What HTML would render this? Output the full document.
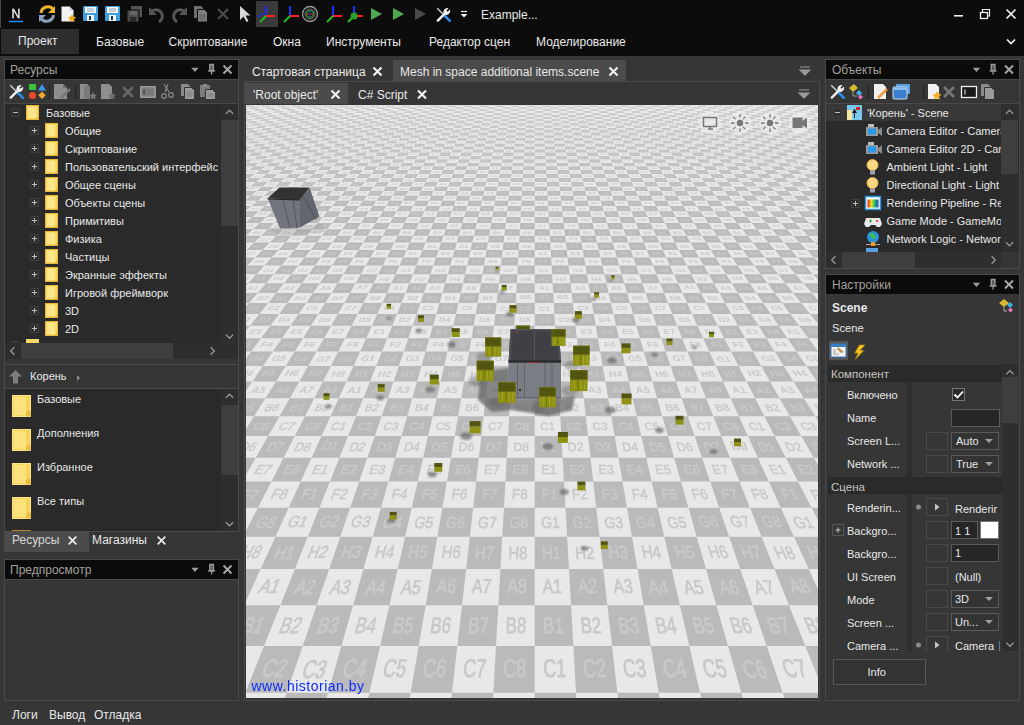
<!DOCTYPE html><html><head><meta charset="utf-8"><style>
*{margin:0;padding:0}
html,body{width:1024px;height:725px;overflow:hidden;background:#363636;font-family:"Liberation Sans",sans-serif;color:#e8e8e8;position:relative}
.t{position:absolute;white-space:nowrap;line-height:14px;height:14px}
.r{position:absolute}
svg{position:absolute;overflow:hidden}
</style></head><body><div class="r" style="left:0px;top:0px;width:1024px;height:56px;background:#0c0c0c;"></div>
<div class="r" style="left:1px;top:29px;width:78px;height:25px;background:#2e2e2e;"></div>
<div class="r" style="left:0px;top:0px;width:1px;height:28px;background:#4a4a4a;"></div>
<div class="t" style="left:18px;top:33.7px;font-size:12px;">Проект</div>
<div class="t" style="left:96px;top:35.4px;font-size:12px;">Базовые</div>
<div class="t" style="left:168.6px;top:35.4px;font-size:12px;">Скриптование</div>
<div class="t" style="left:273px;top:35.4px;font-size:12px;">Окна</div>
<div class="t" style="left:326px;top:35.4px;font-size:12px;">Инструменты</div>
<div class="t" style="left:429px;top:35.4px;font-size:12px;">Редактор сцен</div>
<div class="t" style="left:536px;top:35.4px;font-size:12px;">Моделирование</div>
<div class="t" style="left:481px;top:8.4px;font-size:12px;">Example...</div>
<div class="r" style="left:256px;top:1px;width:22px;height:26px;background:#3a3a3a;"></div>
<div class="r" style="left:4px;top:59px;width:235px;height:473px;border:1px solid #4a4a4a;box-sizing:border-box;background:#363636;"></div>
<div class="r" style="left:5px;top:60px;width:233px;height:19px;background:#0b0b0b;"></div>
<div class="t" style="left:10px;top:63.4px;font-size:12px;color:#a3a09a;">Ресурсы</div>
<div class="r" style="left:5px;top:79px;width:233px;height:1px;background:#4a4a4a;"></div>
<div class="r" style="left:5px;top:103px;width:233px;height:1px;background:#4a4a4a;"></div>
<div class="r" style="left:5px;top:104px;width:233px;height:239px;background:#2a2a2a;"></div>
<div class="r" style="left:221px;top:104px;width:17px;height:239px;background:#2e2e2e;"></div><div class="r" style="left:221px;top:120px;width:17px;height:106px;background:#3e3e3e;"></div>
<div class="r" style="left:5px;top:343px;width:233px;height:21px;background:#363636;"></div>
<div class="r" style="left:5px;top:343px;width:233px;height:16px;background:#2e2e2e;"></div><div class="r" style="left:21px;top:343px;width:152px;height:16px;background:#3e3e3e;"></div>
<div class="r" style="left:5px;top:364px;width:233px;height:1px;background:#4a4a4a;"></div>
<div class="r" style="left:5px;top:388px;width:233px;height:1px;background:#4a4a4a;"></div>
<div class="r" style="left:5px;top:389px;width:233px;height:142px;background:#2a2a2a;"></div>
<div class="r" style="left:221px;top:389px;width:17px;height:142px;background:#2e2e2e;"></div><div class="r" style="left:221px;top:405px;width:17px;height:70px;background:#3e3e3e;"></div>
<div class="t" style="left:46px;top:106.4px;font-size:11px;">Базовые</div>
<div class="t" style="left:65px;top:124.4px;font-size:11px;">Общие</div>
<div class="t" style="left:65px;top:142.4px;font-size:11px;">Скриптование</div>
<div class="t" style="left:65px;top:160.4px;font-size:11px;">Пользовательский интерфейс</div>
<div class="t" style="left:65px;top:178.4px;font-size:11px;">Общее сцены</div>
<div class="t" style="left:65px;top:196.4px;font-size:11px;">Объекты сцены</div>
<div class="t" style="left:65px;top:214.4px;font-size:11px;">Примитивы</div>
<div class="t" style="left:65px;top:232.4px;font-size:11px;">Физика</div>
<div class="t" style="left:65px;top:250.4px;font-size:11px;">Частицы</div>
<div class="t" style="left:65px;top:268.4px;font-size:11px;">Экранные эффекты</div>
<div class="t" style="left:65px;top:286.4px;font-size:11px;">Игровой фреймворк</div>
<div class="t" style="left:65px;top:304.4px;font-size:11px;">3D</div>
<div class="t" style="left:65px;top:322.4px;font-size:11px;">2D</div>
<div class="t" style="left:30px;top:369.4px;font-size:11px;">Корень</div>
<div class="t" style="left:37px;top:392.4px;font-size:11px;">Базовые</div>
<div class="t" style="left:37px;top:426.4px;font-size:11px;">Дополнения</div>
<div class="t" style="left:37px;top:460.4px;font-size:11px;">Избранное</div>
<div class="t" style="left:37px;top:494.4px;font-size:11px;">Все типы</div>
<div class="r" style="left:4px;top:531px;width:85px;height:21px;background:#4b4b4b;"></div>
<div class="t" style="left:12px;top:533.4px;font-size:12px;color:#d8d8d8;">Ресурсы</div>
<div class="t" style="left:92px;top:533.4px;font-size:12px;">Магазины</div>
<div class="r" style="left:4px;top:559px;width:235px;height:142px;border:1px solid #4a4a4a;box-sizing:border-box;background:#363636;"></div>
<div class="r" style="left:5px;top:560px;width:233px;height:19px;background:#0b0b0b;"></div>
<div class="t" style="left:10px;top:563.4px;font-size:12px;color:#a3a09a;">Предпросмотр</div>
<div class="r" style="left:5px;top:579px;width:233px;height:1px;background:#4a4a4a;"></div>
<div class="t" style="left:12px;top:708.4px;font-size:12px;">Логи</div>
<div class="t" style="left:49px;top:708.4px;font-size:12px;">Вывод</div>
<div class="t" style="left:94px;top:708.4px;font-size:12px;">Отладка</div>
<div class="r" style="left:393px;top:60px;width:233px;height:21px;background:#4b4b4b;"></div>
<div class="t" style="left:252px;top:65.4px;font-size:12px;">Стартовая страница</div>
<div class="t" style="left:400px;top:65.4px;font-size:12px;">Mesh in space additional items.scene</div>
<div class="r" style="left:244px;top:81px;width:576px;height:620px;border:1px solid #4a4a4a;box-sizing:border-box;background:#363636;"></div>
<div class="r" style="left:245px;top:83px;width:103px;height:21px;background:#4b4b4b;"></div>
<div class="t" style="left:253px;top:88.4px;font-size:12px;">'Root object'</div>
<div class="t" style="left:358px;top:88.4px;font-size:12px;">C# Script</div>
<div class="r" style="left:825px;top:59px;width:195px;height:210px;border:1px solid #4a4a4a;box-sizing:border-box;background:#363636;"></div>
<div class="r" style="left:826px;top:60px;width:193px;height:19px;background:#0b0b0b;"></div>
<div class="t" style="left:832px;top:63.4px;font-size:12px;color:#a3a09a;">Объекты</div>
<div class="r" style="left:826px;top:79px;width:193px;height:1px;background:#4a4a4a;"></div>
<div class="r" style="left:826px;top:103px;width:193px;height:1px;background:#4a4a4a;"></div>
<div class="r" style="left:826px;top:104px;width:193px;height:148px;background:#2a2a2a;"></div>
<div class="r" style="left:826px;top:104px;width:175px;height:17px;background:#383838;"></div>
<div class="r" style="left:1001px;top:104px;width:17px;height:148px;background:#2e2e2e;"></div><div class="r" style="left:1001px;top:120px;width:17px;height:54px;background:#3e3e3e;"></div>
<div class="r" style="left:826px;top:252px;width:193px;height:16px;background:#363636;"></div>
<div class="r" style="left:826px;top:252px;width:175px;height:16px;background:#2e2e2e;"></div><div class="r" style="left:842px;top:252px;width:73px;height:16px;background:#3e3e3e;"></div>
<div class="t" style="left:867px;top:106.4px;font-size:11px;">'Корень' - Scene</div>
<div class="r" style="left:826px;top:104px;width:175px;height:148px;overflow:hidden"><div class="t" style="left:60.5px;top:20.4px;font-size:11px;">Camera Editor - Camera</div><div class="t" style="left:60.5px;top:38.4px;font-size:11px;">Camera Editor 2D - Camera</div><div class="t" style="left:60.5px;top:56.4px;font-size:11px;">Ambient Light - Light</div><div class="t" style="left:60.5px;top:74.4px;font-size:11px;">Directional Light - Light</div><div class="t" style="left:60.5px;top:92.4px;font-size:11px;">Rendering Pipeline - Render</div><div class="t" style="left:60.5px;top:110.4px;font-size:11px;">Game Mode - GameMode</div><div class="t" style="left:60.5px;top:128.4px;font-size:11px;">Network Logic - Network</div></div>
<div class="r" style="left:825px;top:274px;width:195px;height:427px;border:1px solid #4a4a4a;box-sizing:border-box;background:#363636;"></div>
<div class="r" style="left:826px;top:275px;width:193px;height:19px;background:#0b0b0b;"></div>
<div class="t" style="left:832px;top:278.4px;font-size:12px;color:#a3a09a;">Настройки</div>
<div class="t" style="left:832px;top:301.4px;font-size:12px;font-weight:bold">Scene</div>
<div class="t" style="left:832px;top:321.4px;font-size:11.2px;">Scene</div>
<div class="r" style="left:829px;top:341px;width:19px;height:19px;background:#555555;"></div>
<div class="r" style="left:828px;top:365px;width:174px;height:17px;background:#2a2a2a;"></div>
<div class="t" style="left:831px;top:366.9px;font-size:11.5px;color:#c8c5be;">Компонент</div>
<div class="r" style="left:1002px;top:364px;width:16px;height:287px;background:#2e2e2e;"></div><div class="r" style="left:1002px;top:377px;width:16px;height:46px;background:#3e3e3e;"></div>
<div class="r" style="left:906px;top:382px;width:6px;height:95px;background:#2e2e2e;"></div>
<div class="r" style="left:906px;top:494px;width:6px;height:157px;background:#2e2e2e;"></div>
<div class="t" style="left:847px;top:388.4px;font-size:11px;">Включено</div>
<div class="t" style="left:847px;top:411.4px;font-size:11px;">Name</div>
<div class="t" style="left:847px;top:434.4px;font-size:11px;">Screen L...</div>
<div class="t" style="left:847px;top:457.4px;font-size:11px;">Network ...</div>
<div class="r" style="left:951px;top:409px;width:49px;height:18px;border:1px solid #5a5a5a;box-sizing:border-box;background:#262626;"></div>
<div class="r" style="left:926px;top:432px;width:22px;height:18px;border:1px solid #4a4a4a;box-sizing:border-box;background:#363636;"></div>
<div class="r" style="left:951px;top:432px;width:48px;height:18px;border:1px solid #5a5a5a;box-sizing:border-box;background:#333333;"></div>
<div class="r" style="left:926px;top:455px;width:22px;height:18px;border:1px solid #4a4a4a;box-sizing:border-box;background:#363636;"></div>
<div class="r" style="left:951px;top:455px;width:48px;height:18px;border:1px solid #5a5a5a;box-sizing:border-box;background:#333333;"></div>
<div class="t" style="left:956px;top:434.4px;font-size:11px;">Auto</div>
<div class="t" style="left:956px;top:457.4px;font-size:11px;">True</div>
<div class="r" style="left:828px;top:477px;width:174px;height:17px;background:#2a2a2a;"></div>
<div class="t" style="left:831px;top:479.9px;font-size:11.5px;color:#c8c5be;">Сцена</div>
<div class="t" style="left:847px;top:501.4px;font-size:11px;">Renderin...</div>
<div class="t" style="left:847px;top:524.4px;font-size:11px;">Backgro...</div>
<div class="t" style="left:847px;top:547.4px;font-size:11px;">Backgro...</div>
<div class="t" style="left:847px;top:570.4px;font-size:11px;">UI Screen</div>
<div class="t" style="left:847px;top:593.4px;font-size:11px;">Mode</div>
<div class="t" style="left:847px;top:616.4px;font-size:11px;">Screen ...</div>
<div class="t" style="left:847px;top:639.4px;font-size:11px;">Camera ...</div>
<div class="r" style="left:926px;top:498px;width:22px;height:18px;border:1px solid #4a4a4a;box-sizing:border-box;background:#363636;"></div>
<div class="t" style="left:955px;top:502.4px;font-size:11px;">Renderir</div>
<div class="r" style="left:926px;top:521px;width:22px;height:18px;border:1px solid #4a4a4a;box-sizing:border-box;background:#363636;"></div>
<div class="r" style="left:951px;top:521px;width:27px;height:18px;border:1px solid #5a5a5a;box-sizing:border-box;background:#262626;"></div>
<div class="t" style="left:955px;top:524.4px;font-size:11px;">1 1</div>
<div class="r" style="left:980px;top:521px;width:19px;height:18px;border:1px solid #777;box-sizing:border-box;background:#ffffff;"></div>
<div class="r" style="left:926px;top:544px;width:22px;height:18px;border:1px solid #4a4a4a;box-sizing:border-box;background:#363636;"></div>
<div class="r" style="left:951px;top:544px;width:48px;height:18px;border:1px solid #5a5a5a;box-sizing:border-box;background:#262626;"></div>
<div class="t" style="left:955px;top:546.4px;font-size:11px;">1</div>
<div class="r" style="left:926px;top:567px;width:22px;height:18px;border:1px solid #4a4a4a;box-sizing:border-box;background:#363636;"></div>
<div class="t" style="left:955px;top:570.4px;font-size:11px;">(Null)</div>
<div class="r" style="left:926px;top:590px;width:22px;height:18px;border:1px solid #4a4a4a;box-sizing:border-box;background:#363636;"></div>
<div class="r" style="left:951px;top:590px;width:48px;height:18px;border:1px solid #5a5a5a;box-sizing:border-box;background:#333333;"></div>
<div class="t" style="left:955px;top:592.4px;font-size:11px;">3D</div>
<div class="r" style="left:926px;top:613px;width:22px;height:18px;border:1px solid #4a4a4a;box-sizing:border-box;background:#363636;"></div>
<div class="r" style="left:951px;top:613px;width:48px;height:18px;border:1px solid #5a5a5a;box-sizing:border-box;background:#333333;"></div>
<div class="t" style="left:955px;top:615.4px;font-size:11px;">Un...</div>
<div class="r" style="left:926px;top:636px;width:76px;height:15px;overflow:hidden"><div class="r" style="left:0px;top:0px;width:22px;height:18px;border:1px solid #4a4a4a;box-sizing:border-box;background:#363636;"></div><div class="t" style="left:29px;top:3.4px;font-size:11px;">Camera</div><div class="r" style="left:73px;top:5px;width:1px;height:10px;background:#4a7ac0;"></div></div>
<div class="r" style="left:833px;top:659px;width:93px;height:26px;border:1px solid #585858;box-sizing:border-box;background:#333333;"></div>
<div class="t" style="left:867.5px;top:665.4px;font-size:11px;">Info</div>
<svg style="left:246px;top:105px;will-change:transform" width="572" height="593" viewBox="246 105 572 593"><rect x="246" y="105" width="572" height="593" fill="#e8e8e8"/><path fill-rule="evenodd" fill="#bababa" d="M241 692.7H823V746H241ZM241 605.3H823V646.1H241ZM241 536.7H823V569H241ZM241 481.5H823V507.7H241ZM241 436.1H823V457.8H241ZM241 398.2H823V416.3H241ZM265.4 398.2L289.8 398.2L90.9 746L46.5 746ZM314.3 398.2L338.8 398.2L179.6 746L135.2 746ZM363.3 398.2L387.8 398.2L268.4 746L224 746ZM412.3 398.2L436.8 398.2L357.2 746L312.8 746ZM461.2 398.2L485.7 398.2L445.9 746L401.5 746ZM510.2 398.2L534.7 398.2L534.7 746L490.3 746ZM559.2 398.2L583.7 398.2L623.5 746L579.1 746ZM608.2 398.2L632.6 398.2L712.2 746L667.9 746ZM657.1 398.2L681.6 398.2L801 746L756.6 746ZM706.1 398.2L730.6 398.2L889.8 746L845.4 746ZM755.1 398.2L779.6 398.2L978.5 746L934.2 746ZM804 398.2L828.5 398.2L1067.3 746L1022.9 746Z"/><path fill-rule="evenodd" fill="#bababa" d="M241 365.9H823V381.4H241ZM241 338.2H823V351.5H241ZM241 314H823V325.7H241ZM241 292.9H823V303.1H241ZM241 274.2H823V283.3H241ZM239 274.2L256.4 274.2L142.9 398.2L118.4 398.2ZM273.8 274.2L291.2 274.2L191.9 398.2L167.4 398.2ZM308.6 274.2L325.9 274.2L240.9 398.2L216.4 398.2ZM343.3 274.2L360.7 274.2L289.8 398.2L265.4 398.2ZM378.1 274.2L395.5 274.2L338.8 398.2L314.3 398.2ZM412.9 274.2L430.3 274.2L387.8 398.2L363.3 398.2ZM447.7 274.2L465.1 274.2L436.8 398.2L412.3 398.2ZM482.5 274.2L499.9 274.2L485.7 398.2L461.2 398.2ZM517.3 274.2L534.7 274.2L534.7 398.2L510.2 398.2ZM552.1 274.2L569.5 274.2L583.7 398.2L559.2 398.2ZM586.9 274.2L604.3 274.2L632.6 398.2L608.2 398.2ZM621.7 274.2L639.1 274.2L681.6 398.2L657.1 398.2ZM656.5 274.2L673.9 274.2L730.6 398.2L706.1 398.2ZM691.3 274.2L708.7 274.2L779.6 398.2L755.1 398.2ZM726.1 274.2L743.5 274.2L828.5 398.2L804 398.2ZM760.8 274.2L778.2 274.2L877.5 398.2L853 398.2ZM795.6 274.2L813 274.2L926.5 398.2L902 398.2Z"/><path fill-rule="evenodd" fill="#bababa" d="M241 257.6H823V265.6H241ZM241 242.6H823V249.9H241ZM241 229.2H823V235.7H241ZM241 217H823V223H241ZM238.1 217L252.2 217L186.8 274.2L169.4 274.2ZM266.3 217L280.5 217L221.6 274.2L204.2 274.2ZM294.6 217L308.7 217L256.4 274.2L239 274.2ZM322.8 217L337 217L291.2 274.2L273.8 274.2ZM351.1 217L365.2 217L325.9 274.2L308.6 274.2ZM379.3 217L393.5 217L360.7 274.2L343.3 274.2ZM407.6 217L421.7 217L395.5 274.2L378.1 274.2ZM435.8 217L450 217L430.3 274.2L412.9 274.2ZM464.1 217L478.2 217L465.1 274.2L447.7 274.2ZM492.3 217L506.5 217L499.9 274.2L482.5 274.2ZM520.6 217L534.7 217L534.7 274.2L517.3 274.2ZM548.8 217L562.9 217L569.5 274.2L552.1 274.2ZM577.1 217L591.2 217L604.3 274.2L586.9 274.2ZM605.3 217L619.4 217L639.1 274.2L621.7 274.2ZM633.6 217L647.7 217L673.9 274.2L656.5 274.2ZM661.8 217L675.9 217L708.7 274.2L691.3 274.2ZM690.1 217L704.2 217L743.5 274.2L726.1 274.2ZM718.3 217L732.4 217L778.2 274.2L760.8 274.2ZM746.6 217L760.7 217L813 274.2L795.6 274.2ZM774.8 217L788.9 217L847.8 274.2L830.4 274.2ZM803.1 217L817.2 217L882.6 274.2L865.2 274.2Z"/><path fill-rule="evenodd" fill="#bdbdbd" d="M241 205.9H823V211.3H241ZM241 195.8H823V200.7H241ZM241 186.5H823V191H241ZM250 186.5L262.4 186.5L224 217L209.8 217ZM274.8 186.5L287.1 186.5L252.2 217L238.1 217ZM299.5 186.5L311.9 186.5L280.5 217L266.3 217ZM324.3 186.5L336.6 186.5L308.7 217L294.6 217ZM349 186.5L361.4 186.5L337 217L322.8 217ZM373.8 186.5L386.2 186.5L365.2 217L351.1 217ZM398.5 186.5L410.9 186.5L393.5 217L379.3 217ZM423.3 186.5L435.7 186.5L421.7 217L407.6 217ZM448.1 186.5L460.4 186.5L450 217L435.8 217ZM472.8 186.5L485.2 186.5L478.2 217L464.1 217ZM497.6 186.5L509.9 186.5L506.5 217L492.3 217ZM522.3 186.5L534.7 186.5L534.7 217L520.6 217ZM547.1 186.5L559.5 186.5L562.9 217L548.8 217ZM571.8 186.5L584.2 186.5L591.2 217L577.1 217ZM596.6 186.5L609 186.5L619.4 217L605.3 217ZM621.3 186.5L633.7 186.5L647.7 217L633.6 217ZM646.1 186.5L658.5 186.5L675.9 217L661.8 217ZM670.9 186.5L683.2 186.5L704.2 217L690.1 217ZM695.6 186.5L708 186.5L732.4 217L718.3 217ZM720.4 186.5L732.8 186.5L760.7 217L746.6 217ZM745.1 186.5L757.5 186.5L788.9 217L774.8 217ZM769.9 186.5L782.3 186.5L817.2 217L803.1 217ZM794.6 186.5L807 186.5L845.4 217L831.3 217ZM819.4 186.5L831.8 186.5L873.7 217L859.6 217Z"/><rect x="246" y="162.7" width="572" height="23.8" fill="#e9e9e9"/><path fill-rule="evenodd" fill="#c1c1c1" d="M241 177.9H823V182.1H241ZM241 170H823V173.9H241ZM241 162.7H823V166.3H241ZM237.3 162.7L248.3 162.7L212.9 186.5L200.5 186.5ZM259.3 162.7L270.3 162.7L237.6 186.5L225.2 186.5ZM281.3 162.7L292.3 162.7L262.4 186.5L250 186.5ZM303.4 162.7L314.4 162.7L287.1 186.5L274.8 186.5ZM325.4 162.7L336.4 162.7L311.9 186.5L299.5 186.5ZM347.4 162.7L358.4 162.7L336.6 186.5L324.3 186.5ZM369.5 162.7L380.5 162.7L361.4 186.5L349 186.5ZM391.5 162.7L402.5 162.7L386.2 186.5L373.8 186.5ZM413.5 162.7L424.5 162.7L410.9 186.5L398.5 186.5ZM435.6 162.7L446.6 162.7L435.7 186.5L423.3 186.5ZM457.6 162.7L468.6 162.7L460.4 186.5L448.1 186.5ZM479.6 162.7L490.6 162.7L485.2 186.5L472.8 186.5ZM501.7 162.7L512.7 162.7L509.9 186.5L497.6 186.5ZM523.7 162.7L534.7 162.7L534.7 186.5L522.3 186.5ZM545.7 162.7L556.7 162.7L559.5 186.5L547.1 186.5ZM567.7 162.7L578.8 162.7L584.2 186.5L571.8 186.5ZM589.8 162.7L600.8 162.7L609 186.5L596.6 186.5ZM611.8 162.7L622.8 162.7L633.7 186.5L621.3 186.5ZM633.8 162.7L644.9 162.7L658.5 186.5L646.1 186.5ZM655.9 162.7L666.9 162.7L683.2 186.5L670.9 186.5ZM677.9 162.7L688.9 162.7L708 186.5L695.6 186.5ZM699.9 162.7L711 162.7L732.8 186.5L720.4 186.5ZM722 162.7L733 162.7L757.5 186.5L745.1 186.5ZM744 162.7L755 162.7L782.3 186.5L769.9 186.5ZM766 162.7L777.1 162.7L807 186.5L794.6 186.5ZM788.1 162.7L799.1 162.7L831.8 186.5L819.4 186.5ZM810.1 162.7L821.1 162.7L856.5 186.5L844.2 186.5Z"/><rect x="246" y="143.6" width="572" height="19.1" fill="#e9e9e9"/><path fill-rule="evenodd" fill="#c4c4c4" d="M241 155.9H823V159.2H241ZM241 149.5H823V152.6H241ZM241 143.6H823V146.5H241ZM246.9 143.6L256.8 143.6L226.2 162.7L215.2 162.7ZM266.7 143.6L276.7 143.6L248.3 162.7L237.3 162.7ZM286.6 143.6L296.5 143.6L270.3 162.7L259.3 162.7ZM306.4 143.6L316.4 143.6L292.3 162.7L281.3 162.7ZM326.3 143.6L336.2 143.6L314.4 162.7L303.4 162.7ZM346.1 143.6L356.1 143.6L336.4 162.7L325.4 162.7ZM366 143.6L375.9 143.6L358.4 162.7L347.4 162.7ZM385.8 143.6L395.8 143.6L380.5 162.7L369.5 162.7ZM405.7 143.6L415.6 143.6L402.5 162.7L391.5 162.7ZM425.5 143.6L435.5 143.6L424.5 162.7L413.5 162.7ZM445.4 143.6L455.3 143.6L446.6 162.7L435.6 162.7ZM465.2 143.6L475.2 143.6L468.6 162.7L457.6 162.7ZM485.1 143.6L495 143.6L490.6 162.7L479.6 162.7ZM504.9 143.6L514.9 143.6L512.7 162.7L501.7 162.7ZM524.8 143.6L534.7 143.6L534.7 162.7L523.7 162.7ZM544.6 143.6L554.5 143.6L556.7 162.7L545.7 162.7ZM564.5 143.6L574.4 143.6L578.8 162.7L567.7 162.7ZM584.3 143.6L594.2 143.6L600.8 162.7L589.8 162.7ZM604.2 143.6L614.1 143.6L622.8 162.7L611.8 162.7ZM624 143.6L633.9 143.6L644.9 162.7L633.8 162.7ZM643.9 143.6L653.8 143.6L666.9 162.7L655.9 162.7ZM663.7 143.6L673.6 143.6L688.9 162.7L677.9 162.7ZM683.6 143.6L693.5 143.6L711 162.7L699.9 162.7ZM703.4 143.6L713.3 143.6L733 162.7L722 162.7ZM723.3 143.6L733.2 143.6L755 162.7L744 162.7ZM743.1 143.6L753 143.6L777.1 162.7L766 162.7ZM763 143.6L772.9 143.6L799.1 162.7L788.1 162.7ZM782.8 143.6L792.7 143.6L821.1 162.7L810.1 162.7ZM802.7 143.6L812.6 143.6L843.2 162.7L832.1 162.7Z"/><rect x="246" y="127.9" width="572" height="15.6" fill="#e9e9e9"/><path fill-rule="evenodd" fill="#c7c7c7" d="M241 138H823V140.8H241ZM241 132.8H823V135.4H241ZM241 127.9H823V130.3H241ZM236.7 127.9L245.8 127.9L217.1 143.6L207.2 143.6ZM254.8 127.9L263.8 127.9L237 143.6L227 143.6ZM272.8 127.9L281.9 127.9L256.8 143.6L246.9 143.6ZM290.9 127.9L299.9 127.9L276.7 143.6L266.7 143.6ZM309 127.9L318 127.9L296.5 143.6L286.6 143.6ZM327 127.9L336.1 127.9L316.4 143.6L306.4 143.6ZM345.1 127.9L354.1 127.9L336.2 143.6L326.3 143.6ZM363.1 127.9L372.2 127.9L356.1 143.6L346.1 143.6ZM381.2 127.9L390.2 127.9L375.9 143.6L366 143.6ZM399.3 127.9L408.3 127.9L395.8 143.6L385.8 143.6ZM417.3 127.9L426.3 127.9L415.6 143.6L405.7 143.6ZM435.4 127.9L444.4 127.9L435.5 143.6L425.5 143.6ZM453.4 127.9L462.5 127.9L455.3 143.6L445.4 143.6ZM471.5 127.9L480.5 127.9L475.2 143.6L465.2 143.6ZM489.6 127.9L498.6 127.9L495 143.6L485.1 143.6ZM507.6 127.9L516.6 127.9L514.9 143.6L504.9 143.6ZM525.7 127.9L534.7 127.9L534.7 143.6L524.8 143.6ZM543.7 127.9L552.8 127.9L554.5 143.6L544.6 143.6ZM561.8 127.9L570.8 127.9L574.4 143.6L564.5 143.6ZM579.8 127.9L588.9 127.9L594.2 143.6L584.3 143.6ZM597.9 127.9L606.9 127.9L614.1 143.6L604.2 143.6ZM616 127.9L625 127.9L633.9 143.6L624 143.6ZM634 127.9L643.1 127.9L653.8 143.6L643.9 143.6ZM652.1 127.9L661.1 127.9L673.6 143.6L663.7 143.6ZM670.1 127.9L679.2 127.9L693.5 143.6L683.6 143.6ZM688.2 127.9L697.2 127.9L713.3 143.6L703.4 143.6ZM706.3 127.9L715.3 127.9L733.2 143.6L723.3 143.6ZM724.3 127.9L733.3 127.9L753 143.6L743.1 143.6ZM742.4 127.9L751.4 127.9L772.9 143.6L763 143.6ZM760.4 127.9L769.5 127.9L792.7 143.6L782.8 143.6ZM778.5 127.9L787.5 127.9L812.6 143.6L802.7 143.6ZM796.6 127.9L805.6 127.9L832.4 143.6L822.5 143.6ZM814.6 127.9L823.6 127.9L852.3 143.6L842.4 143.6Z"/><rect x="246" y="114.9" width="572" height="13.1" fill="#eaeaea"/><path fill-rule="evenodd" fill="#cacaca" d="M241 123.3H823V125.6H241ZM241 119H823V121.1H241ZM241 114.9H823V116.9H241ZM244.8 114.9L253.1 114.9L227.7 127.9L218.7 127.9ZM261.4 114.9L269.7 114.9L245.8 127.9L236.7 127.9ZM277.9 114.9L286.2 114.9L263.8 127.9L254.8 127.9ZM294.5 114.9L302.8 114.9L281.9 127.9L272.8 127.9ZM311.1 114.9L319.4 114.9L299.9 127.9L290.9 127.9ZM327.6 114.9L335.9 114.9L318 127.9L309 127.9ZM344.2 114.9L352.5 114.9L336.1 127.9L327 127.9ZM360.8 114.9L369 114.9L354.1 127.9L345.1 127.9ZM377.3 114.9L385.6 114.9L372.2 127.9L363.1 127.9ZM393.9 114.9L402.2 114.9L390.2 127.9L381.2 127.9ZM410.5 114.9L418.7 114.9L408.3 127.9L399.3 127.9ZM427 114.9L435.3 114.9L426.3 127.9L417.3 127.9ZM443.6 114.9L451.9 114.9L444.4 127.9L435.4 127.9ZM460.2 114.9L468.4 114.9L462.5 127.9L453.4 127.9ZM476.7 114.9L485 114.9L480.5 127.9L471.5 127.9ZM493.3 114.9L501.6 114.9L498.6 127.9L489.6 127.9ZM509.9 114.9L518.1 114.9L516.6 127.9L507.6 127.9ZM526.4 114.9L534.7 114.9L534.7 127.9L525.7 127.9ZM543 114.9L551.3 114.9L552.8 127.9L543.7 127.9ZM559.5 114.9L567.8 114.9L570.8 127.9L561.8 127.9ZM576.1 114.9L584.4 114.9L588.9 127.9L579.8 127.9ZM592.7 114.9L601 114.9L606.9 127.9L597.9 127.9ZM609.2 114.9L617.5 114.9L625 127.9L616 127.9ZM625.8 114.9L634.1 114.9L643.1 127.9L634 127.9ZM642.4 114.9L650.7 114.9L661.1 127.9L652.1 127.9ZM658.9 114.9L667.2 114.9L679.2 127.9L670.1 127.9ZM675.5 114.9L683.8 114.9L697.2 127.9L688.2 127.9ZM692.1 114.9L700.4 114.9L715.3 127.9L706.3 127.9ZM708.6 114.9L716.9 114.9L733.3 127.9L724.3 127.9ZM725.2 114.9L733.5 114.9L751.4 127.9L742.4 127.9ZM741.8 114.9L750 114.9L769.5 127.9L760.4 127.9ZM758.3 114.9L766.6 114.9L787.5 127.9L778.5 127.9ZM774.9 114.9L783.2 114.9L805.6 127.9L796.6 127.9ZM791.5 114.9L799.7 114.9L823.6 127.9L814.6 127.9ZM808 114.9L816.3 114.9L841.7 127.9L832.7 127.9Z"/><rect x="246" y="100.5" width="572" height="14.4" fill="#eaeaea"/><path fill-rule="evenodd" fill="#cdcdcd" d="M241 111H823V112.9H241ZM241 107.3H823V109.1H241ZM241 103.8H823V105.5H241ZM241 100.5H823V102.1H241ZM243.8 100.5L251.2 100.5L220 114.9L211.7 114.9ZM258.7 100.5L266.1 100.5L236.5 114.9L228.2 114.9ZM273.6 100.5L281.1 100.5L253.1 114.9L244.8 114.9ZM288.5 100.5L296 100.5L269.7 114.9L261.4 114.9ZM303.4 100.5L310.9 100.5L286.2 114.9L277.9 114.9ZM318.4 100.5L325.8 100.5L302.8 114.9L294.5 114.9ZM333.3 100.5L340.7 100.5L319.4 114.9L311.1 114.9ZM348.2 100.5L355.7 100.5L335.9 114.9L327.6 114.9ZM363.1 100.5L370.6 100.5L352.5 114.9L344.2 114.9ZM378 100.5L385.5 100.5L369 114.9L360.8 114.9ZM393 100.5L400.4 100.5L385.6 114.9L377.3 114.9ZM407.9 100.5L415.3 100.5L402.2 114.9L393.9 114.9ZM422.8 100.5L430.3 100.5L418.7 114.9L410.5 114.9ZM437.7 100.5L445.2 100.5L435.3 114.9L427 114.9ZM452.6 100.5L460.1 100.5L451.9 114.9L443.6 114.9ZM467.6 100.5L475 100.5L468.4 114.9L460.2 114.9ZM482.5 100.5L489.9 100.5L485 114.9L476.7 114.9ZM497.4 100.5L504.9 100.5L501.6 114.9L493.3 114.9ZM512.3 100.5L519.8 100.5L518.1 114.9L509.9 114.9ZM527.2 100.5L534.7 100.5L534.7 114.9L526.4 114.9ZM542.2 100.5L549.6 100.5L551.3 114.9L543 114.9ZM557.1 100.5L564.5 100.5L567.8 114.9L559.5 114.9ZM572 100.5L579.5 100.5L584.4 114.9L576.1 114.9ZM586.9 100.5L594.4 100.5L601 114.9L592.7 114.9ZM601.8 100.5L609.3 100.5L617.5 114.9L609.2 114.9ZM616.8 100.5L624.2 100.5L634.1 114.9L625.8 114.9ZM631.7 100.5L639.1 100.5L650.7 114.9L642.4 114.9ZM646.6 100.5L654.1 100.5L667.2 114.9L658.9 114.9ZM661.5 100.5L669 100.5L683.8 114.9L675.5 114.9ZM676.4 100.5L683.9 100.5L700.4 114.9L692.1 114.9ZM691.4 100.5L698.8 100.5L716.9 114.9L708.6 114.9ZM706.3 100.5L713.7 100.5L733.5 114.9L725.2 114.9ZM721.2 100.5L728.7 100.5L750 114.9L741.8 114.9ZM736.1 100.5L743.6 100.5L766.6 114.9L758.3 114.9ZM751 100.5L758.5 100.5L783.2 114.9L774.9 114.9ZM766 100.5L773.4 100.5L799.7 114.9L791.5 114.9ZM780.9 100.5L788.3 100.5L816.3 114.9L808 114.9ZM795.8 100.5L803.3 100.5L832.9 114.9L824.6 114.9ZM810.7 100.5L818.2 100.5L849.4 114.9L841.2 114.9Z"/><g fill="#c9c9c9" stroke="#c9c9c9" stroke-width="1.8" font-family="Liberation Sans" font-size="50.0" text-anchor="middle" dominant-baseline="central"><text transform="matrix(0.3857 0 -0.2183 0.5872 256.5 718.4)">D2</text><text transform="matrix(0.3857 0 -0.1847 0.5872 299.3 718.4)">D3</text><text transform="matrix(0.3857 0 -0.1511 0.5872 342.1 718.4)">D4</text><text transform="matrix(0.3857 0 -0.1176 0.5872 384.9 718.4)">D5</text><text transform="matrix(0.3857 0 -0.084 0.5872 427.7 718.4)">D6</text><text transform="matrix(0.3857 0 -0.0504 0.5872 470.5 718.4)">D7</text><text transform="matrix(0.3857 0 -0.0168 0.5872 513.3 718.4)">D8</text><text transform="matrix(0.3857 0 0.0168 0.5872 556.1 718.4)">D1</text><text transform="matrix(0.3857 0 0.0504 0.5872 598.9 718.4)">D2</text><text transform="matrix(0.3857 0 0.084 0.5872 641.7 718.4)">D3</text><text transform="matrix(0.3857 0 0.1176 0.5872 684.5 718.4)">D4</text><text transform="matrix(0.3857 0 0.1511 0.5872 727.3 718.4)">D5</text><text transform="matrix(0.3857 0 0.1847 0.5872 770.1 718.4)">D6</text><text transform="matrix(0.3857 0 0.2183 0.5872 812.9 718.4)">D7</text><text transform="matrix(0.36 0 -0.2195 0.5116 235 668.6)">C1</text><text transform="matrix(0.36 0 -0.1902 0.5116 275 668.6)">C2</text><text transform="matrix(0.36 0 -0.161 0.5116 314.9 668.6)">C3</text><text transform="matrix(0.36 0 -0.1317 0.5116 354.9 668.6)">C4</text><text transform="matrix(0.36 0 -0.1024 0.5116 394.9 668.6)">C5</text><text transform="matrix(0.36 0 -0.0732 0.5116 434.8 668.6)">C6</text><text transform="matrix(0.36 0 -0.0439 0.5116 474.8 668.6)">C7</text><text transform="matrix(0.36 0 -0.0146 0.5116 514.7 668.6)">C8</text><text transform="matrix(0.36 0 0.0146 0.5116 554.7 668.6)">C1</text><text transform="matrix(0.36 0 0.0439 0.5116 594.6 668.6)">C2</text><text transform="matrix(0.36 0 0.0732 0.5116 634.6 668.6)">C3</text><text transform="matrix(0.36 0 0.1024 0.5116 674.5 668.6)">C4</text><text transform="matrix(0.36 0 0.1317 0.5116 714.5 668.6)">C5</text><text transform="matrix(0.36 0 0.161 0.5116 754.5 668.6)">C6</text><text transform="matrix(0.36 0 0.1902 0.5116 794.4 668.6)">C7</text><text transform="matrix(0.36 0 0.2195 0.5116 834.4 668.6)">C8</text><text transform="matrix(0.3375 0 -0.2187 0.4497 216.2 625.1)">B8</text><text transform="matrix(0.3375 0 -0.1929 0.4497 253.7 625.1)">B1</text><text transform="matrix(0.3375 0 -0.1672 0.4497 291.2 625.1)">B2</text><text transform="matrix(0.3375 0 -0.1415 0.4497 328.6 625.1)">B3</text><text transform="matrix(0.3375 0 -0.1158 0.4497 366.1 625.1)">B4</text><text transform="matrix(0.3375 0 -0.09 0.4497 403.6 625.1)">B5</text><text transform="matrix(0.3375 0 -0.0643 0.4497 441 625.1)">B6</text><text transform="matrix(0.3375 0 -0.0386 0.4497 478.5 625.1)">B7</text><text transform="matrix(0.3375 0 -0.0129 0.4497 516 625.1)">B8</text><text transform="matrix(0.3375 0 0.0129 0.4497 553.4 625.1)">B1</text><text transform="matrix(0.3375 0 0.0386 0.4497 590.9 625.1)">B2</text><text transform="matrix(0.3375 0 0.0643 0.4497 628.4 625.1)">B3</text><text transform="matrix(0.3375 0 0.09 0.4497 665.8 625.1)">B4</text><text transform="matrix(0.3375 0 0.1158 0.4497 703.3 625.1)">B5</text><text transform="matrix(0.3375 0 0.1415 0.4497 740.8 625.1)">B6</text><text transform="matrix(0.3375 0 0.1672 0.4497 778.2 625.1)">B7</text><text transform="matrix(0.3375 0 0.1929 0.4497 815.7 625.1)">B8</text><text transform="matrix(0.3177 0 -0.1937 0.3984 234.9 586.6)">A8</text><text transform="matrix(0.3177 0 -0.1709 0.3984 270.2 586.6)">A1</text><text transform="matrix(0.3177 0 -0.1481 0.3984 305.5 586.6)">A2</text><text transform="matrix(0.3177 0 -0.1253 0.3984 340.7 586.6)">A3</text><text transform="matrix(0.3177 0 -0.1026 0.3984 376 586.6)">A4</text><text transform="matrix(0.3177 0 -0.0798 0.3984 411.3 586.6)">A5</text><text transform="matrix(0.3177 0 -0.057 0.3984 446.5 586.6)">A6</text><text transform="matrix(0.3177 0 -0.0342 0.3984 481.8 586.6)">A7</text><text transform="matrix(0.3177 0 -0.0114 0.3984 517.1 586.6)">A8</text><text transform="matrix(0.3177 0 0.0114 0.3984 552.3 586.6)">A1</text><text transform="matrix(0.3177 0 0.0342 0.3984 587.6 586.6)">A2</text><text transform="matrix(0.3177 0 0.057 0.3984 622.9 586.6)">A3</text><text transform="matrix(0.3177 0 0.0798 0.3984 658.1 586.6)">A4</text><text transform="matrix(0.3177 0 0.1026 0.3984 693.4 586.6)">A5</text><text transform="matrix(0.3177 0 0.1253 0.3984 728.7 586.6)">A6</text><text transform="matrix(0.3177 0 0.1481 0.3984 763.9 586.6)">A7</text><text transform="matrix(0.3177 0 0.1709 0.3984 799.2 586.6)">A8</text><text transform="matrix(0.3177 0 0.1937 0.3984 834.5 586.6)">A1</text><text transform="matrix(0.3 0 -0.1931 0.3554 218.2 552.4)">H7</text><text transform="matrix(0.3 0 -0.1728 0.3554 251.6 552.4)">H8</text><text transform="matrix(0.3 0 -0.1525 0.3554 284.9 552.4)">H1</text><text transform="matrix(0.3 0 -0.1322 0.3554 318.2 552.4)">H2</text><text transform="matrix(0.3 0 -0.1118 0.3554 351.5 552.4)">H3</text><text transform="matrix(0.3 0 -0.0915 0.3554 384.8 552.4)">H4</text><text transform="matrix(0.3 0 -0.0712 0.3554 418.1 552.4)">H5</text><text transform="matrix(0.3 0 -0.0508 0.3554 451.4 552.4)">H6</text><text transform="matrix(0.3 0 -0.0305 0.3554 484.7 552.4)">H7</text><text transform="matrix(0.3 0 -0.0102 0.3554 518 552.4)">H8</text><text transform="matrix(0.3 0 0.0102 0.3554 551.4 552.4)">H1</text><text transform="matrix(0.3 0 0.0305 0.3554 584.7 552.4)">H2</text><text transform="matrix(0.3 0 0.0508 0.3554 618 552.4)">H3</text><text transform="matrix(0.3 0 0.0712 0.3554 651.3 552.4)">H4</text><text transform="matrix(0.3 0 0.0915 0.3554 684.6 552.4)">H5</text><text transform="matrix(0.3 0 0.1118 0.3554 717.9 552.4)">H6</text><text transform="matrix(0.3 0 0.1322 0.3554 751.2 552.4)">H7</text><text transform="matrix(0.3 0 0.1525 0.3554 784.5 552.4)">H8</text><text transform="matrix(0.3 0 0.1728 0.3554 817.8 552.4)">H1</text><text transform="matrix(0.2842 0 -0.1734 0.3191 234.9 521.8)">G7</text><text transform="matrix(0.2842 0 -0.1551 0.3191 266.4 521.8)">G8</text><text transform="matrix(0.2842 0 -0.1369 0.3191 298 521.8)">G1</text><text transform="matrix(0.2842 0 -0.1186 0.3191 329.6 521.8)">G2</text><text transform="matrix(0.2842 0 -0.1004 0.3191 361.1 521.8)">G3</text><text transform="matrix(0.2842 0 -0.0821 0.3191 392.7 521.8)">G4</text><text transform="matrix(0.2842 0 -0.0639 0.3191 424.2 521.8)">G5</text><text transform="matrix(0.2842 0 -0.0456 0.3191 455.8 521.8)">G6</text><text transform="matrix(0.2842 0 -0.0274 0.3191 487.4 521.8)">G7</text><text transform="matrix(0.2842 0 -0.0091 0.3191 518.9 521.8)">G8</text><text transform="matrix(0.2842 0 0.0091 0.3191 550.5 521.8)">G1</text><text transform="matrix(0.2842 0 0.0274 0.3191 582 521.8)">G2</text><text transform="matrix(0.2842 0 0.0456 0.3191 613.6 521.8)">G3</text><text transform="matrix(0.2842 0 0.0639 0.3191 645.2 521.8)">G4</text><text transform="matrix(0.2842 0 0.0821 0.3191 676.7 521.8)">G5</text><text transform="matrix(0.2842 0 0.1004 0.3191 708.3 521.8)">G6</text><text transform="matrix(0.2842 0 0.1186 0.3191 739.8 521.8)">G7</text><text transform="matrix(0.2842 0 0.1369 0.3191 771.4 521.8)">G8</text><text transform="matrix(0.2842 0 0.1551 0.3191 803 521.8)">G1</text><text transform="matrix(0.2842 0 0.1734 0.3191 834.5 521.8)">G2</text><text transform="matrix(0.27 0 -0.173 0.288 219.9 494.3)">F6</text><text transform="matrix(0.27 0 -0.1565 0.288 249.8 494.3)">F7</text><text transform="matrix(0.27 0 -0.14 0.288 279.8 494.3)">F8</text><text transform="matrix(0.27 0 -0.1235 0.288 309.8 494.3)">F1</text><text transform="matrix(0.27 0 -0.1071 0.288 339.8 494.3)">F2</text><text transform="matrix(0.27 0 -0.0906 0.288 369.8 494.3)">F3</text><text transform="matrix(0.27 0 -0.0741 0.288 399.8 494.3)">F4</text><text transform="matrix(0.27 0 -0.0577 0.288 429.8 494.3)">F5</text><text transform="matrix(0.27 0 -0.0412 0.288 459.7 494.3)">F6</text><text transform="matrix(0.27 0 -0.0247 0.288 489.7 494.3)">F7</text><text transform="matrix(0.27 0 -0.0082 0.288 519.7 494.3)">F8</text><text transform="matrix(0.27 0 0.0082 0.288 549.7 494.3)">F1</text><text transform="matrix(0.27 0 0.0247 0.288 579.7 494.3)">F2</text><text transform="matrix(0.27 0 0.0412 0.288 609.7 494.3)">F3</text><text transform="matrix(0.27 0 0.0577 0.288 639.6 494.3)">F4</text><text transform="matrix(0.27 0 0.0741 0.288 669.6 494.3)">F5</text><text transform="matrix(0.27 0 0.0906 0.288 699.6 494.3)">F6</text><text transform="matrix(0.27 0 0.1071 0.288 729.6 494.3)">F7</text><text transform="matrix(0.27 0 0.1235 0.288 759.6 494.3)">F8</text><text transform="matrix(0.27 0 0.14 0.288 789.6 494.3)">F1</text><text transform="matrix(0.27 0 0.1565 0.288 819.6 494.3)">F2</text><text transform="matrix(0.2572 0 -0.1569 0.2612 234.8 469.4)">E6</text><text transform="matrix(0.2572 0 -0.142 0.2612 263.4 469.4)">E7</text><text transform="matrix(0.2572 0 -0.127 0.2612 291.9 469.4)">E8</text><text transform="matrix(0.2572 0 -0.1121 0.2612 320.5 469.4)">E1</text><text transform="matrix(0.2572 0 -0.0971 0.2612 349.1 469.4)">E2</text><text transform="matrix(0.2572 0 -0.0822 0.2612 377.6 469.4)">E3</text><text transform="matrix(0.2572 0 -0.0672 0.2612 406.2 469.4)">E4</text><text transform="matrix(0.2572 0 -0.0523 0.2612 434.7 469.4)">E5</text><text transform="matrix(0.2572 0 -0.0374 0.2612 463.3 469.4)">E6</text><text transform="matrix(0.2572 0 -0.0224 0.2612 491.9 469.4)">E7</text><text transform="matrix(0.2572 0 -0.0075 0.2612 520.4 469.4)">E8</text><text transform="matrix(0.2572 0 0.0075 0.2612 549 469.4)">E1</text><text transform="matrix(0.2572 0 0.0224 0.2612 577.5 469.4)">E2</text><text transform="matrix(0.2572 0 0.0374 0.2612 606.1 469.4)">E3</text><text transform="matrix(0.2572 0 0.0523 0.2612 634.7 469.4)">E4</text><text transform="matrix(0.2572 0 0.0672 0.2612 663.2 469.4)">E5</text><text transform="matrix(0.2572 0 0.0822 0.2612 691.8 469.4)">E6</text><text transform="matrix(0.2572 0 0.0971 0.2612 720.3 469.4)">E7</text><text transform="matrix(0.2572 0 0.1121 0.2612 748.9 469.4)">E8</text><text transform="matrix(0.2572 0 0.127 0.2612 777.5 469.4)">E1</text><text transform="matrix(0.2572 0 0.142 0.2612 806 469.4)">E2</text><text transform="matrix(0.2572 0 0.1569 0.2612 834.6 469.4)">E3</text><text transform="matrix(0.2455 0 -0.1566 0.2381 221.2 446.7)">D5</text><text transform="matrix(0.2455 0 -0.143 0.2381 248.4 446.7)">D6</text><text transform="matrix(0.2455 0 -0.1294 0.2381 275.7 446.7)">D7</text><text transform="matrix(0.2455 0 -0.1157 0.2381 303 446.7)">D8</text><text transform="matrix(0.2455 0 -0.1021 0.2381 330.2 446.7)">D1</text><text transform="matrix(0.2455 0 -0.0885 0.2381 357.5 446.7)">D2</text><text transform="matrix(0.2455 0 -0.0749 0.2381 384.7 446.7)">D3</text><text transform="matrix(0.2455 0 -0.0613 0.2381 412 446.7)">D4</text><text transform="matrix(0.2455 0 -0.0477 0.2381 439.3 446.7)">D5</text><text transform="matrix(0.2455 0 -0.034 0.2381 466.5 446.7)">D6</text><text transform="matrix(0.2455 0 -0.0204 0.2381 493.8 446.7)">D7</text><text transform="matrix(0.2455 0 -0.0068 0.2381 521.1 446.7)">D8</text><text transform="matrix(0.2455 0 0.0068 0.2381 548.3 446.7)">D1</text><text transform="matrix(0.2455 0 0.0204 0.2381 575.6 446.7)">D2</text><text transform="matrix(0.2455 0 0.034 0.2381 602.9 446.7)">D3</text><text transform="matrix(0.2455 0 0.0477 0.2381 630.1 446.7)">D4</text><text transform="matrix(0.2455 0 0.0613 0.2381 657.4 446.7)">D5</text><text transform="matrix(0.2455 0 0.0749 0.2381 684.7 446.7)">D6</text><text transform="matrix(0.2455 0 0.0885 0.2381 711.9 446.7)">D7</text><text transform="matrix(0.2455 0 0.1021 0.2381 739.2 446.7)">D8</text><text transform="matrix(0.2455 0 0.1157 0.2381 766.4 446.7)">D1</text><text transform="matrix(0.2455 0 0.1294 0.2381 793.7 446.7)">D2</text><text transform="matrix(0.2455 0 0.143 0.2381 821 446.7)">D3</text><text transform="matrix(0.2348 0 -0.1433 0.2178 234.8 426)">C5</text><text transform="matrix(0.2348 0 -0.1308 0.2178 260.9 426)">C6</text><text transform="matrix(0.2348 0 -0.1184 0.2178 286.9 426)">C7</text><text transform="matrix(0.2348 0 -0.1059 0.2178 313 426)">C8</text><text transform="matrix(0.2348 0 -0.0934 0.2178 339.1 426)">C1</text><text transform="matrix(0.2348 0 -0.081 0.2178 365.2 426)">C2</text><text transform="matrix(0.2348 0 -0.0685 0.2178 391.3 426)">C3</text><text transform="matrix(0.2348 0 -0.0561 0.2178 417.3 426)">C4</text><text transform="matrix(0.2348 0 -0.0436 0.2178 443.4 426)">C5</text><text transform="matrix(0.2348 0 -0.0311 0.2178 469.5 426)">C6</text><text transform="matrix(0.2348 0 -0.0187 0.2178 495.6 426)">C7</text><text transform="matrix(0.2348 0 -0.0062 0.2178 521.7 426)">C8</text><text transform="matrix(0.2348 0 0.0062 0.2178 547.7 426)">C1</text><text transform="matrix(0.2348 0 0.0187 0.2178 573.8 426)">C2</text><text transform="matrix(0.2348 0 0.0311 0.2178 599.9 426)">C3</text><text transform="matrix(0.2348 0 0.0436 0.2178 626 426)">C4</text><text transform="matrix(0.2348 0 0.0561 0.2178 652.1 426)">C5</text><text transform="matrix(0.2348 0 0.0685 0.2178 678.1 426)">C6</text><text transform="matrix(0.2348 0 0.081 0.2178 704.2 426)">C7</text><text transform="matrix(0.2348 0 0.0934 0.2178 730.3 426)">C8</text><text transform="matrix(0.2348 0 0.1059 0.2178 756.4 426)">C1</text><text transform="matrix(0.2348 0 0.1184 0.2178 782.5 426)">C2</text><text transform="matrix(0.2348 0 0.1308 0.2178 808.5 426)">C3</text><text transform="matrix(0.2348 0 0.1433 0.2178 834.6 426)">C4</text><text transform="matrix(0.2251 0 -0.1431 0.2001 222.3 407.1)">B4</text><text transform="matrix(0.2251 0 -0.1316 0.2001 247.3 407.1)">B5</text><text transform="matrix(0.2251 0 -0.1202 0.2001 272.2 407.1)">B6</text><text transform="matrix(0.2251 0 -0.1087 0.2001 297.2 407.1)">B7</text><text transform="matrix(0.2251 0 -0.0973 0.2001 322.2 407.1)">B8</text><text transform="matrix(0.2251 0 -0.0858 0.2001 347.2 407.1)">B1</text><text transform="matrix(0.2251 0 -0.0744 0.2001 372.2 407.1)">B2</text><text transform="matrix(0.2251 0 -0.0629 0.2001 397.2 407.1)">B3</text><text transform="matrix(0.2251 0 -0.0515 0.2001 422.2 407.1)">B4</text><text transform="matrix(0.2251 0 -0.0401 0.2001 447.2 407.1)">B5</text><text transform="matrix(0.2251 0 -0.0286 0.2001 472.2 407.1)">B6</text><text transform="matrix(0.2251 0 -0.0172 0.2001 497.2 407.1)">B7</text><text transform="matrix(0.2251 0 -0.0057 0.2001 522.2 407.1)">B8</text><text transform="matrix(0.2251 0 0.0057 0.2001 547.2 407.1)">B1</text><text transform="matrix(0.2251 0 0.0172 0.2001 572.2 407.1)">B2</text><text transform="matrix(0.2251 0 0.0286 0.2001 597.2 407.1)">B3</text><text transform="matrix(0.2251 0 0.0401 0.2001 622.2 407.1)">B4</text><text transform="matrix(0.2251 0 0.0515 0.2001 647.2 407.1)">B5</text><text transform="matrix(0.2251 0 0.0629 0.2001 672.2 407.1)">B6</text><text transform="matrix(0.2251 0 0.0744 0.2001 697.2 407.1)">B7</text><text transform="matrix(0.2251 0 0.0858 0.2001 722.2 407.1)">B8</text><text transform="matrix(0.2251 0 0.0973 0.2001 747.2 407.1)">B1</text><text transform="matrix(0.2251 0 0.1087 0.2001 772.2 407.1)">B2</text><text transform="matrix(0.2251 0 0.1202 0.2001 797.2 407.1)">B3</text><text transform="matrix(0.2251 0 0.1316 0.2001 822.1 407.1)">B4</text><text transform="matrix(0.2251 0 0.1431 0.2001 847.1 407.1)">B5</text></g><g fill="#d0d0d0" stroke="#d0d0d0" stroke-width="1.8" font-family="Liberation Sans" font-size="50.0" text-anchor="middle" dominant-baseline="central"></g><g fill="#c9c9c9" font-weight="bold" font-family="Liberation Sans" font-size="50.0" text-anchor="middle" dominant-baseline="central"><text transform="matrix(0.2161 0 -0.1318 0.1844 234.7 389.6)">A4</text><text transform="matrix(0.2161 0 -0.1213 0.1844 258.7 389.6)">A5</text><text transform="matrix(0.2161 0 -0.1108 0.1844 282.7 389.6)">A6</text><text transform="matrix(0.2161 0 -0.1002 0.1844 306.7 389.6)">A7</text><text transform="matrix(0.2161 0 -0.0897 0.1844 330.7 389.6)">A8</text><text transform="matrix(0.2161 0 -0.0791 0.1844 354.7 389.6)">A1</text><text transform="matrix(0.2161 0 -0.0686 0.1844 378.7 389.6)">A2</text><text transform="matrix(0.2161 0 -0.058 0.1844 402.7 389.6)">A3</text><text transform="matrix(0.2161 0 -0.0475 0.1844 426.7 389.6)">A4</text><text transform="matrix(0.2161 0 -0.0369 0.1844 450.7 389.6)">A5</text><text transform="matrix(0.2161 0 -0.0264 0.1844 474.7 389.6)">A6</text><text transform="matrix(0.2161 0 -0.0158 0.1844 498.7 389.6)">A7</text><text transform="matrix(0.2161 0 -0.0053 0.1844 522.7 389.6)">A8</text><text transform="matrix(0.2161 0 0.0053 0.1844 546.7 389.6)">A1</text><text transform="matrix(0.2161 0 0.0158 0.1844 570.7 389.6)">A2</text><text transform="matrix(0.2161 0 0.0264 0.1844 594.7 389.6)">A3</text><text transform="matrix(0.2161 0 0.0369 0.1844 618.7 389.6)">A4</text><text transform="matrix(0.2161 0 0.0475 0.1844 642.7 389.6)">A5</text><text transform="matrix(0.2161 0 0.058 0.1844 666.7 389.6)">A6</text><text transform="matrix(0.2161 0 0.0686 0.1844 690.7 389.6)">A7</text><text transform="matrix(0.2161 0 0.0791 0.1844 714.7 389.6)">A8</text><text transform="matrix(0.2161 0 0.0897 0.1844 738.7 389.6)">A1</text><text transform="matrix(0.2161 0 0.1002 0.1844 762.7 389.6)">A2</text><text transform="matrix(0.2161 0 0.1108 0.1844 786.7 389.6)">A3</text><text transform="matrix(0.2161 0 0.1213 0.1844 810.7 389.6)">A4</text><text transform="matrix(0.2161 0 0.1318 0.1844 834.7 389.6)">A5</text><text transform="matrix(0.2078 0 -0.1317 0.1705 223.2 373.5)">H3</text><text transform="matrix(0.2078 0 -0.1219 0.1705 246.3 373.5)">H4</text><text transform="matrix(0.2078 0 -0.1122 0.1705 269.3 373.5)">H5</text><text transform="matrix(0.2078 0 -0.1024 0.1705 292.4 373.5)">H6</text><text transform="matrix(0.2078 0 -0.0927 0.1705 315.5 373.5)">H7</text><text transform="matrix(0.2078 0 -0.0829 0.1705 338.6 373.5)">H8</text><text transform="matrix(0.2078 0 -0.0731 0.1705 361.6 373.5)">H1</text><text transform="matrix(0.2078 0 -0.0634 0.1705 384.7 373.5)">H2</text><text transform="matrix(0.2078 0 -0.0536 0.1705 407.8 373.5)">H3</text><text transform="matrix(0.2078 0 -0.0439 0.1705 430.9 373.5)">H4</text><text transform="matrix(0.2078 0 -0.0341 0.1705 453.9 373.5)">H5</text><text transform="matrix(0.2078 0 -0.0244 0.1705 477 373.5)">H6</text><text transform="matrix(0.2078 0 -0.0146 0.1705 500.1 373.5)">H7</text><text transform="matrix(0.2078 0 -0.0049 0.1705 523.2 373.5)">H8</text><text transform="matrix(0.2078 0 0.0049 0.1705 546.2 373.5)">H1</text><text transform="matrix(0.2078 0 0.0146 0.1705 569.3 373.5)">H2</text><text transform="matrix(0.2078 0 0.0244 0.1705 592.4 373.5)">H3</text><text transform="matrix(0.2078 0 0.0341 0.1705 615.5 373.5)">H4</text><text transform="matrix(0.2078 0 0.0439 0.1705 638.5 373.5)">H5</text><text transform="matrix(0.2078 0 0.0536 0.1705 661.6 373.5)">H6</text><text transform="matrix(0.2078 0 0.0634 0.1705 684.7 373.5)">H7</text><text transform="matrix(0.2078 0 0.0731 0.1705 707.8 373.5)">H8</text><text transform="matrix(0.2078 0 0.0829 0.1705 730.8 373.5)">H1</text><text transform="matrix(0.2078 0 0.0927 0.1705 753.9 373.5)">H2</text><text transform="matrix(0.2078 0 0.1024 0.1705 777 373.5)">H3</text><text transform="matrix(0.2078 0 0.1122 0.1705 800.1 373.5)">H4</text><text transform="matrix(0.2078 0 0.1219 0.1705 823.1 373.5)">H5</text><text transform="matrix(0.2078 0 0.1317 0.1705 846.2 373.5)">H6</text><text transform="matrix(0.2001 0 -0.1221 0.1581 234.7 358.6)">G3</text><text transform="matrix(0.2001 0 -0.1131 0.1581 256.9 358.6)">G4</text><text transform="matrix(0.2001 0 -0.104 0.1581 279.1 358.6)">G5</text><text transform="matrix(0.2001 0 -0.095 0.1581 301.4 358.6)">G6</text><text transform="matrix(0.2001 0 -0.0859 0.1581 323.6 358.6)">G7</text><text transform="matrix(0.2001 0 -0.0769 0.1581 345.8 358.6)">G8</text><text transform="matrix(0.2001 0 -0.0678 0.1581 368 358.6)">G1</text><text transform="matrix(0.2001 0 -0.0588 0.1581 390.3 358.6)">G2</text><text transform="matrix(0.2001 0 -0.0497 0.1581 412.5 358.6)">G3</text><text transform="matrix(0.2001 0 -0.0407 0.1581 434.7 358.6)">G4</text><text transform="matrix(0.2001 0 -0.0317 0.1581 456.9 358.6)">G5</text><text transform="matrix(0.2001 0 -0.0226 0.1581 479.1 358.6)">G6</text><text transform="matrix(0.2001 0 -0.0136 0.1581 501.4 358.6)">G7</text><text transform="matrix(0.2001 0 -0.0045 0.1581 523.6 358.6)">G8</text><text transform="matrix(0.2001 0 0.0045 0.1581 545.8 358.6)">G1</text><text transform="matrix(0.2001 0 0.0136 0.1581 568 358.6)">G2</text><text transform="matrix(0.2001 0 0.0226 0.1581 590.3 358.6)">G3</text><text transform="matrix(0.2001 0 0.0317 0.1581 612.5 358.6)">G4</text><text transform="matrix(0.2001 0 0.0407 0.1581 634.7 358.6)">G5</text><text transform="matrix(0.2001 0 0.0497 0.1581 656.9 358.6)">G6</text><text transform="matrix(0.2001 0 0.0588 0.1581 679.1 358.6)">G7</text><text transform="matrix(0.2001 0 0.0678 0.1581 701.4 358.6)">G8</text><text transform="matrix(0.2001 0 0.0769 0.1581 723.6 358.6)">G1</text><text transform="matrix(0.2001 0 0.0859 0.1581 745.8 358.6)">G2</text><text transform="matrix(0.2001 0 0.095 0.1581 768 358.6)">G3</text><text transform="matrix(0.2001 0 0.104 0.1581 790.3 358.6)">G4</text><text transform="matrix(0.2001 0 0.1131 0.1581 812.5 358.6)">G5</text><text transform="matrix(0.2001 0 0.1221 0.1581 834.7 358.6)">G6</text><text transform="matrix(0.1929 0 -0.122 0.147 224 344.7)">F2</text><text transform="matrix(0.1929 0 -0.1135 0.147 245.4 344.7)">F3</text><text transform="matrix(0.1929 0 -0.1051 0.147 266.8 344.7)">F4</text><text transform="matrix(0.1929 0 -0.0967 0.147 288.3 344.7)">F5</text><text transform="matrix(0.1929 0 -0.0883 0.147 309.7 344.7)">F6</text><text transform="matrix(0.1929 0 -0.0799 0.147 331.1 344.7)">F7</text><text transform="matrix(0.1929 0 -0.0715 0.147 352.6 344.7)">F8</text><text transform="matrix(0.1929 0 -0.0631 0.147 374 344.7)">F1</text><text transform="matrix(0.1929 0 -0.0547 0.147 395.4 344.7)">F2</text><text transform="matrix(0.1929 0 -0.0463 0.147 416.8 344.7)">F3</text><text transform="matrix(0.1929 0 -0.0378 0.147 438.3 344.7)">F4</text><text transform="matrix(0.1929 0 -0.0294 0.147 459.7 344.7)">F5</text><text transform="matrix(0.1929 0 -0.021 0.147 481.1 344.7)">F6</text><text transform="matrix(0.1929 0 -0.0126 0.147 502.6 344.7)">F7</text><text transform="matrix(0.1929 0 -0.0042 0.147 524 344.7)">F8</text><text transform="matrix(0.1929 0 0.0042 0.147 545.4 344.7)">F1</text><text transform="matrix(0.1929 0 0.0126 0.147 566.8 344.7)">F2</text><text transform="matrix(0.1929 0 0.021 0.147 588.3 344.7)">F3</text><text transform="matrix(0.1929 0 0.0294 0.147 609.7 344.7)">F4</text><text transform="matrix(0.1929 0 0.0378 0.147 631.1 344.7)">F5</text><text transform="matrix(0.1929 0 0.0463 0.147 652.6 344.7)">F6</text><text transform="matrix(0.1929 0 0.0547 0.147 674 344.7)">F7</text><text transform="matrix(0.1929 0 0.0631 0.147 695.4 344.7)">F8</text><text transform="matrix(0.1929 0 0.0715 0.147 716.8 344.7)">F1</text><text transform="matrix(0.1929 0 0.0799 0.147 738.3 344.7)">F2</text><text transform="matrix(0.1929 0 0.0883 0.147 759.7 344.7)">F3</text><text transform="matrix(0.1929 0 0.0967 0.147 781.1 344.7)">F4</text><text transform="matrix(0.1929 0 0.1051 0.147 802.6 344.7)">F5</text><text transform="matrix(0.1929 0 0.1135 0.147 824 344.7)">F6</text><text transform="matrix(0.1929 0 0.122 0.147 845.4 344.7)">F7</text><text transform="matrix(0.1863 0 -0.1137 0.1371 234.7 331.8)">E2</text><text transform="matrix(0.1863 0 -0.1059 0.1371 255.4 331.8)">E3</text><text transform="matrix(0.1863 0 -0.098 0.1371 276.1 331.8)">E4</text><text transform="matrix(0.1863 0 -0.0902 0.1371 296.8 331.8)">E5</text><text transform="matrix(0.1863 0 -0.0823 0.1371 317.4 331.8)">E6</text><text transform="matrix(0.1863 0 -0.0745 0.1371 338.1 331.8)">E7</text><text transform="matrix(0.1863 0 -0.0666 0.1371 358.8 331.8)">E8</text><text transform="matrix(0.1863 0 -0.0588 0.1371 379.5 331.8)">E1</text><text transform="matrix(0.1863 0 -0.051 0.1371 400.2 331.8)">E2</text><text transform="matrix(0.1863 0 -0.0431 0.1371 420.9 331.8)">E3</text><text transform="matrix(0.1863 0 -0.0353 0.1371 441.6 331.8)">E4</text><text transform="matrix(0.1863 0 -0.0274 0.1371 462.3 331.8)">E5</text><text transform="matrix(0.1863 0 -0.0196 0.1371 483 331.8)">E6</text><text transform="matrix(0.1863 0 -0.0118 0.1371 503.7 331.8)">E7</text><text transform="matrix(0.1863 0 -0.0039 0.1371 524.4 331.8)">E8</text><text transform="matrix(0.1863 0 0.0039 0.1371 545 331.8)">E1</text><text transform="matrix(0.1863 0 0.0118 0.1371 565.7 331.8)">E2</text><text transform="matrix(0.1863 0 0.0196 0.1371 586.4 331.8)">E3</text><text transform="matrix(0.1863 0 0.0274 0.1371 607.1 331.8)">E4</text><text transform="matrix(0.1863 0 0.0353 0.1371 627.8 331.8)">E5</text><text transform="matrix(0.1863 0 0.0431 0.1371 648.5 331.8)">E6</text><text transform="matrix(0.1863 0 0.051 0.1371 669.2 331.8)">E7</text><text transform="matrix(0.1863 0 0.0588 0.1371 689.9 331.8)">E8</text><text transform="matrix(0.1863 0 0.0666 0.1371 710.6 331.8)">E1</text><text transform="matrix(0.1863 0 0.0745 0.1371 731.3 331.8)">E2</text><text transform="matrix(0.1863 0 0.0823 0.1371 752 331.8)">E3</text><text transform="matrix(0.1863 0 0.0902 0.1371 772.6 331.8)">E4</text><text transform="matrix(0.1863 0 0.098 0.1371 793.3 331.8)">E5</text><text transform="matrix(0.1863 0 0.1059 0.1371 814 331.8)">E6</text><text transform="matrix(0.1863 0 0.1137 0.1371 834.7 331.8)">E7</text><text transform="matrix(0.1801 0 -0.1136 0.1281 224.7 319.8)">D1</text><text transform="matrix(0.1801 0 -0.1062 0.1281 244.7 319.8)">D2</text><text transform="matrix(0.1801 0 -0.0989 0.1281 264.7 319.8)">D3</text><text transform="matrix(0.1801 0 -0.0916 0.1281 284.7 319.8)">D4</text><text transform="matrix(0.1801 0 -0.0843 0.1281 304.7 319.8)">D5</text><text transform="matrix(0.1801 0 -0.0769 0.1281 324.7 319.8)">D6</text><text transform="matrix(0.1801 0 -0.0696 0.1281 344.7 319.8)">D7</text><text transform="matrix(0.1801 0 -0.0623 0.1281 364.7 319.8)">D8</text><text transform="matrix(0.1801 0 -0.055 0.1281 384.7 319.8)">D1</text><text transform="matrix(0.1801 0 -0.0476 0.1281 404.7 319.8)">D2</text><text transform="matrix(0.1801 0 -0.0403 0.1281 424.7 319.8)">D3</text><text transform="matrix(0.1801 0 -0.033 0.1281 444.7 319.8)">D4</text><text transform="matrix(0.1801 0 -0.0256 0.1281 464.7 319.8)">D5</text><text transform="matrix(0.1801 0 -0.0183 0.1281 484.7 319.8)">D6</text><text transform="matrix(0.1801 0 -0.011 0.1281 504.7 319.8)">D7</text><text transform="matrix(0.1801 0 -0.0037 0.1281 524.7 319.8)">D8</text><text transform="matrix(0.1801 0 0.0037 0.1281 544.7 319.8)">D1</text><text transform="matrix(0.1801 0 0.011 0.1281 564.7 319.8)">D2</text><text transform="matrix(0.1801 0 0.0183 0.1281 584.7 319.8)">D3</text><text transform="matrix(0.1801 0 0.0256 0.1281 604.7 319.8)">D4</text><text transform="matrix(0.1801 0 0.033 0.1281 624.7 319.8)">D5</text><text transform="matrix(0.1801 0 0.0403 0.1281 644.7 319.8)">D6</text><text transform="matrix(0.1801 0 0.0476 0.1281 664.7 319.8)">D7</text><text transform="matrix(0.1801 0 0.055 0.1281 684.7 319.8)">D8</text><text transform="matrix(0.1801 0 0.0623 0.1281 704.7 319.8)">D1</text><text transform="matrix(0.1801 0 0.0696 0.1281 724.7 319.8)">D2</text><text transform="matrix(0.1801 0 0.0769 0.1281 744.7 319.8)">D3</text><text transform="matrix(0.1801 0 0.0843 0.1281 764.7 319.8)">D4</text><text transform="matrix(0.1801 0 0.0916 0.1281 784.7 319.8)">D5</text><text transform="matrix(0.1801 0 0.0989 0.1281 804.7 319.8)">D6</text><text transform="matrix(0.1801 0 0.1062 0.1281 824.7 319.8)">D7</text><text transform="matrix(0.1801 0 0.1136 0.1281 844.7 319.8)">D8</text><text transform="matrix(0.1743 0 -0.1064 0.12 234.7 308.5)">C1</text><text transform="matrix(0.1743 0 -0.0995 0.12 254 308.5)">C2</text><text transform="matrix(0.1743 0 -0.0926 0.12 273.4 308.5)">C3</text><text transform="matrix(0.1743 0 -0.0858 0.12 292.7 308.5)">C4</text><text transform="matrix(0.1743 0 -0.0789 0.12 312.1 308.5)">C5</text><text transform="matrix(0.1743 0 -0.0721 0.12 331.4 308.5)">C6</text><text transform="matrix(0.1743 0 -0.0652 0.12 350.8 308.5)">C7</text><text transform="matrix(0.1743 0 -0.0583 0.12 370.2 308.5)">C8</text><text transform="matrix(0.1743 0 -0.0515 0.12 389.5 308.5)">C1</text><text transform="matrix(0.1743 0 -0.0446 0.12 408.9 308.5)">C2</text><text transform="matrix(0.1743 0 -0.0377 0.12 428.2 308.5)">C3</text><text transform="matrix(0.1743 0 -0.0309 0.12 447.6 308.5)">C4</text><text transform="matrix(0.1743 0 -0.024 0.12 466.9 308.5)">C5</text><text transform="matrix(0.1743 0 -0.0172 0.12 486.3 308.5)">C6</text><text transform="matrix(0.1743 0 -0.0103 0.12 505.7 308.5)">C7</text><text transform="matrix(0.1743 0 -0.0034 0.12 525 308.5)">C8</text><text transform="matrix(0.1743 0 0.0034 0.12 544.4 308.5)">C1</text><text transform="matrix(0.1743 0 0.0103 0.12 563.7 308.5)">C2</text><text transform="matrix(0.1743 0 0.0172 0.12 583.1 308.5)">C3</text><text transform="matrix(0.1743 0 0.024 0.12 602.5 308.5)">C4</text><text transform="matrix(0.1743 0 0.0309 0.12 621.8 308.5)">C5</text><text transform="matrix(0.1743 0 0.0377 0.12 641.2 308.5)">C6</text><text transform="matrix(0.1743 0 0.0446 0.12 660.5 308.5)">C7</text><text transform="matrix(0.1743 0 0.0515 0.12 679.9 308.5)">C8</text><text transform="matrix(0.1743 0 0.0583 0.12 699.2 308.5)">C1</text><text transform="matrix(0.1743 0 0.0652 0.12 718.6 308.5)">C2</text><text transform="matrix(0.1743 0 0.0721 0.12 738 308.5)">C3</text><text transform="matrix(0.1743 0 0.0789 0.12 757.3 308.5)">C4</text><text transform="matrix(0.1743 0 0.0858 0.12 776.7 308.5)">C5</text><text transform="matrix(0.1743 0 0.0926 0.12 796 308.5)">C6</text><text transform="matrix(0.1743 0 0.0995 0.12 815.4 308.5)">C7</text><text transform="matrix(0.1743 0 0.1064 0.12 834.7 308.5)">C8</text><text transform="matrix(0.1688 0 -0.1063 0.1126 225.3 297.9)">B8</text><text transform="matrix(0.1688 0 -0.0998 0.1126 244 297.9)">B1</text><text transform="matrix(0.1688 0 -0.0934 0.1126 262.8 297.9)">B2</text><text transform="matrix(0.1688 0 -0.087 0.1126 281.5 297.9)">B3</text><text transform="matrix(0.1688 0 -0.0805 0.1126 300.3 297.9)">B4</text><text transform="matrix(0.1688 0 -0.0741 0.1126 319 297.9)">B5</text><text transform="matrix(0.1688 0 -0.0676 0.1126 337.8 297.9)">B6</text><text transform="matrix(0.1688 0 -0.0612 0.1126 356.5 297.9)">B7</text><text transform="matrix(0.1688 0 -0.0547 0.1126 375.3 297.9)">B8</text><text transform="matrix(0.1688 0 -0.0483 0.1126 394 297.9)">B1</text><text transform="matrix(0.1688 0 -0.0419 0.1126 412.8 297.9)">B2</text><text transform="matrix(0.1688 0 -0.0354 0.1126 431.6 297.9)">B3</text><text transform="matrix(0.1688 0 -0.029 0.1126 450.3 297.9)">B4</text><text transform="matrix(0.1688 0 -0.0225 0.1126 469.1 297.9)">B5</text><text transform="matrix(0.1688 0 -0.0161 0.1126 487.8 297.9)">B6</text><text transform="matrix(0.1688 0 -0.0097 0.1126 506.6 297.9)">B7</text><text transform="matrix(0.1688 0 -0.0032 0.1126 525.3 297.9)">B8</text><text transform="matrix(0.1688 0 0.0032 0.1126 544.1 297.9)">B1</text><text transform="matrix(0.1688 0 0.0097 0.1126 562.8 297.9)">B2</text><text transform="matrix(0.1688 0 0.0161 0.1126 581.6 297.9)">B3</text><text transform="matrix(0.1688 0 0.0225 0.1126 600.3 297.9)">B4</text><text transform="matrix(0.1688 0 0.029 0.1126 619.1 297.9)">B5</text><text transform="matrix(0.1688 0 0.0354 0.1126 637.8 297.9)">B6</text><text transform="matrix(0.1688 0 0.0419 0.1126 656.6 297.9)">B7</text><text transform="matrix(0.1688 0 0.0483 0.1126 675.4 297.9)">B8</text><text transform="matrix(0.1688 0 0.0547 0.1126 694.1 297.9)">B1</text><text transform="matrix(0.1688 0 0.0612 0.1126 712.9 297.9)">B2</text><text transform="matrix(0.1688 0 0.0676 0.1126 731.6 297.9)">B3</text><text transform="matrix(0.1688 0 0.0741 0.1126 750.4 297.9)">B4</text><text transform="matrix(0.1688 0 0.0805 0.1126 769.1 297.9)">B5</text><text transform="matrix(0.1688 0 0.087 0.1126 787.9 297.9)">B6</text><text transform="matrix(0.1688 0 0.0934 0.1126 806.6 297.9)">B7</text><text transform="matrix(0.1688 0 0.0998 0.1126 825.4 297.9)">B8</text><text transform="matrix(0.1688 0 0.1063 0.1126 844.1 297.9)">B1</text><text transform="matrix(0.1637 0 -0.106 0.1059 216.4 288)">A7</text><text transform="matrix(0.1637 0 -0.0999 0.1059 234.6 288)">A8</text><text transform="matrix(0.1637 0 -0.0939 0.1059 252.8 288)">A1</text><text transform="matrix(0.1637 0 -0.0878 0.1059 271 288)">A2</text><text transform="matrix(0.1637 0 -0.0818 0.1059 289.2 288)">A3</text><text transform="matrix(0.1637 0 -0.0757 0.1059 307.4 288)">A4</text><text transform="matrix(0.1637 0 -0.0697 0.1059 325.6 288)">A5</text><text transform="matrix(0.1637 0 -0.0636 0.1059 343.7 288)">A6</text><text transform="matrix(0.1637 0 -0.0575 0.1059 361.9 288)">A7</text><text transform="matrix(0.1637 0 -0.0515 0.1059 380.1 288)">A8</text><text transform="matrix(0.1637 0 -0.0454 0.1059 398.3 288)">A1</text><text transform="matrix(0.1637 0 -0.0394 0.1059 416.5 288)">A2</text><text transform="matrix(0.1637 0 -0.0333 0.1059 434.7 288)">A3</text><text transform="matrix(0.1637 0 -0.0273 0.1059 452.9 288)">A4</text><text transform="matrix(0.1637 0 -0.0212 0.1059 471 288)">A5</text><text transform="matrix(0.1637 0 -0.0151 0.1059 489.2 288)">A6</text><text transform="matrix(0.1637 0 -0.0091 0.1059 507.4 288)">A7</text><text transform="matrix(0.1637 0 -0.003 0.1059 525.6 288)">A8</text><text transform="matrix(0.1637 0 0.003 0.1059 543.8 288)">A1</text><text transform="matrix(0.1637 0 0.0091 0.1059 562 288)">A2</text><text transform="matrix(0.1637 0 0.0151 0.1059 580.2 288)">A3</text><text transform="matrix(0.1637 0 0.0212 0.1059 598.4 288)">A4</text><text transform="matrix(0.1637 0 0.0273 0.1059 616.5 288)">A5</text><text transform="matrix(0.1637 0 0.0333 0.1059 634.7 288)">A6</text><text transform="matrix(0.1637 0 0.0394 0.1059 652.9 288)">A7</text><text transform="matrix(0.1637 0 0.0454 0.1059 671.1 288)">A8</text><text transform="matrix(0.1637 0 0.0515 0.1059 689.3 288)">A1</text><text transform="matrix(0.1637 0 0.0575 0.1059 707.5 288)">A2</text><text transform="matrix(0.1637 0 0.0636 0.1059 725.7 288)">A3</text><text transform="matrix(0.1637 0 0.0697 0.1059 743.8 288)">A4</text><text transform="matrix(0.1637 0 0.0757 0.1059 762 288)">A5</text><text transform="matrix(0.1637 0 0.0818 0.1059 780.2 288)">A6</text><text transform="matrix(0.1637 0 0.0878 0.1059 798.4 288)">A7</text><text transform="matrix(0.1637 0 0.0939 0.1059 816.6 288)">A8</text><text transform="matrix(0.1637 0 0.0999 0.1059 834.8 288)">A1</text><text transform="matrix(0.1589 0 -0.0999 0.0998 225.8 278.7)">H7</text><text transform="matrix(0.1589 0 -0.0941 0.0998 243.4 278.7)">H8</text><text transform="matrix(0.1589 0 -0.0884 0.0998 261.1 278.7)">H1</text><text transform="matrix(0.1589 0 -0.0827 0.0998 278.8 278.7)">H2</text><text transform="matrix(0.1589 0 -0.077 0.0998 296.4 278.7)">H3</text><text transform="matrix(0.1589 0 -0.0713 0.0998 314.1 278.7)">H4</text><text transform="matrix(0.1589 0 -0.0656 0.0998 331.7 278.7)">H5</text><text transform="matrix(0.1589 0 -0.0599 0.0998 349.4 278.7)">H6</text><text transform="matrix(0.1589 0 -0.0542 0.0998 367 278.7)">H7</text><text transform="matrix(0.1589 0 -0.0485 0.0998 384.7 278.7)">H8</text><text transform="matrix(0.1589 0 -0.0428 0.0998 402.3 278.7)">H1</text><text transform="matrix(0.1589 0 -0.0371 0.0998 420 278.7)">H2</text><text transform="matrix(0.1589 0 -0.0314 0.0998 437.6 278.7)">H3</text><text transform="matrix(0.1589 0 -0.0257 0.0998 455.3 278.7)">H4</text><text transform="matrix(0.1589 0 -0.02 0.0998 472.9 278.7)">H5</text><text transform="matrix(0.1589 0 -0.0143 0.0998 490.6 278.7)">H6</text><text transform="matrix(0.1589 0 -0.0086 0.0998 508.2 278.7)">H7</text><text transform="matrix(0.1589 0 -0.0029 0.0998 525.9 278.7)">H8</text><text transform="matrix(0.1589 0 0.0029 0.0998 543.5 278.7)">H1</text><text transform="matrix(0.1589 0 0.0086 0.0998 561.2 278.7)">H2</text><text transform="matrix(0.1589 0 0.0143 0.0998 578.8 278.7)">H3</text><text transform="matrix(0.1589 0 0.02 0.0998 596.5 278.7)">H4</text><text transform="matrix(0.1589 0 0.0257 0.0998 614.1 278.7)">H5</text><text transform="matrix(0.1589 0 0.0314 0.0998 631.8 278.7)">H6</text><text transform="matrix(0.1589 0 0.0371 0.0998 649.4 278.7)">H7</text><text transform="matrix(0.1589 0 0.0428 0.0998 667.1 278.7)">H8</text><text transform="matrix(0.1589 0 0.0485 0.0998 684.7 278.7)">H1</text><text transform="matrix(0.1589 0 0.0542 0.0998 702.4 278.7)">H2</text><text transform="matrix(0.1589 0 0.0599 0.0998 720 278.7)">H3</text><text transform="matrix(0.1589 0 0.0656 0.0998 737.7 278.7)">H4</text><text transform="matrix(0.1589 0 0.0713 0.0998 755.3 278.7)">H5</text><text transform="matrix(0.1589 0 0.077 0.0998 773 278.7)">H6</text><text transform="matrix(0.1589 0 0.0827 0.0998 790.6 278.7)">H7</text><text transform="matrix(0.1589 0 0.0884 0.0998 808.3 278.7)">H8</text><text transform="matrix(0.1589 0 0.0941 0.0998 826 278.7)">H1</text><text transform="matrix(0.1589 0 0.0999 0.0998 843.6 278.7)">H2</text><text transform="matrix(0.1544 0 -0.0996 0.0941 217.5 269.9)">G6</text><text transform="matrix(0.1544 0 -0.0942 0.0941 234.6 269.9)">G7</text><text transform="matrix(0.1544 0 -0.0889 0.0941 251.8 269.9)">G8</text><text transform="matrix(0.1544 0 -0.0835 0.0941 268.9 269.9)">G1</text><text transform="matrix(0.1544 0 -0.0781 0.0941 286.1 269.9)">G2</text><text transform="matrix(0.1544 0 -0.0727 0.0941 303.2 269.9)">G3</text><text transform="matrix(0.1544 0 -0.0673 0.0941 320.4 269.9)">G4</text><text transform="matrix(0.1544 0 -0.0619 0.0941 337.5 269.9)">G5</text><text transform="matrix(0.1544 0 -0.0565 0.0941 354.6 269.9)">G6</text><text transform="matrix(0.1544 0 -0.0512 0.0941 371.8 269.9)">G7</text><text transform="matrix(0.1544 0 -0.0458 0.0941 388.9 269.9)">G8</text><text transform="matrix(0.1544 0 -0.0404 0.0941 406.1 269.9)">G1</text><text transform="matrix(0.1544 0 -0.035 0.0941 423.2 269.9)">G2</text><text transform="matrix(0.1544 0 -0.0296 0.0941 440.4 269.9)">G3</text><text transform="matrix(0.1544 0 -0.0242 0.0941 457.5 269.9)">G4</text><text transform="matrix(0.1544 0 -0.0188 0.0941 474.7 269.9)">G5</text><text transform="matrix(0.1544 0 -0.0135 0.0941 491.8 269.9)">G6</text><text transform="matrix(0.1544 0 -0.0081 0.0941 509 269.9)">G7</text><text transform="matrix(0.1544 0 -0.0027 0.0941 526.1 269.9)">G8</text><text transform="matrix(0.1544 0 0.0027 0.0941 543.3 269.9)">G1</text><text transform="matrix(0.1544 0 0.0081 0.0941 560.4 269.9)">G2</text><text transform="matrix(0.1544 0 0.0135 0.0941 577.6 269.9)">G3</text><text transform="matrix(0.1544 0 0.0188 0.0941 594.7 269.9)">G4</text><text transform="matrix(0.1544 0 0.0242 0.0941 611.9 269.9)">G5</text><text transform="matrix(0.1544 0 0.0296 0.0941 629 269.9)">G6</text><text transform="matrix(0.1544 0 0.035 0.0941 646.2 269.9)">G7</text><text transform="matrix(0.1544 0 0.0404 0.0941 663.3 269.9)">G8</text><text transform="matrix(0.1544 0 0.0458 0.0941 680.5 269.9)">G1</text><text transform="matrix(0.1544 0 0.0512 0.0941 697.6 269.9)">G2</text><text transform="matrix(0.1544 0 0.0565 0.0941 714.8 269.9)">G3</text><text transform="matrix(0.1544 0 0.0619 0.0941 731.9 269.9)">G4</text><text transform="matrix(0.1544 0 0.0673 0.0941 749 269.9)">G5</text><text transform="matrix(0.1544 0 0.0727 0.0941 766.2 269.9)">G6</text><text transform="matrix(0.1544 0 0.0781 0.0941 783.3 269.9)">G7</text><text transform="matrix(0.1544 0 0.0835 0.0941 800.5 269.9)">G8</text><text transform="matrix(0.1544 0 0.0889 0.0941 817.6 269.9)">G1</text><text transform="matrix(0.1544 0 0.0942 0.0941 834.8 269.9)">G2</text><text transform="matrix(0.1501 0 -0.0942 0.089 226.3 261.5)">F6</text><text transform="matrix(0.1501 0 -0.0891 0.089 242.9 261.5)">F7</text><text transform="matrix(0.1501 0 -0.084 0.089 259.6 261.5)">F8</text><text transform="matrix(0.1501 0 -0.0789 0.089 276.3 261.5)">F1</text><text transform="matrix(0.1501 0 -0.0738 0.089 293 261.5)">F2</text><text transform="matrix(0.1501 0 -0.0687 0.089 309.6 261.5)">F3</text><text transform="matrix(0.1501 0 -0.0636 0.089 326.3 261.5)">F4</text><text transform="matrix(0.1501 0 -0.0585 0.089 343 261.5)">F5</text><text transform="matrix(0.1501 0 -0.0534 0.089 359.6 261.5)">F6</text><text transform="matrix(0.1501 0 -0.0484 0.089 376.3 261.5)">F7</text><text transform="matrix(0.1501 0 -0.0433 0.089 393 261.5)">F8</text><text transform="matrix(0.1501 0 -0.0382 0.089 409.7 261.5)">F1</text><text transform="matrix(0.1501 0 -0.0331 0.089 426.3 261.5)">F2</text><text transform="matrix(0.1501 0 -0.028 0.089 443 261.5)">F3</text><text transform="matrix(0.1501 0 -0.0229 0.089 459.7 261.5)">F4</text><text transform="matrix(0.1501 0 -0.0178 0.089 476.3 261.5)">F5</text><text transform="matrix(0.1501 0 -0.0127 0.089 493 261.5)">F6</text><text transform="matrix(0.1501 0 -0.0076 0.089 509.7 261.5)">F7</text><text transform="matrix(0.1501 0 -0.0025 0.089 526.4 261.5)">F8</text><text transform="matrix(0.1501 0 0.0025 0.089 543 261.5)">F1</text><text transform="matrix(0.1501 0 0.0076 0.089 559.7 261.5)">F2</text><text transform="matrix(0.1501 0 0.0127 0.089 576.4 261.5)">F3</text><text transform="matrix(0.1501 0 0.0178 0.089 593.1 261.5)">F4</text><text transform="matrix(0.1501 0 0.0229 0.089 609.7 261.5)">F5</text><text transform="matrix(0.1501 0 0.028 0.089 626.4 261.5)">F6</text><text transform="matrix(0.1501 0 0.0331 0.089 643.1 261.5)">F7</text><text transform="matrix(0.1501 0 0.0382 0.089 659.7 261.5)">F8</text><text transform="matrix(0.1501 0 0.0433 0.089 676.4 261.5)">F1</text><text transform="matrix(0.1501 0 0.0484 0.089 693.1 261.5)">F2</text><text transform="matrix(0.1501 0 0.0534 0.089 709.8 261.5)">F3</text><text transform="matrix(0.1501 0 0.0585 0.089 726.4 261.5)">F4</text><text transform="matrix(0.1501 0 0.0636 0.089 743.1 261.5)">F5</text><text transform="matrix(0.1501 0 0.0687 0.089 759.8 261.5)">F6</text><text transform="matrix(0.1501 0 0.0738 0.089 776.4 261.5)">F7</text><text transform="matrix(0.1501 0 0.0789 0.089 793.1 261.5)">F8</text><text transform="matrix(0.1501 0 0.084 0.089 809.8 261.5)">F1</text><text transform="matrix(0.1501 0 0.0891 0.089 826.5 261.5)">F2</text><text transform="matrix(0.1501 0 0.0942 0.089 843.1 261.5)">F3</text><text transform="matrix(0.146 0 -0.094 0.0842 218.4 253.7)">E5</text><text transform="matrix(0.146 0 -0.0891 0.0842 234.6 253.7)">E6</text><text transform="matrix(0.146 0 -0.0843 0.0842 250.8 253.7)">E7</text><text transform="matrix(0.146 0 -0.0795 0.0842 267 253.7)">E8</text><text transform="matrix(0.146 0 -0.0747 0.0842 283.3 253.7)">E1</text><text transform="matrix(0.146 0 -0.0699 0.0842 299.5 253.7)">E2</text><text transform="matrix(0.146 0 -0.0651 0.0842 315.7 253.7)">E3</text><text transform="matrix(0.146 0 -0.0602 0.0842 331.9 253.7)">E4</text><text transform="matrix(0.146 0 -0.0554 0.0842 348.1 253.7)">E5</text><text transform="matrix(0.146 0 -0.0506 0.0842 364.4 253.7)">E6</text><text transform="matrix(0.146 0 -0.0458 0.0842 380.6 253.7)">E7</text><text transform="matrix(0.146 0 -0.041 0.0842 396.8 253.7)">E8</text><text transform="matrix(0.146 0 -0.0361 0.0842 413 253.7)">E1</text><text transform="matrix(0.146 0 -0.0313 0.0842 429.3 253.7)">E2</text><text transform="matrix(0.146 0 -0.0265 0.0842 445.5 253.7)">E3</text><text transform="matrix(0.146 0 -0.0217 0.0842 461.7 253.7)">E4</text><text transform="matrix(0.146 0 -0.0169 0.0842 477.9 253.7)">E5</text><text transform="matrix(0.146 0 -0.012 0.0842 494.1 253.7)">E6</text><text transform="matrix(0.146 0 -0.0072 0.0842 510.4 253.7)">E7</text><text transform="matrix(0.146 0 -0.0024 0.0842 526.6 253.7)">E8</text><text transform="matrix(0.146 0 0.0024 0.0842 542.8 253.7)">E1</text><text transform="matrix(0.146 0 0.0072 0.0842 559 253.7)">E2</text><text transform="matrix(0.146 0 0.012 0.0842 575.3 253.7)">E3</text><text transform="matrix(0.146 0 0.0169 0.0842 591.5 253.7)">E4</text><text transform="matrix(0.146 0 0.0217 0.0842 607.7 253.7)">E5</text><text transform="matrix(0.146 0 0.0265 0.0842 623.9 253.7)">E6</text><text transform="matrix(0.146 0 0.0313 0.0842 640.1 253.7)">E7</text><text transform="matrix(0.146 0 0.0361 0.0842 656.4 253.7)">E8</text><text transform="matrix(0.146 0 0.041 0.0842 672.6 253.7)">E1</text><text transform="matrix(0.146 0 0.0458 0.0842 688.8 253.7)">E2</text><text transform="matrix(0.146 0 0.0506 0.0842 705 253.7)">E3</text><text transform="matrix(0.146 0 0.0554 0.0842 721.3 253.7)">E4</text><text transform="matrix(0.146 0 0.0602 0.0842 737.5 253.7)">E5</text><text transform="matrix(0.146 0 0.0651 0.0842 753.7 253.7)">E6</text><text transform="matrix(0.146 0 0.0699 0.0842 769.9 253.7)">E7</text><text transform="matrix(0.146 0 0.0747 0.0842 786.1 253.7)">E8</text><text transform="matrix(0.146 0 0.0795 0.0842 802.4 253.7)">E1</text><text transform="matrix(0.146 0 0.0843 0.0842 818.6 253.7)">E2</text><text transform="matrix(0.146 0 0.0891 0.0842 834.8 253.7)">E3</text><text transform="matrix(0.1422 0 -0.0891 0.0799 226.7 246.2)">D5</text><text transform="matrix(0.1422 0 -0.0845 0.0799 242.5 246.2)">D6</text><text transform="matrix(0.1422 0 -0.08 0.0799 258.3 246.2)">D7</text><text transform="matrix(0.1422 0 -0.0754 0.0799 274.1 246.2)">D8</text><text transform="matrix(0.1422 0 -0.0708 0.0799 289.9 246.2)">D1</text><text transform="matrix(0.1422 0 -0.0662 0.0799 305.7 246.2)">D2</text><text transform="matrix(0.1422 0 -0.0617 0.0799 321.5 246.2)">D3</text><text transform="matrix(0.1422 0 -0.0571 0.0799 337.3 246.2)">D4</text><text transform="matrix(0.1422 0 -0.0525 0.0799 353.1 246.2)">D5</text><text transform="matrix(0.1422 0 -0.048 0.0799 368.8 246.2)">D6</text><text transform="matrix(0.1422 0 -0.0434 0.0799 384.6 246.2)">D7</text><text transform="matrix(0.1422 0 -0.0388 0.0799 400.4 246.2)">D8</text><text transform="matrix(0.1422 0 -0.0343 0.0799 416.2 246.2)">D1</text><text transform="matrix(0.1422 0 -0.0297 0.0799 432 246.2)">D2</text><text transform="matrix(0.1422 0 -0.0251 0.0799 447.8 246.2)">D3</text><text transform="matrix(0.1422 0 -0.0206 0.0799 463.6 246.2)">D4</text><text transform="matrix(0.1422 0 -0.016 0.0799 479.4 246.2)">D5</text><text transform="matrix(0.1422 0 -0.0114 0.0799 495.2 246.2)">D6</text><text transform="matrix(0.1422 0 -0.0069 0.0799 511 246.2)">D7</text><text transform="matrix(0.1422 0 -0.0023 0.0799 526.8 246.2)">D8</text><text transform="matrix(0.1422 0 0.0023 0.0799 542.6 246.2)">D1</text><text transform="matrix(0.1422 0 0.0069 0.0799 558.4 246.2)">D2</text><text transform="matrix(0.1422 0 0.0114 0.0799 574.2 246.2)">D3</text><text transform="matrix(0.1422 0 0.016 0.0799 590 246.2)">D4</text><text transform="matrix(0.1422 0 0.0206 0.0799 605.8 246.2)">D5</text><text transform="matrix(0.1422 0 0.0251 0.0799 621.6 246.2)">D6</text><text transform="matrix(0.1422 0 0.0297 0.0799 637.4 246.2)">D7</text><text transform="matrix(0.1422 0 0.0343 0.0799 653.2 246.2)">D8</text><text transform="matrix(0.1422 0 0.0388 0.0799 669 246.2)">D1</text><text transform="matrix(0.1422 0 0.0434 0.0799 684.8 246.2)">D2</text><text transform="matrix(0.1422 0 0.048 0.0799 700.6 246.2)">D3</text><text transform="matrix(0.1422 0 0.0525 0.0799 716.3 246.2)">D4</text><text transform="matrix(0.1422 0 0.0571 0.0799 732.1 246.2)">D5</text><text transform="matrix(0.1422 0 0.0617 0.0799 747.9 246.2)">D6</text><text transform="matrix(0.1422 0 0.0662 0.0799 763.7 246.2)">D7</text><text transform="matrix(0.1422 0 0.0708 0.0799 779.5 246.2)">D8</text><text transform="matrix(0.1422 0 0.0754 0.0799 795.3 246.2)">D1</text><text transform="matrix(0.1422 0 0.08 0.0799 811.1 246.2)">D2</text><text transform="matrix(0.1422 0 0.0845 0.0799 826.9 246.2)">D3</text><text transform="matrix(0.1422 0 0.0891 0.0799 842.7 246.2)">D4</text><text transform="matrix(0.1385 0 -0.0889 0.0758 219.2 239.1)">C4</text><text transform="matrix(0.1385 0 -0.0846 0.0758 234.6 239.1)">C5</text><text transform="matrix(0.1385 0 -0.0802 0.0758 250 239.1)">C6</text><text transform="matrix(0.1385 0 -0.0759 0.0758 265.4 239.1)">C7</text><text transform="matrix(0.1385 0 -0.0716 0.0758 280.8 239.1)">C8</text><text transform="matrix(0.1385 0 -0.0672 0.0758 296.1 239.1)">C1</text><text transform="matrix(0.1385 0 -0.0629 0.0758 311.5 239.1)">C2</text><text transform="matrix(0.1385 0 -0.0586 0.0758 326.9 239.1)">C3</text><text transform="matrix(0.1385 0 -0.0542 0.0758 342.3 239.1)">C4</text><text transform="matrix(0.1385 0 -0.0499 0.0758 357.7 239.1)">C5</text><text transform="matrix(0.1385 0 -0.0455 0.0758 373.1 239.1)">C6</text><text transform="matrix(0.1385 0 -0.0412 0.0758 388.5 239.1)">C7</text><text transform="matrix(0.1385 0 -0.0369 0.0758 403.9 239.1)">C8</text><text transform="matrix(0.1385 0 -0.0325 0.0758 419.3 239.1)">C1</text><text transform="matrix(0.1385 0 -0.0282 0.0758 434.7 239.1)">C2</text><text transform="matrix(0.1385 0 -0.0239 0.0758 450.1 239.1)">C3</text><text transform="matrix(0.1385 0 -0.0195 0.0758 465.4 239.1)">C4</text><text transform="matrix(0.1385 0 -0.0152 0.0758 480.8 239.1)">C5</text><text transform="matrix(0.1385 0 -0.0108 0.0758 496.2 239.1)">C6</text><text transform="matrix(0.1385 0 -0.0065 0.0758 511.6 239.1)">C7</text><text transform="matrix(0.1385 0 -0.0022 0.0758 527 239.1)">C8</text><text transform="matrix(0.1385 0 0.0022 0.0758 542.4 239.1)">C1</text><text transform="matrix(0.1385 0 0.0065 0.0758 557.8 239.1)">C2</text><text transform="matrix(0.1385 0 0.0108 0.0758 573.2 239.1)">C3</text><text transform="matrix(0.1385 0 0.0152 0.0758 588.6 239.1)">C4</text><text transform="matrix(0.1385 0 0.0195 0.0758 604 239.1)">C5</text><text transform="matrix(0.1385 0 0.0239 0.0758 619.3 239.1)">C6</text><text transform="matrix(0.1385 0 0.0282 0.0758 634.7 239.1)">C7</text><text transform="matrix(0.1385 0 0.0325 0.0758 650.1 239.1)">C8</text><text transform="matrix(0.1385 0 0.0369 0.0758 665.5 239.1)">C1</text><text transform="matrix(0.1385 0 0.0412 0.0758 680.9 239.1)">C2</text><text transform="matrix(0.1385 0 0.0455 0.0758 696.3 239.1)">C3</text><text transform="matrix(0.1385 0 0.0499 0.0758 711.7 239.1)">C4</text><text transform="matrix(0.1385 0 0.0542 0.0758 727.1 239.1)">C5</text><text transform="matrix(0.1385 0 0.0586 0.0758 742.5 239.1)">C6</text><text transform="matrix(0.1385 0 0.0629 0.0758 757.9 239.1)">C7</text><text transform="matrix(0.1385 0 0.0672 0.0758 773.3 239.1)">C8</text><text transform="matrix(0.1385 0 0.0716 0.0758 788.6 239.1)">C1</text><text transform="matrix(0.1385 0 0.0759 0.0758 804 239.1)">C2</text><text transform="matrix(0.1385 0 0.0802 0.0758 819.4 239.1)">C3</text><text transform="matrix(0.1385 0 0.0846 0.0758 834.8 239.1)">C4</text><text transform="matrix(0.1351 0 -0.0845 0.0721 227.1 232.4)">B4</text><text transform="matrix(0.1351 0 -0.0804 0.0721 242.1 232.4)">B5</text><text transform="matrix(0.1351 0 -0.0763 0.0721 257.1 232.4)">B6</text><text transform="matrix(0.1351 0 -0.0722 0.0721 272.1 232.4)">B7</text><text transform="matrix(0.1351 0 -0.068 0.0721 287.1 232.4)">B8</text><text transform="matrix(0.1351 0 -0.0639 0.0721 302.1 232.4)">B1</text><text transform="matrix(0.1351 0 -0.0598 0.0721 317.1 232.4)">B2</text><text transform="matrix(0.1351 0 -0.0557 0.0721 332.1 232.4)">B3</text><text transform="matrix(0.1351 0 -0.0515 0.0721 347.1 232.4)">B4</text><text transform="matrix(0.1351 0 -0.0474 0.0721 362.1 232.4)">B5</text><text transform="matrix(0.1351 0 -0.0433 0.0721 377.1 232.4)">B6</text><text transform="matrix(0.1351 0 -0.0392 0.0721 392.1 232.4)">B7</text><text transform="matrix(0.1351 0 -0.0351 0.0721 407.1 232.4)">B8</text><text transform="matrix(0.1351 0 -0.0309 0.0721 422.2 232.4)">B1</text><text transform="matrix(0.1351 0 -0.0268 0.0721 437.2 232.4)">B2</text><text transform="matrix(0.1351 0 -0.0227 0.0721 452.2 232.4)">B3</text><text transform="matrix(0.1351 0 -0.0186 0.0721 467.2 232.4)">B4</text><text transform="matrix(0.1351 0 -0.0144 0.0721 482.2 232.4)">B5</text><text transform="matrix(0.1351 0 -0.0103 0.0721 497.2 232.4)">B6</text><text transform="matrix(0.1351 0 -0.0062 0.0721 512.2 232.4)">B7</text><text transform="matrix(0.1351 0 -0.0021 0.0721 527.2 232.4)">B8</text><text transform="matrix(0.1351 0 0.0021 0.0721 542.2 232.4)">B1</text><text transform="matrix(0.1351 0 0.0062 0.0721 557.2 232.4)">B2</text><text transform="matrix(0.1351 0 0.0103 0.0721 572.2 232.4)">B3</text><text transform="matrix(0.1351 0 0.0144 0.0721 587.2 232.4)">B4</text><text transform="matrix(0.1351 0 0.0186 0.0721 602.2 232.4)">B5</text><text transform="matrix(0.1351 0 0.0227 0.0721 617.2 232.4)">B6</text><text transform="matrix(0.1351 0 0.0268 0.0721 632.2 232.4)">B7</text><text transform="matrix(0.1351 0 0.0309 0.0721 647.2 232.4)">B8</text><text transform="matrix(0.1351 0 0.0351 0.0721 662.3 232.4)">B1</text><text transform="matrix(0.1351 0 0.0392 0.0721 677.3 232.4)">B2</text><text transform="matrix(0.1351 0 0.0433 0.0721 692.3 232.4)">B3</text><text transform="matrix(0.1351 0 0.0474 0.0721 707.3 232.4)">B4</text><text transform="matrix(0.1351 0 0.0515 0.0721 722.3 232.4)">B5</text><text transform="matrix(0.1351 0 0.0557 0.0721 737.3 232.4)">B6</text><text transform="matrix(0.1351 0 0.0598 0.0721 752.3 232.4)">B7</text><text transform="matrix(0.1351 0 0.0639 0.0721 767.3 232.4)">B8</text><text transform="matrix(0.1351 0 0.068 0.0721 782.3 232.4)">B1</text><text transform="matrix(0.1351 0 0.0722 0.0721 797.3 232.4)">B2</text><text transform="matrix(0.1351 0 0.0763 0.0721 812.3 232.4)">B3</text><text transform="matrix(0.1351 0 0.0804 0.0721 827.3 232.4)">B4</text><text transform="matrix(0.1351 0 0.0845 0.0721 842.3 232.4)">B5</text><text transform="matrix(0.1318 0 -0.0844 0.0686 219.9 226)">A3</text><text transform="matrix(0.1318 0 -0.0805 0.0686 234.6 226)">A4</text><text transform="matrix(0.1318 0 -0.0765 0.0686 249.2 226)">A5</text><text transform="matrix(0.1318 0 -0.0726 0.0686 263.9 226)">A6</text><text transform="matrix(0.1318 0 -0.0687 0.0686 278.5 226)">A7</text><text transform="matrix(0.1318 0 -0.0648 0.0686 293.1 226)">A8</text><text transform="matrix(0.1318 0 -0.0608 0.0686 307.8 226)">A1</text><text transform="matrix(0.1318 0 -0.0569 0.0686 322.4 226)">A2</text><text transform="matrix(0.1318 0 -0.053 0.0686 337.1 226)">A3</text><text transform="matrix(0.1318 0 -0.0491 0.0686 351.7 226)">A4</text><text transform="matrix(0.1318 0 -0.0451 0.0686 366.3 226)">A5</text><text transform="matrix(0.1318 0 -0.0412 0.0686 381 226)">A6</text><text transform="matrix(0.1318 0 -0.0373 0.0686 395.6 226)">A7</text><text transform="matrix(0.1318 0 -0.0334 0.0686 410.3 226)">A8</text><text transform="matrix(0.1318 0 -0.0294 0.0686 424.9 226)">A1</text><text transform="matrix(0.1318 0 -0.0255 0.0686 439.5 226)">A2</text><text transform="matrix(0.1318 0 -0.0216 0.0686 454.2 226)">A3</text><text transform="matrix(0.1318 0 -0.0177 0.0686 468.8 226)">A4</text><text transform="matrix(0.1318 0 -0.0137 0.0686 483.5 226)">A5</text><text transform="matrix(0.1318 0 -0.0098 0.0686 498.1 226)">A6</text><text transform="matrix(0.1318 0 -0.0059 0.0686 512.7 226)">A7</text><text transform="matrix(0.1318 0 -0.002 0.0686 527.4 226)">A8</text><text transform="matrix(0.1318 0 0.002 0.0686 542 226)">A1</text><text transform="matrix(0.1318 0 0.0059 0.0686 556.7 226)">A2</text><text transform="matrix(0.1318 0 0.0098 0.0686 571.3 226)">A3</text><text transform="matrix(0.1318 0 0.0137 0.0686 585.9 226)">A4</text><text transform="matrix(0.1318 0 0.0177 0.0686 600.6 226)">A5</text><text transform="matrix(0.1318 0 0.0216 0.0686 615.2 226)">A6</text><text transform="matrix(0.1318 0 0.0255 0.0686 629.9 226)">A7</text><text transform="matrix(0.1318 0 0.0294 0.0686 644.5 226)">A8</text><text transform="matrix(0.1318 0 0.0334 0.0686 659.1 226)">A1</text><text transform="matrix(0.1318 0 0.0373 0.0686 673.8 226)">A2</text><text transform="matrix(0.1318 0 0.0412 0.0686 688.4 226)">A3</text><text transform="matrix(0.1318 0 0.0451 0.0686 703.1 226)">A4</text><text transform="matrix(0.1318 0 0.0491 0.0686 717.7 226)">A5</text><text transform="matrix(0.1318 0 0.053 0.0686 732.3 226)">A6</text><text transform="matrix(0.1318 0 0.0569 0.0686 747 226)">A7</text><text transform="matrix(0.1318 0 0.0608 0.0686 761.6 226)">A8</text><text transform="matrix(0.1318 0 0.0648 0.0686 776.3 226)">A1</text><text transform="matrix(0.1318 0 0.0687 0.0686 790.9 226)">A2</text><text transform="matrix(0.1318 0 0.0726 0.0686 805.5 226)">A3</text><text transform="matrix(0.1318 0 0.0765 0.0686 820.2 226)">A4</text><text transform="matrix(0.1318 0 0.0805 0.0686 834.8 226)">A5</text><text transform="matrix(0.1286 0 -0.0804 0.0654 227.4 219.9)">H3</text><text transform="matrix(0.1286 0 -0.0767 0.0654 241.7 219.9)">H4</text><text transform="matrix(0.1286 0 -0.0729 0.0654 256 219.9)">H5</text><text transform="matrix(0.1286 0 -0.0692 0.0654 270.3 219.9)">H6</text><text transform="matrix(0.1286 0 -0.0655 0.0654 284.6 219.9)">H7</text><text transform="matrix(0.1286 0 -0.0617 0.0654 298.9 219.9)">H8</text><text transform="matrix(0.1286 0 -0.058 0.0654 313.2 219.9)">H1</text><text transform="matrix(0.1286 0 -0.0542 0.0654 327.5 219.9)">H2</text><text transform="matrix(0.1286 0 -0.0505 0.0654 341.8 219.9)">H3</text><text transform="matrix(0.1286 0 -0.0468 0.0654 356 219.9)">H4</text><text transform="matrix(0.1286 0 -0.043 0.0654 370.3 219.9)">H5</text><text transform="matrix(0.1286 0 -0.0393 0.0654 384.6 219.9)">H6</text><text transform="matrix(0.1286 0 -0.0355 0.0654 398.9 219.9)">H7</text><text transform="matrix(0.1286 0 -0.0318 0.0654 413.2 219.9)">H8</text><text transform="matrix(0.1286 0 -0.0281 0.0654 427.5 219.9)">H1</text><text transform="matrix(0.1286 0 -0.0243 0.0654 441.8 219.9)">H2</text><text transform="matrix(0.1286 0 -0.0206 0.0654 456.1 219.9)">H3</text><text transform="matrix(0.1286 0 -0.0168 0.0654 470.4 219.9)">H4</text><text transform="matrix(0.1286 0 -0.0131 0.0654 484.7 219.9)">H5</text><text transform="matrix(0.1286 0 -0.0094 0.0654 499 219.9)">H6</text><text transform="matrix(0.1286 0 -0.0056 0.0654 513.3 219.9)">H7</text><text transform="matrix(0.1286 0 -0.0019 0.0654 527.6 219.9)">H8</text><text transform="matrix(0.1286 0 0.0019 0.0654 541.8 219.9)">H1</text><text transform="matrix(0.1286 0 0.0056 0.0654 556.1 219.9)">H2</text><text transform="matrix(0.1286 0 0.0094 0.0654 570.4 219.9)">H3</text><text transform="matrix(0.1286 0 0.0131 0.0654 584.7 219.9)">H4</text><text transform="matrix(0.1286 0 0.0168 0.0654 599 219.9)">H5</text><text transform="matrix(0.1286 0 0.0206 0.0654 613.3 219.9)">H6</text><text transform="matrix(0.1286 0 0.0243 0.0654 627.6 219.9)">H7</text><text transform="matrix(0.1286 0 0.0281 0.0654 641.9 219.9)">H8</text><text transform="matrix(0.1286 0 0.0318 0.0654 656.2 219.9)">H1</text><text transform="matrix(0.1286 0 0.0355 0.0654 670.5 219.9)">H2</text><text transform="matrix(0.1286 0 0.0393 0.0654 684.8 219.9)">H3</text><text transform="matrix(0.1286 0 0.043 0.0654 699.1 219.9)">H4</text><text transform="matrix(0.1286 0 0.0468 0.0654 713.4 219.9)">H5</text><text transform="matrix(0.1286 0 0.0505 0.0654 727.6 219.9)">H6</text><text transform="matrix(0.1286 0 0.0542 0.0654 741.9 219.9)">H7</text><text transform="matrix(0.1286 0 0.058 0.0654 756.2 219.9)">H8</text><text transform="matrix(0.1286 0 0.0617 0.0654 770.5 219.9)">H1</text><text transform="matrix(0.1286 0 0.0655 0.0654 784.8 219.9)">H2</text><text transform="matrix(0.1286 0 0.0692 0.0654 799.1 219.9)">H3</text><text transform="matrix(0.1286 0 0.0729 0.0654 813.4 219.9)">H4</text><text transform="matrix(0.1286 0 0.0767 0.0654 827.7 219.9)">H5</text><text transform="matrix(0.1286 0 0.0804 0.0654 842 219.9)">H6</text><text transform="matrix(0.1257 0 -0.0803 0.0624 220.6 214.1)">G2</text><text transform="matrix(0.1257 0 -0.0767 0.0624 234.6 214.1)">G3</text><text transform="matrix(0.1257 0 -0.0732 0.0624 248.5 214.1)">G4</text><text transform="matrix(0.1257 0 -0.0696 0.0624 262.5 214.1)">G5</text><text transform="matrix(0.1257 0 -0.066 0.0624 276.4 214.1)">G6</text><text transform="matrix(0.1257 0 -0.0625 0.0624 290.4 214.1)">G7</text><text transform="matrix(0.1257 0 -0.0589 0.0624 304.4 214.1)">G8</text><text transform="matrix(0.1257 0 -0.0553 0.0624 318.3 214.1)">G1</text><text transform="matrix(0.1257 0 -0.0517 0.0624 332.3 214.1)">G2</text><text transform="matrix(0.1257 0 -0.0482 0.0624 346.2 214.1)">G3</text><text transform="matrix(0.1257 0 -0.0446 0.0624 360.2 214.1)">G4</text><text transform="matrix(0.1257 0 -0.041 0.0624 374.2 214.1)">G5</text><text transform="matrix(0.1257 0 -0.0375 0.0624 388.1 214.1)">G6</text><text transform="matrix(0.1257 0 -0.0339 0.0624 402.1 214.1)">G7</text><text transform="matrix(0.1257 0 -0.0303 0.0624 416 214.1)">G8</text><text transform="matrix(0.1257 0 -0.0268 0.0624 430 214.1)">G1</text><text transform="matrix(0.1257 0 -0.0232 0.0624 444 214.1)">G2</text><text transform="matrix(0.1257 0 -0.0196 0.0624 457.9 214.1)">G3</text><text transform="matrix(0.1257 0 -0.0161 0.0624 471.9 214.1)">G4</text><text transform="matrix(0.1257 0 -0.0125 0.0624 485.8 214.1)">G5</text><text transform="matrix(0.1257 0 -0.0089 0.0624 499.8 214.1)">G6</text><text transform="matrix(0.1257 0 -0.0054 0.0624 513.8 214.1)">G7</text><text transform="matrix(0.1257 0 -0.0018 0.0624 527.7 214.1)">G8</text><text transform="matrix(0.1257 0 0.0018 0.0624 541.7 214.1)">G1</text><text transform="matrix(0.1257 0 0.0054 0.0624 555.6 214.1)">G2</text><text transform="matrix(0.1257 0 0.0089 0.0624 569.6 214.1)">G3</text><text transform="matrix(0.1257 0 0.0125 0.0624 583.6 214.1)">G4</text><text transform="matrix(0.1257 0 0.0161 0.0624 597.5 214.1)">G5</text><text transform="matrix(0.1257 0 0.0196 0.0624 611.5 214.1)">G6</text><text transform="matrix(0.1257 0 0.0232 0.0624 625.4 214.1)">G7</text><text transform="matrix(0.1257 0 0.0268 0.0624 639.4 214.1)">G8</text><text transform="matrix(0.1257 0 0.0303 0.0624 653.4 214.1)">G1</text><text transform="matrix(0.1257 0 0.0339 0.0624 667.3 214.1)">G2</text><text transform="matrix(0.1257 0 0.0375 0.0624 681.3 214.1)">G3</text><text transform="matrix(0.1257 0 0.041 0.0624 695.2 214.1)">G4</text><text transform="matrix(0.1257 0 0.0446 0.0624 709.2 214.1)">G5</text><text transform="matrix(0.1257 0 0.0482 0.0624 723.2 214.1)">G6</text><text transform="matrix(0.1257 0 0.0517 0.0624 737.1 214.1)">G7</text><text transform="matrix(0.1257 0 0.0553 0.0624 751.1 214.1)">G8</text><text transform="matrix(0.1257 0 0.0589 0.0624 765 214.1)">G1</text><text transform="matrix(0.1257 0 0.0625 0.0624 779 214.1)">G2</text><text transform="matrix(0.1257 0 0.066 0.0624 793 214.1)">G3</text><text transform="matrix(0.1257 0 0.0696 0.0624 806.9 214.1)">G4</text><text transform="matrix(0.1257 0 0.0732 0.0624 820.9 214.1)">G5</text><text transform="matrix(0.1257 0 0.0767 0.0624 834.8 214.1)">G6</text><text transform="matrix(0.1228 0 -0.0767 0.0596 227.7 208.6)">F2</text><text transform="matrix(0.1228 0 -0.0733 0.0596 241.4 208.6)">F3</text><text transform="matrix(0.1228 0 -0.0699 0.0596 255 208.6)">F4</text><text transform="matrix(0.1228 0 -0.0665 0.0596 268.7 208.6)">F5</text><text transform="matrix(0.1228 0 -0.0631 0.0596 282.3 208.6)">F6</text><text transform="matrix(0.1228 0 -0.0596 0.0596 295.9 208.6)">F7</text><text transform="matrix(0.1228 0 -0.0562 0.0596 309.6 208.6)">F8</text><text transform="matrix(0.1228 0 -0.0528 0.0596 323.2 208.6)">F1</text><text transform="matrix(0.1228 0 -0.0494 0.0596 336.9 208.6)">F2</text><text transform="matrix(0.1228 0 -0.046 0.0596 350.5 208.6)">F3</text><text transform="matrix(0.1228 0 -0.0426 0.0596 364.2 208.6)">F4</text><text transform="matrix(0.1228 0 -0.0392 0.0596 377.8 208.6)">F5</text><text transform="matrix(0.1228 0 -0.0358 0.0596 391.4 208.6)">F6</text><text transform="matrix(0.1228 0 -0.0324 0.0596 405.1 208.6)">F7</text><text transform="matrix(0.1228 0 -0.029 0.0596 418.7 208.6)">F8</text><text transform="matrix(0.1228 0 -0.0256 0.0596 432.4 208.6)">F1</text><text transform="matrix(0.1228 0 -0.0222 0.0596 446 208.6)">F2</text><text transform="matrix(0.1228 0 -0.0187 0.0596 459.7 208.6)">F3</text><text transform="matrix(0.1228 0 -0.0153 0.0596 473.3 208.6)">F4</text><text transform="matrix(0.1228 0 -0.0119 0.0596 486.9 208.6)">F5</text><text transform="matrix(0.1228 0 -0.0085 0.0596 500.6 208.6)">F6</text><text transform="matrix(0.1228 0 -0.0051 0.0596 514.2 208.6)">F7</text><text transform="matrix(0.1228 0 -0.0017 0.0596 527.9 208.6)">F8</text><text transform="matrix(0.1228 0 0.0017 0.0596 541.5 208.6)">F1</text><text transform="matrix(0.1228 0 0.0051 0.0596 555.2 208.6)">F2</text><text transform="matrix(0.1228 0 0.0085 0.0596 568.8 208.6)">F3</text><text transform="matrix(0.1228 0 0.0119 0.0596 582.5 208.6)">F4</text><text transform="matrix(0.1228 0 0.0153 0.0596 596.1 208.6)">F5</text><text transform="matrix(0.1228 0 0.0187 0.0596 609.7 208.6)">F6</text><text transform="matrix(0.1228 0 0.0222 0.0596 623.4 208.6)">F7</text><text transform="matrix(0.1228 0 0.0256 0.0596 637 208.6)">F8</text><text transform="matrix(0.1228 0 0.029 0.0596 650.7 208.6)">F1</text><text transform="matrix(0.1228 0 0.0324 0.0596 664.3 208.6)">F2</text><text transform="matrix(0.1228 0 0.0358 0.0596 678 208.6)">F3</text><text transform="matrix(0.1228 0 0.0392 0.0596 691.6 208.6)">F4</text><text transform="matrix(0.1228 0 0.0426 0.0596 705.2 208.6)">F5</text><text transform="matrix(0.1228 0 0.046 0.0596 718.9 208.6)">F6</text><text transform="matrix(0.1228 0 0.0494 0.0596 732.5 208.6)">F7</text><text transform="matrix(0.1228 0 0.0528 0.0596 746.2 208.6)">F8</text><text transform="matrix(0.1228 0 0.0562 0.0596 759.8 208.6)">F1</text><text transform="matrix(0.1228 0 0.0596 0.0596 773.5 208.6)">F2</text><text transform="matrix(0.1228 0 0.0631 0.0596 787.1 208.6)">F3</text><text transform="matrix(0.1228 0 0.0665 0.0596 800.7 208.6)">F4</text><text transform="matrix(0.1228 0 0.0699 0.0596 814.4 208.6)">F5</text><text transform="matrix(0.1228 0 0.0733 0.0596 828 208.6)">F6</text><text transform="matrix(0.1228 0 0.0767 0.0596 841.7 208.6)">F7</text><text transform="matrix(0.1201 0 -0.0766 0.057 221.2 203.3)">E1</text><text transform="matrix(0.1201 0 -0.0733 0.057 234.5 203.3)">E2</text><text transform="matrix(0.1201 0 -0.0701 0.057 247.9 203.3)">E3</text><text transform="matrix(0.1201 0 -0.0668 0.057 261.2 203.3)">E4</text><text transform="matrix(0.1201 0 -0.0635 0.057 274.6 203.3)">E5</text><text transform="matrix(0.1201 0 -0.0603 0.057 287.9 203.3)">E6</text><text transform="matrix(0.1201 0 -0.057 0.057 301.2 203.3)">E7</text><text transform="matrix(0.1201 0 -0.0538 0.057 314.6 203.3)">E8</text><text transform="matrix(0.1201 0 -0.0505 0.057 327.9 203.3)">E1</text><text transform="matrix(0.1201 0 -0.0473 0.057 341.3 203.3)">E2</text><text transform="matrix(0.1201 0 -0.044 0.057 354.6 203.3)">E3</text><text transform="matrix(0.1201 0 -0.0407 0.057 367.9 203.3)">E4</text><text transform="matrix(0.1201 0 -0.0375 0.057 381.3 203.3)">E5</text><text transform="matrix(0.1201 0 -0.0342 0.057 394.6 203.3)">E6</text><text transform="matrix(0.1201 0 -0.031 0.057 408 203.3)">E7</text><text transform="matrix(0.1201 0 -0.0277 0.057 421.3 203.3)">E8</text><text transform="matrix(0.1201 0 -0.0244 0.057 434.6 203.3)">E1</text><text transform="matrix(0.1201 0 -0.0212 0.057 448 203.3)">E2</text><text transform="matrix(0.1201 0 -0.0179 0.057 461.3 203.3)">E3</text><text transform="matrix(0.1201 0 -0.0147 0.057 474.7 203.3)">E4</text><text transform="matrix(0.1201 0 -0.0114 0.057 488 203.3)">E5</text><text transform="matrix(0.1201 0 -0.0081 0.057 501.3 203.3)">E6</text><text transform="matrix(0.1201 0 -0.0049 0.057 514.7 203.3)">E7</text><text transform="matrix(0.1201 0 -0.0016 0.057 528 203.3)">E8</text><text transform="matrix(0.1201 0 0.0016 0.057 541.4 203.3)">E1</text><text transform="matrix(0.1201 0 0.0049 0.057 554.7 203.3)">E2</text><text transform="matrix(0.1201 0 0.0081 0.057 568.1 203.3)">E3</text><text transform="matrix(0.1201 0 0.0114 0.057 581.4 203.3)">E4</text><text transform="matrix(0.1201 0 0.0147 0.057 594.7 203.3)">E5</text><text transform="matrix(0.1201 0 0.0179 0.057 608.1 203.3)">E6</text><text transform="matrix(0.1201 0 0.0212 0.057 621.4 203.3)">E7</text><text transform="matrix(0.1201 0 0.0244 0.057 634.8 203.3)">E8</text><text transform="matrix(0.1201 0 0.0277 0.057 648.1 203.3)">E1</text><text transform="matrix(0.1201 0 0.031 0.057 661.4 203.3)">E2</text><text transform="matrix(0.1201 0 0.0342 0.057 674.8 203.3)">E3</text><text transform="matrix(0.1201 0 0.0375 0.057 688.1 203.3)">E4</text><text transform="matrix(0.1201 0 0.0407 0.057 701.5 203.3)">E5</text><text transform="matrix(0.1201 0 0.044 0.057 714.8 203.3)">E6</text><text transform="matrix(0.1201 0 0.0473 0.057 728.1 203.3)">E7</text><text transform="matrix(0.1201 0 0.0505 0.057 741.5 203.3)">E8</text><text transform="matrix(0.1201 0 0.0538 0.057 754.8 203.3)">E1</text><text transform="matrix(0.1201 0 0.057 0.057 768.2 203.3)">E2</text><text transform="matrix(0.1201 0 0.0603 0.057 781.5 203.3)">E3</text><text transform="matrix(0.1201 0 0.0635 0.057 794.8 203.3)">E4</text><text transform="matrix(0.1201 0 0.0668 0.057 808.2 203.3)">E5</text><text transform="matrix(0.1201 0 0.0701 0.057 821.5 203.3)">E6</text><text transform="matrix(0.1201 0 0.0733 0.057 834.9 203.3)">E7</text><text transform="matrix(0.1175 0 -0.0733 0.0545 228 198.2)">D1</text><text transform="matrix(0.1175 0 -0.0702 0.0545 241.1 198.2)">D2</text><text transform="matrix(0.1175 0 -0.0671 0.0545 254.1 198.2)">D3</text><text transform="matrix(0.1175 0 -0.0639 0.0545 267.2 198.2)">D4</text><text transform="matrix(0.1175 0 -0.0608 0.0545 280.2 198.2)">D5</text><text transform="matrix(0.1175 0 -0.0577 0.0545 293.3 198.2)">D6</text><text transform="matrix(0.1175 0 -0.0546 0.0545 306.3 198.2)">D7</text><text transform="matrix(0.1175 0 -0.0515 0.0545 319.4 198.2)">D8</text><text transform="matrix(0.1175 0 -0.0483 0.0545 332.4 198.2)">D1</text><text transform="matrix(0.1175 0 -0.0452 0.0545 345.5 198.2)">D2</text><text transform="matrix(0.1175 0 -0.0421 0.0545 358.5 198.2)">D3</text><text transform="matrix(0.1175 0 -0.039 0.0545 371.6 198.2)">D4</text><text transform="matrix(0.1175 0 -0.0359 0.0545 384.6 198.2)">D5</text><text transform="matrix(0.1175 0 -0.0327 0.0545 397.7 198.2)">D6</text><text transform="matrix(0.1175 0 -0.0296 0.0545 410.7 198.2)">D7</text><text transform="matrix(0.1175 0 -0.0265 0.0545 423.8 198.2)">D8</text><text transform="matrix(0.1175 0 -0.0234 0.0545 436.8 198.2)">D1</text><text transform="matrix(0.1175 0 -0.0203 0.0545 449.9 198.2)">D2</text><text transform="matrix(0.1175 0 -0.0172 0.0545 462.9 198.2)">D3</text><text transform="matrix(0.1175 0 -0.014 0.0545 476 198.2)">D4</text><text transform="matrix(0.1175 0 -0.0109 0.0545 489 198.2)">D5</text><text transform="matrix(0.1175 0 -0.0078 0.0545 502.1 198.2)">D6</text><text transform="matrix(0.1175 0 -0.0047 0.0545 515.1 198.2)">D7</text><text transform="matrix(0.1175 0 -0.0016 0.0545 528.2 198.2)">D8</text><text transform="matrix(0.1175 0 0.0016 0.0545 541.2 198.2)">D1</text><text transform="matrix(0.1175 0 0.0047 0.0545 554.3 198.2)">D2</text><text transform="matrix(0.1175 0 0.0078 0.0545 567.3 198.2)">D3</text><text transform="matrix(0.1175 0 0.0109 0.0545 580.4 198.2)">D4</text><text transform="matrix(0.1175 0 0.014 0.0545 593.4 198.2)">D5</text><text transform="matrix(0.1175 0 0.0172 0.0545 606.5 198.2)">D6</text><text transform="matrix(0.1175 0 0.0203 0.0545 619.5 198.2)">D7</text><text transform="matrix(0.1175 0 0.0234 0.0545 632.6 198.2)">D8</text><text transform="matrix(0.1175 0 0.0265 0.0545 645.6 198.2)">D1</text><text transform="matrix(0.1175 0 0.0296 0.0545 658.7 198.2)">D2</text><text transform="matrix(0.1175 0 0.0327 0.0545 671.7 198.2)">D3</text><text transform="matrix(0.1175 0 0.0359 0.0545 684.8 198.2)">D4</text><text transform="matrix(0.1175 0 0.039 0.0545 697.8 198.2)">D5</text><text transform="matrix(0.1175 0 0.0421 0.0545 710.9 198.2)">D6</text><text transform="matrix(0.1175 0 0.0452 0.0545 723.9 198.2)">D7</text><text transform="matrix(0.1175 0 0.0483 0.0545 737 198.2)">D8</text><text transform="matrix(0.1175 0 0.0515 0.0545 750 198.2)">D1</text><text transform="matrix(0.1175 0 0.0546 0.0545 763.1 198.2)">D2</text><text transform="matrix(0.1175 0 0.0577 0.0545 776.1 198.2)">D3</text><text transform="matrix(0.1175 0 0.0608 0.0545 789.2 198.2)">D4</text><text transform="matrix(0.1175 0 0.0639 0.0545 802.2 198.2)">D5</text><text transform="matrix(0.1175 0 0.0671 0.0545 815.3 198.2)">D6</text><text transform="matrix(0.1175 0 0.0702 0.0545 828.3 198.2)">D7</text><text transform="matrix(0.1175 0 0.0733 0.0545 841.4 198.2)">D8</text><text transform="matrix(0.115 0 -0.0732 0.0522 221.8 193.4)">C8</text><text transform="matrix(0.115 0 -0.0702 0.0522 234.5 193.4)">C1</text><text transform="matrix(0.115 0 -0.0672 0.0522 247.3 193.4)">C2</text><text transform="matrix(0.115 0 -0.0642 0.0522 260.1 193.4)">C3</text><text transform="matrix(0.115 0 -0.0612 0.0522 272.9 193.4)">C4</text><text transform="matrix(0.115 0 -0.0583 0.0522 285.6 193.4)">C5</text><text transform="matrix(0.115 0 -0.0553 0.0522 298.4 193.4)">C6</text><text transform="matrix(0.115 0 -0.0523 0.0522 311.2 193.4)">C7</text><text transform="matrix(0.115 0 -0.0493 0.0522 323.9 193.4)">C8</text><text transform="matrix(0.115 0 -0.0463 0.0522 336.7 193.4)">C1</text><text transform="matrix(0.115 0 -0.0433 0.0522 349.5 193.4)">C2</text><text transform="matrix(0.115 0 -0.0403 0.0522 362.3 193.4)">C3</text><text transform="matrix(0.115 0 -0.0373 0.0522 375 193.4)">C4</text><text transform="matrix(0.115 0 -0.0344 0.0522 387.8 193.4)">C5</text><text transform="matrix(0.115 0 -0.0314 0.0522 400.6 193.4)">C6</text><text transform="matrix(0.115 0 -0.0284 0.0522 413.4 193.4)">C7</text><text transform="matrix(0.115 0 -0.0254 0.0522 426.1 193.4)">C8</text><text transform="matrix(0.115 0 -0.0224 0.0522 438.9 193.4)">C1</text><text transform="matrix(0.115 0 -0.0194 0.0522 451.7 193.4)">C2</text><text transform="matrix(0.115 0 -0.0164 0.0522 464.4 193.4)">C3</text><text transform="matrix(0.115 0 -0.0134 0.0522 477.2 193.4)">C4</text><text transform="matrix(0.115 0 -0.0105 0.0522 490 193.4)">C5</text><text transform="matrix(0.115 0 -0.0075 0.0522 502.8 193.4)">C6</text><text transform="matrix(0.115 0 -0.0045 0.0522 515.5 193.4)">C7</text><text transform="matrix(0.115 0 -0.0015 0.0522 528.3 193.4)">C8</text><text transform="matrix(0.115 0 0.0015 0.0522 541.1 193.4)">C1</text><text transform="matrix(0.115 0 0.0045 0.0522 553.9 193.4)">C2</text><text transform="matrix(0.115 0 0.0075 0.0522 566.6 193.4)">C3</text><text transform="matrix(0.115 0 0.0105 0.0522 579.4 193.4)">C4</text><text transform="matrix(0.115 0 0.0134 0.0522 592.2 193.4)">C5</text><text transform="matrix(0.115 0 0.0164 0.0522 605 193.4)">C6</text><text transform="matrix(0.115 0 0.0194 0.0522 617.7 193.4)">C7</text><text transform="matrix(0.115 0 0.0224 0.0522 630.5 193.4)">C8</text><text transform="matrix(0.115 0 0.0254 0.0522 643.3 193.4)">C1</text><text transform="matrix(0.115 0 0.0284 0.0522 656 193.4)">C2</text><text transform="matrix(0.115 0 0.0314 0.0522 668.8 193.4)">C3</text><text transform="matrix(0.115 0 0.0344 0.0522 681.6 193.4)">C4</text><text transform="matrix(0.115 0 0.0373 0.0522 694.4 193.4)">C5</text><text transform="matrix(0.115 0 0.0403 0.0522 707.1 193.4)">C6</text><text transform="matrix(0.115 0 0.0433 0.0522 719.9 193.4)">C7</text><text transform="matrix(0.115 0 0.0463 0.0522 732.7 193.4)">C8</text><text transform="matrix(0.115 0 0.0493 0.0522 745.5 193.4)">C1</text><text transform="matrix(0.115 0 0.0523 0.0522 758.2 193.4)">C2</text><text transform="matrix(0.115 0 0.0553 0.0522 771 193.4)">C3</text><text transform="matrix(0.115 0 0.0583 0.0522 783.8 193.4)">C4</text><text transform="matrix(0.115 0 0.0612 0.0522 796.5 193.4)">C5</text><text transform="matrix(0.115 0 0.0642 0.0522 809.3 193.4)">C6</text><text transform="matrix(0.115 0 0.0672 0.0522 822.1 193.4)">C7</text><text transform="matrix(0.115 0 0.0702 0.0522 834.9 193.4)">C8</text><text transform="matrix(0.115 0 0.0732 0.0522 847.6 193.4)">C1</text><text transform="matrix(0.1126 0 -0.0702 0.0501 228.3 188.7)">B8</text><text transform="matrix(0.1126 0 -0.0673 0.0501 240.8 188.7)">B1</text><text transform="matrix(0.1126 0 -0.0644 0.0501 253.3 188.7)">B2</text><text transform="matrix(0.1126 0 -0.0616 0.0501 265.8 188.7)">B3</text><text transform="matrix(0.1126 0 -0.0587 0.0501 278.3 188.7)">B4</text><text transform="matrix(0.1126 0 -0.0559 0.0501 290.8 188.7)">B5</text><text transform="matrix(0.1126 0 -0.053 0.0501 303.3 188.7)">B6</text><text transform="matrix(0.1126 0 -0.0501 0.0501 315.8 188.7)">B7</text><text transform="matrix(0.1126 0 -0.0473 0.0501 328.3 188.7)">B8</text><text transform="matrix(0.1126 0 -0.0444 0.0501 340.8 188.7)">B1</text><text transform="matrix(0.1126 0 -0.0415 0.0501 353.3 188.7)">B2</text><text transform="matrix(0.1126 0 -0.0387 0.0501 365.9 188.7)">B3</text><text transform="matrix(0.1126 0 -0.0358 0.0501 378.4 188.7)">B4</text><text transform="matrix(0.1126 0 -0.0329 0.0501 390.9 188.7)">B5</text><text transform="matrix(0.1126 0 -0.0301 0.0501 403.4 188.7)">B6</text><text transform="matrix(0.1126 0 -0.0272 0.0501 415.9 188.7)">B7</text><text transform="matrix(0.1126 0 -0.0243 0.0501 428.4 188.7)">B8</text><text transform="matrix(0.1126 0 -0.0215 0.0501 440.9 188.7)">B1</text><text transform="matrix(0.1126 0 -0.0186 0.0501 453.4 188.7)">B2</text><text transform="matrix(0.1126 0 -0.0158 0.0501 465.9 188.7)">B3</text><text transform="matrix(0.1126 0 -0.0129 0.0501 478.4 188.7)">B4</text><text transform="matrix(0.1126 0 -0.01 0.0501 490.9 188.7)">B5</text><text transform="matrix(0.1126 0 -0.0072 0.0501 503.4 188.7)">B6</text><text transform="matrix(0.1126 0 -0.0043 0.0501 515.9 188.7)">B7</text><text transform="matrix(0.1126 0 -0.0014 0.0501 528.4 188.7)">B8</text><text transform="matrix(0.1126 0 0.0014 0.0501 541 188.7)">B1</text><text transform="matrix(0.1126 0 0.0043 0.0501 553.5 188.7)">B2</text><text transform="matrix(0.1126 0 0.0072 0.0501 566 188.7)">B3</text><text transform="matrix(0.1126 0 0.01 0.0501 578.5 188.7)">B4</text><text transform="matrix(0.1126 0 0.0129 0.0501 591 188.7)">B5</text><text transform="matrix(0.1126 0 0.0158 0.0501 603.5 188.7)">B6</text><text transform="matrix(0.1126 0 0.0186 0.0501 616 188.7)">B7</text><text transform="matrix(0.1126 0 0.0215 0.0501 628.5 188.7)">B8</text><text transform="matrix(0.1126 0 0.0243 0.0501 641 188.7)">B1</text><text transform="matrix(0.1126 0 0.0272 0.0501 653.5 188.7)">B2</text><text transform="matrix(0.1126 0 0.0301 0.0501 666 188.7)">B3</text><text transform="matrix(0.1126 0 0.0329 0.0501 678.5 188.7)">B4</text><text transform="matrix(0.1126 0 0.0358 0.0501 691 188.7)">B5</text><text transform="matrix(0.1126 0 0.0387 0.0501 703.5 188.7)">B6</text><text transform="matrix(0.1126 0 0.0415 0.0501 716.1 188.7)">B7</text><text transform="matrix(0.1126 0 0.0444 0.0501 728.6 188.7)">B8</text><text transform="matrix(0.1126 0 0.0473 0.0501 741.1 188.7)">B1</text><text transform="matrix(0.1126 0 0.0501 0.0501 753.6 188.7)">B2</text><text transform="matrix(0.1126 0 0.053 0.0501 766.1 188.7)">B3</text><text transform="matrix(0.1126 0 0.0559 0.0501 778.6 188.7)">B4</text><text transform="matrix(0.1126 0 0.0587 0.0501 791.1 188.7)">B5</text><text transform="matrix(0.1126 0 0.0616 0.0501 803.6 188.7)">B6</text><text transform="matrix(0.1126 0 0.0644 0.0501 816.1 188.7)">B7</text><text transform="matrix(0.1126 0 0.0673 0.0501 828.6 188.7)">B8</text><text transform="matrix(0.1126 0 0.0702 0.0501 841.1 188.7)">B1</text><text transform="matrix(0.1103 0 -0.0701 0.0481 222.3 184.3)">A7</text><text transform="matrix(0.1103 0 -0.0673 0.0481 234.5 184.3)">A8</text><text transform="matrix(0.1103 0 -0.0646 0.0481 246.8 184.3)">A1</text><text transform="matrix(0.1103 0 -0.0618 0.0481 259 184.3)">A2</text><text transform="matrix(0.1103 0 -0.0591 0.0481 271.3 184.3)">A3</text><text transform="matrix(0.1103 0 -0.0563 0.0481 283.5 184.3)">A4</text><text transform="matrix(0.1103 0 -0.0536 0.0481 295.8 184.3)">A5</text><text transform="matrix(0.1103 0 -0.0509 0.0481 308 184.3)">A6</text><text transform="matrix(0.1103 0 -0.0481 0.0481 320.3 184.3)">A7</text><text transform="matrix(0.1103 0 -0.0454 0.0481 332.5 184.3)">A8</text><text transform="matrix(0.1103 0 -0.0426 0.0481 344.8 184.3)">A1</text><text transform="matrix(0.1103 0 -0.0399 0.0481 357 184.3)">A2</text><text transform="matrix(0.1103 0 -0.0371 0.0481 369.3 184.3)">A3</text><text transform="matrix(0.1103 0 -0.0344 0.0481 381.6 184.3)">A4</text><text transform="matrix(0.1103 0 -0.0316 0.0481 393.8 184.3)">A5</text><text transform="matrix(0.1103 0 -0.0289 0.0481 406.1 184.3)">A6</text><text transform="matrix(0.1103 0 -0.0261 0.0481 418.3 184.3)">A7</text><text transform="matrix(0.1103 0 -0.0234 0.0481 430.6 184.3)">A8</text><text transform="matrix(0.1103 0 -0.0206 0.0481 442.8 184.3)">A1</text><text transform="matrix(0.1103 0 -0.0179 0.0481 455.1 184.3)">A2</text><text transform="matrix(0.1103 0 -0.0151 0.0481 467.3 184.3)">A3</text><text transform="matrix(0.1103 0 -0.0124 0.0481 479.6 184.3)">A4</text><text transform="matrix(0.1103 0 -0.0096 0.0481 491.8 184.3)">A5</text><text transform="matrix(0.1103 0 -0.0069 0.0481 504.1 184.3)">A6</text><text transform="matrix(0.1103 0 -0.0041 0.0481 516.3 184.3)">A7</text><text transform="matrix(0.1103 0 -0.0014 0.0481 528.6 184.3)">A8</text><text transform="matrix(0.1103 0 0.0014 0.0481 540.8 184.3)">A1</text><text transform="matrix(0.1103 0 0.0041 0.0481 553.1 184.3)">A2</text><text transform="matrix(0.1103 0 0.0069 0.0481 565.3 184.3)">A3</text><text transform="matrix(0.1103 0 0.0096 0.0481 577.6 184.3)">A4</text><text transform="matrix(0.1103 0 0.0124 0.0481 589.8 184.3)">A5</text><text transform="matrix(0.1103 0 0.0151 0.0481 602.1 184.3)">A6</text><text transform="matrix(0.1103 0 0.0179 0.0481 614.3 184.3)">A7</text><text transform="matrix(0.1103 0 0.0206 0.0481 626.6 184.3)">A8</text><text transform="matrix(0.1103 0 0.0234 0.0481 638.8 184.3)">A1</text><text transform="matrix(0.1103 0 0.0261 0.0481 651.1 184.3)">A2</text><text transform="matrix(0.1103 0 0.0289 0.0481 663.3 184.3)">A3</text><text transform="matrix(0.1103 0 0.0316 0.0481 675.6 184.3)">A4</text><text transform="matrix(0.1103 0 0.0344 0.0481 687.8 184.3)">A5</text><text transform="matrix(0.1103 0 0.0371 0.0481 700.1 184.3)">A6</text><text transform="matrix(0.1103 0 0.0399 0.0481 712.4 184.3)">A7</text><text transform="matrix(0.1103 0 0.0426 0.0481 724.6 184.3)">A8</text><text transform="matrix(0.1103 0 0.0454 0.0481 736.9 184.3)">A1</text><text transform="matrix(0.1103 0 0.0481 0.0481 749.1 184.3)">A2</text><text transform="matrix(0.1103 0 0.0509 0.0481 761.4 184.3)">A3</text><text transform="matrix(0.1103 0 0.0536 0.0481 773.6 184.3)">A4</text><text transform="matrix(0.1103 0 0.0563 0.0481 785.9 184.3)">A5</text><text transform="matrix(0.1103 0 0.0591 0.0481 798.1 184.3)">A6</text><text transform="matrix(0.1103 0 0.0618 0.0481 810.4 184.3)">A7</text><text transform="matrix(0.1103 0 0.0646 0.0481 822.6 184.3)">A8</text><text transform="matrix(0.1103 0 0.0673 0.0481 834.9 184.3)">A1</text><text transform="matrix(0.1103 0 0.0701 0.0481 847.1 184.3)">A2</text><text transform="matrix(0.1081 0 -0.07 0.0462 216.5 180)">H6</text><text transform="matrix(0.1081 0 -0.0673 0.0462 228.5 180)">H7</text><text transform="matrix(0.1081 0 -0.0647 0.0462 240.5 180)">H8</text><text transform="matrix(0.1081 0 -0.062 0.0462 252.5 180)">H1</text><text transform="matrix(0.1081 0 -0.0594 0.0462 264.5 180)">H2</text><text transform="matrix(0.1081 0 -0.0568 0.0462 276.5 180)">H3</text><text transform="matrix(0.1081 0 -0.0541 0.0462 288.6 180)">H4</text><text transform="matrix(0.1081 0 -0.0515 0.0462 300.6 180)">H5</text><text transform="matrix(0.1081 0 -0.0488 0.0462 312.6 180)">H6</text><text transform="matrix(0.1081 0 -0.0462 0.0462 324.6 180)">H7</text><text transform="matrix(0.1081 0 -0.0436 0.0462 336.6 180)">H8</text><text transform="matrix(0.1081 0 -0.0409 0.0462 348.6 180)">H1</text><text transform="matrix(0.1081 0 -0.0383 0.0462 360.6 180)">H2</text><text transform="matrix(0.1081 0 -0.0356 0.0462 372.6 180)">H3</text><text transform="matrix(0.1081 0 -0.033 0.0462 384.6 180)">H4</text><text transform="matrix(0.1081 0 -0.0304 0.0462 396.6 180)">H5</text><text transform="matrix(0.1081 0 -0.0277 0.0462 408.6 180)">H6</text><text transform="matrix(0.1081 0 -0.0251 0.0462 420.6 180)">H7</text><text transform="matrix(0.1081 0 -0.0224 0.0462 432.6 180)">H8</text><text transform="matrix(0.1081 0 -0.0198 0.0462 444.6 180)">H1</text><text transform="matrix(0.1081 0 -0.0172 0.0462 456.7 180)">H2</text><text transform="matrix(0.1081 0 -0.0145 0.0462 468.7 180)">H3</text><text transform="matrix(0.1081 0 -0.0119 0.0462 480.7 180)">H4</text><text transform="matrix(0.1081 0 -0.0092 0.0462 492.7 180)">H5</text><text transform="matrix(0.1081 0 -0.0066 0.0462 504.7 180)">H6</text><text transform="matrix(0.1081 0 -0.004 0.0462 516.7 180)">H7</text><text transform="matrix(0.1081 0 -0.0013 0.0462 528.7 180)">H8</text><text transform="matrix(0.1081 0 0.0013 0.0462 540.7 180)">H1</text><text transform="matrix(0.1081 0 0.004 0.0462 552.7 180)">H2</text><text transform="matrix(0.1081 0 0.0066 0.0462 564.7 180)">H3</text><text transform="matrix(0.1081 0 0.0092 0.0462 576.7 180)">H4</text><text transform="matrix(0.1081 0 0.0119 0.0462 588.7 180)">H5</text><text transform="matrix(0.1081 0 0.0145 0.0462 600.7 180)">H6</text><text transform="matrix(0.1081 0 0.0172 0.0462 612.7 180)">H7</text><text transform="matrix(0.1081 0 0.0198 0.0462 624.8 180)">H8</text><text transform="matrix(0.1081 0 0.0224 0.0462 636.8 180)">H1</text><text transform="matrix(0.1081 0 0.0251 0.0462 648.8 180)">H2</text><text transform="matrix(0.1081 0 0.0277 0.0462 660.8 180)">H3</text><text transform="matrix(0.1081 0 0.0304 0.0462 672.8 180)">H4</text><text transform="matrix(0.1081 0 0.033 0.0462 684.8 180)">H5</text><text transform="matrix(0.1081 0 0.0356 0.0462 696.8 180)">H6</text><text transform="matrix(0.1081 0 0.0383 0.0462 708.8 180)">H7</text><text transform="matrix(0.1081 0 0.0409 0.0462 720.8 180)">H8</text><text transform="matrix(0.1081 0 0.0436 0.0462 732.8 180)">H1</text><text transform="matrix(0.1081 0 0.0462 0.0462 744.8 180)">H2</text><text transform="matrix(0.1081 0 0.0488 0.0462 756.8 180)">H3</text><text transform="matrix(0.1081 0 0.0515 0.0462 768.8 180)">H4</text><text transform="matrix(0.1081 0 0.0541 0.0462 780.8 180)">H5</text><text transform="matrix(0.1081 0 0.0568 0.0462 792.9 180)">H6</text><text transform="matrix(0.1081 0 0.0594 0.0462 804.9 180)">H7</text><text transform="matrix(0.1081 0 0.062 0.0462 816.9 180)">H8</text><text transform="matrix(0.1081 0 0.0647 0.0462 828.9 180)">H1</text><text transform="matrix(0.1081 0 0.0673 0.0462 840.9 180)">H2</text><text transform="matrix(0.106 0 -0.0672 0.0444 222.7 175.9)">G6</text><text transform="matrix(0.106 0 -0.0647 0.0444 234.5 175.9)">G7</text><text transform="matrix(0.106 0 -0.0622 0.0444 246.3 175.9)">G8</text><text transform="matrix(0.106 0 -0.0596 0.0444 258.1 175.9)">G1</text><text transform="matrix(0.106 0 -0.0571 0.0444 269.8 175.9)">G2</text><text transform="matrix(0.106 0 -0.0546 0.0444 281.6 175.9)">G3</text><text transform="matrix(0.106 0 -0.052 0.0444 293.4 175.9)">G4</text><text transform="matrix(0.106 0 -0.0495 0.0444 305.1 175.9)">G5</text><text transform="matrix(0.106 0 -0.0469 0.0444 316.9 175.9)">G6</text><text transform="matrix(0.106 0 -0.0444 0.0444 328.7 175.9)">G7</text><text transform="matrix(0.106 0 -0.0419 0.0444 340.5 175.9)">G8</text><text transform="matrix(0.106 0 -0.0393 0.0444 352.2 175.9)">G1</text><text transform="matrix(0.106 0 -0.0368 0.0444 364 175.9)">G2</text><text transform="matrix(0.106 0 -0.0343 0.0444 375.8 175.9)">G3</text><text transform="matrix(0.106 0 -0.0317 0.0444 387.6 175.9)">G4</text><text transform="matrix(0.106 0 -0.0292 0.0444 399.3 175.9)">G5</text><text transform="matrix(0.106 0 -0.0266 0.0444 411.1 175.9)">G6</text><text transform="matrix(0.106 0 -0.0241 0.0444 422.9 175.9)">G7</text><text transform="matrix(0.106 0 -0.0216 0.0444 434.6 175.9)">G8</text><text transform="matrix(0.106 0 -0.019 0.0444 446.4 175.9)">G1</text><text transform="matrix(0.106 0 -0.0165 0.0444 458.2 175.9)">G2</text><text transform="matrix(0.106 0 -0.014 0.0444 470 175.9)">G3</text><text transform="matrix(0.106 0 -0.0114 0.0444 481.7 175.9)">G4</text><text transform="matrix(0.106 0 -0.0089 0.0444 493.5 175.9)">G5</text><text transform="matrix(0.106 0 -0.0063 0.0444 505.3 175.9)">G6</text><text transform="matrix(0.106 0 -0.0038 0.0444 517 175.9)">G7</text><text transform="matrix(0.106 0 -0.0013 0.0444 528.8 175.9)">G8</text><text transform="matrix(0.106 0 0.0013 0.0444 540.6 175.9)">G1</text><text transform="matrix(0.106 0 0.0038 0.0444 552.4 175.9)">G2</text><text transform="matrix(0.106 0 0.0063 0.0444 564.1 175.9)">G3</text><text transform="matrix(0.106 0 0.0089 0.0444 575.9 175.9)">G4</text><text transform="matrix(0.106 0 0.0114 0.0444 587.7 175.9)">G5</text><text transform="matrix(0.106 0 0.014 0.0444 599.4 175.9)">G6</text><text transform="matrix(0.106 0 0.0165 0.0444 611.2 175.9)">G7</text><text transform="matrix(0.106 0 0.019 0.0444 623 175.9)">G8</text><text transform="matrix(0.106 0 0.0216 0.0444 634.8 175.9)">G1</text><text transform="matrix(0.106 0 0.0241 0.0444 646.5 175.9)">G2</text><text transform="matrix(0.106 0 0.0266 0.0444 658.3 175.9)">G3</text><text transform="matrix(0.106 0 0.0292 0.0444 670.1 175.9)">G4</text><text transform="matrix(0.106 0 0.0317 0.0444 681.8 175.9)">G5</text><text transform="matrix(0.106 0 0.0343 0.0444 693.6 175.9)">G6</text><text transform="matrix(0.106 0 0.0368 0.0444 705.4 175.9)">G7</text><text transform="matrix(0.106 0 0.0393 0.0444 717.2 175.9)">G8</text><text transform="matrix(0.106 0 0.0419 0.0444 728.9 175.9)">G1</text><text transform="matrix(0.106 0 0.0444 0.0444 740.7 175.9)">G2</text><text transform="matrix(0.106 0 0.0469 0.0444 752.5 175.9)">G3</text><text transform="matrix(0.106 0 0.0495 0.0444 764.3 175.9)">G4</text><text transform="matrix(0.106 0 0.052 0.0444 776 175.9)">G5</text><text transform="matrix(0.106 0 0.0546 0.0444 787.8 175.9)">G6</text><text transform="matrix(0.106 0 0.0571 0.0444 799.6 175.9)">G7</text><text transform="matrix(0.106 0 0.0596 0.0444 811.3 175.9)">G8</text><text transform="matrix(0.106 0 0.0622 0.0444 823.1 175.9)">G1</text><text transform="matrix(0.106 0 0.0647 0.0444 834.9 175.9)">G2</text><text transform="matrix(0.106 0 0.0672 0.0444 846.7 175.9)">G3</text><text transform="matrix(0.1039 0 -0.0671 0.0427 217.2 171.9)">F5</text><text transform="matrix(0.1039 0 -0.0647 0.0427 228.7 171.9)">F6</text><text transform="matrix(0.1039 0 -0.0622 0.0427 240.3 171.9)">F7</text><text transform="matrix(0.1039 0 -0.0598 0.0427 251.8 171.9)">F8</text><text transform="matrix(0.1039 0 -0.0574 0.0427 263.4 171.9)">F1</text><text transform="matrix(0.1039 0 -0.0549 0.0427 274.9 171.9)">F2</text><text transform="matrix(0.1039 0 -0.0525 0.0427 286.5 171.9)">F3</text><text transform="matrix(0.1039 0 -0.05 0.0427 298 171.9)">F4</text><text transform="matrix(0.1039 0 -0.0476 0.0427 309.6 171.9)">F5</text><text transform="matrix(0.1039 0 -0.0452 0.0427 321.1 171.9)">F6</text><text transform="matrix(0.1039 0 -0.0427 0.0427 332.7 171.9)">F7</text><text transform="matrix(0.1039 0 -0.0403 0.0427 344.2 171.9)">F8</text><text transform="matrix(0.1039 0 -0.0378 0.0427 355.7 171.9)">F1</text><text transform="matrix(0.1039 0 -0.0354 0.0427 367.3 171.9)">F2</text><text transform="matrix(0.1039 0 -0.033 0.0427 378.8 171.9)">F3</text><text transform="matrix(0.1039 0 -0.0305 0.0427 390.4 171.9)">F4</text><text transform="matrix(0.1039 0 -0.0281 0.0427 401.9 171.9)">F5</text><text transform="matrix(0.1039 0 -0.0256 0.0427 413.5 171.9)">F6</text><text transform="matrix(0.1039 0 -0.0232 0.0427 425 171.9)">F7</text><text transform="matrix(0.1039 0 -0.0207 0.0427 436.6 171.9)">F8</text><text transform="matrix(0.1039 0 -0.0183 0.0427 448.1 171.9)">F1</text><text transform="matrix(0.1039 0 -0.0159 0.0427 459.7 171.9)">F2</text><text transform="matrix(0.1039 0 -0.0134 0.0427 471.2 171.9)">F3</text><text transform="matrix(0.1039 0 -0.011 0.0427 482.7 171.9)">F4</text><text transform="matrix(0.1039 0 -0.0085 0.0427 494.3 171.9)">F5</text><text transform="matrix(0.1039 0 -0.0061 0.0427 505.8 171.9)">F6</text><text transform="matrix(0.1039 0 -0.0037 0.0427 517.4 171.9)">F7</text><text transform="matrix(0.1039 0 -0.0012 0.0427 528.9 171.9)">F8</text><text transform="matrix(0.1039 0 0.0012 0.0427 540.5 171.9)">F1</text><text transform="matrix(0.1039 0 0.0037 0.0427 552 171.9)">F2</text><text transform="matrix(0.1039 0 0.0061 0.0427 563.6 171.9)">F3</text><text transform="matrix(0.1039 0 0.0085 0.0427 575.1 171.9)">F4</text><text transform="matrix(0.1039 0 0.011 0.0427 586.7 171.9)">F5</text><text transform="matrix(0.1039 0 0.0134 0.0427 598.2 171.9)">F6</text><text transform="matrix(0.1039 0 0.0159 0.0427 609.7 171.9)">F7</text><text transform="matrix(0.1039 0 0.0183 0.0427 621.3 171.9)">F8</text><text transform="matrix(0.1039 0 0.0207 0.0427 632.8 171.9)">F1</text><text transform="matrix(0.1039 0 0.0232 0.0427 644.4 171.9)">F2</text><text transform="matrix(0.1039 0 0.0256 0.0427 655.9 171.9)">F3</text><text transform="matrix(0.1039 0 0.0281 0.0427 667.5 171.9)">F4</text><text transform="matrix(0.1039 0 0.0305 0.0427 679 171.9)">F5</text><text transform="matrix(0.1039 0 0.033 0.0427 690.6 171.9)">F6</text><text transform="matrix(0.1039 0 0.0354 0.0427 702.1 171.9)">F7</text><text transform="matrix(0.1039 0 0.0378 0.0427 713.7 171.9)">F8</text><text transform="matrix(0.1039 0 0.0403 0.0427 725.2 171.9)">F1</text><text transform="matrix(0.1039 0 0.0427 0.0427 736.7 171.9)">F2</text><text transform="matrix(0.1039 0 0.0452 0.0427 748.3 171.9)">F3</text><text transform="matrix(0.1039 0 0.0476 0.0427 759.8 171.9)">F4</text><text transform="matrix(0.1039 0 0.05 0.0427 771.4 171.9)">F5</text><text transform="matrix(0.1039 0 0.0525 0.0427 782.9 171.9)">F6</text><text transform="matrix(0.1039 0 0.0549 0.0427 794.5 171.9)">F7</text><text transform="matrix(0.1039 0 0.0574 0.0427 806 171.9)">F8</text><text transform="matrix(0.1039 0 0.0598 0.0427 817.6 171.9)">F1</text><text transform="matrix(0.1039 0 0.0622 0.0427 829.1 171.9)">F2</text><text transform="matrix(0.1039 0 0.0647 0.0427 840.7 171.9)">F3</text><text transform="matrix(0.102 0 -0.0646 0.0411 223.2 168.1)">E5</text><text transform="matrix(0.102 0 -0.0623 0.0411 234.5 168.1)">E6</text><text transform="matrix(0.102 0 -0.0599 0.0411 245.8 168.1)">E7</text><text transform="matrix(0.102 0 -0.0576 0.0411 257.2 168.1)">E8</text><text transform="matrix(0.102 0 -0.0552 0.0411 268.5 168.1)">E1</text><text transform="matrix(0.102 0 -0.0529 0.0411 279.8 168.1)">E2</text><text transform="matrix(0.102 0 -0.0505 0.0411 291.1 168.1)">E3</text><text transform="matrix(0.102 0 -0.0482 0.0411 302.5 168.1)">E4</text><text transform="matrix(0.102 0 -0.0458 0.0411 313.8 168.1)">E5</text><text transform="matrix(0.102 0 -0.0435 0.0411 325.1 168.1)">E6</text><text transform="matrix(0.102 0 -0.0411 0.0411 336.5 168.1)">E7</text><text transform="matrix(0.102 0 -0.0388 0.0411 347.8 168.1)">E8</text><text transform="matrix(0.102 0 -0.0364 0.0411 359.1 168.1)">E1</text><text transform="matrix(0.102 0 -0.0341 0.0411 370.4 168.1)">E2</text><text transform="matrix(0.102 0 -0.0317 0.0411 381.8 168.1)">E3</text><text transform="matrix(0.102 0 -0.0294 0.0411 393.1 168.1)">E4</text><text transform="matrix(0.102 0 -0.027 0.0411 404.4 168.1)">E5</text><text transform="matrix(0.102 0 -0.0247 0.0411 415.8 168.1)">E6</text><text transform="matrix(0.102 0 -0.0223 0.0411 427.1 168.1)">E7</text><text transform="matrix(0.102 0 -0.02 0.0411 438.4 168.1)">E8</text><text transform="matrix(0.102 0 -0.0176 0.0411 449.7 168.1)">E1</text><text transform="matrix(0.102 0 -0.0153 0.0411 461.1 168.1)">E2</text><text transform="matrix(0.102 0 -0.0129 0.0411 472.4 168.1)">E3</text><text transform="matrix(0.102 0 -0.0106 0.0411 483.7 168.1)">E4</text><text transform="matrix(0.102 0 -0.0082 0.0411 495.1 168.1)">E5</text><text transform="matrix(0.102 0 -0.0059 0.0411 506.4 168.1)">E6</text><text transform="matrix(0.102 0 -0.0035 0.0411 517.7 168.1)">E7</text><text transform="matrix(0.102 0 -0.0012 0.0411 529 168.1)">E8</text><text transform="matrix(0.102 0 0.0012 0.0411 540.4 168.1)">E1</text><text transform="matrix(0.102 0 0.0035 0.0411 551.7 168.1)">E2</text><text transform="matrix(0.102 0 0.0059 0.0411 563 168.1)">E3</text><text transform="matrix(0.102 0 0.0082 0.0411 574.3 168.1)">E4</text><text transform="matrix(0.102 0 0.0106 0.0411 585.7 168.1)">E5</text><text transform="matrix(0.102 0 0.0129 0.0411 597 168.1)">E6</text><text transform="matrix(0.102 0 0.0153 0.0411 608.3 168.1)">E7</text><text transform="matrix(0.102 0 0.0176 0.0411 619.7 168.1)">E8</text><text transform="matrix(0.102 0 0.02 0.0411 631 168.1)">E1</text><text transform="matrix(0.102 0 0.0223 0.0411 642.3 168.1)">E2</text><text transform="matrix(0.102 0 0.0247 0.0411 653.6 168.1)">E3</text><text transform="matrix(0.102 0 0.027 0.0411 665 168.1)">E4</text><text transform="matrix(0.102 0 0.0294 0.0411 676.3 168.1)">E5</text><text transform="matrix(0.102 0 0.0317 0.0411 687.6 168.1)">E6</text><text transform="matrix(0.102 0 0.0341 0.0411 699 168.1)">E7</text><text transform="matrix(0.102 0 0.0364 0.0411 710.3 168.1)">E8</text><text transform="matrix(0.102 0 0.0388 0.0411 721.6 168.1)">E1</text><text transform="matrix(0.102 0 0.0411 0.0411 732.9 168.1)">E2</text><text transform="matrix(0.102 0 0.0435 0.0411 744.3 168.1)">E3</text><text transform="matrix(0.102 0 0.0458 0.0411 755.6 168.1)">E4</text><text transform="matrix(0.102 0 0.0482 0.0411 766.9 168.1)">E5</text><text transform="matrix(0.102 0 0.0505 0.0411 778.3 168.1)">E6</text><text transform="matrix(0.102 0 0.0529 0.0411 789.6 168.1)">E7</text><text transform="matrix(0.102 0 0.0552 0.0411 800.9 168.1)">E8</text><text transform="matrix(0.102 0 0.0576 0.0411 812.2 168.1)">E1</text><text transform="matrix(0.102 0 0.0599 0.0411 823.6 168.1)">E2</text><text transform="matrix(0.102 0 0.0623 0.0411 834.9 168.1)">E3</text><text transform="matrix(0.102 0 0.0646 0.0411 846.2 168.1)">E4</text><text transform="matrix(0.1001 0 -0.0645 0.0396 217.8 164.5)">D4</text><text transform="matrix(0.1001 0 -0.0622 0.0396 228.9 164.5)">D5</text><text transform="matrix(0.1001 0 -0.06 0.0396 240.1 164.5)">D6</text><text transform="matrix(0.1001 0 -0.0577 0.0396 251.2 164.5)">D7</text><text transform="matrix(0.1001 0 -0.0555 0.0396 262.3 164.5)">D8</text><text transform="matrix(0.1001 0 -0.0532 0.0396 273.4 164.5)">D1</text><text transform="matrix(0.1001 0 -0.0509 0.0396 284.5 164.5)">D2</text><text transform="matrix(0.1001 0 -0.0487 0.0396 295.7 164.5)">D3</text><text transform="matrix(0.1001 0 -0.0464 0.0396 306.8 164.5)">D4</text><text transform="matrix(0.1001 0 -0.0441 0.0396 317.9 164.5)">D5</text><text transform="matrix(0.1001 0 -0.0419 0.0396 329 164.5)">D6</text><text transform="matrix(0.1001 0 -0.0396 0.0396 340.1 164.5)">D7</text><text transform="matrix(0.1001 0 -0.0373 0.0396 351.2 164.5)">D8</text><text transform="matrix(0.1001 0 -0.0351 0.0396 362.4 164.5)">D1</text><text transform="matrix(0.1001 0 -0.0328 0.0396 373.5 164.5)">D2</text><text transform="matrix(0.1001 0 -0.0306 0.0396 384.6 164.5)">D3</text><text transform="matrix(0.1001 0 -0.0283 0.0396 395.7 164.5)">D4</text><text transform="matrix(0.1001 0 -0.026 0.0396 406.8 164.5)">D5</text><text transform="matrix(0.1001 0 -0.0238 0.0396 418 164.5)">D6</text><text transform="matrix(0.1001 0 -0.0215 0.0396 429.1 164.5)">D7</text><text transform="matrix(0.1001 0 -0.0192 0.0396 440.2 164.5)">D8</text><text transform="matrix(0.1001 0 -0.017 0.0396 451.3 164.5)">D1</text><text transform="matrix(0.1001 0 -0.0147 0.0396 462.4 164.5)">D2</text><text transform="matrix(0.1001 0 -0.0124 0.0396 473.5 164.5)">D3</text><text transform="matrix(0.1001 0 -0.0102 0.0396 484.7 164.5)">D4</text><text transform="matrix(0.1001 0 -0.0079 0.0396 495.8 164.5)">D5</text><text transform="matrix(0.1001 0 -0.0057 0.0396 506.9 164.5)">D6</text><text transform="matrix(0.1001 0 -0.0034 0.0396 518 164.5)">D7</text><text transform="matrix(0.1001 0 -0.0011 0.0396 529.1 164.5)">D8</text><text transform="matrix(0.1001 0 0.0011 0.0396 540.3 164.5)">D1</text><text transform="matrix(0.1001 0 0.0034 0.0396 551.4 164.5)">D2</text><text transform="matrix(0.1001 0 0.0057 0.0396 562.5 164.5)">D3</text><text transform="matrix(0.1001 0 0.0079 0.0396 573.6 164.5)">D4</text><text transform="matrix(0.1001 0 0.0102 0.0396 584.7 164.5)">D5</text><text transform="matrix(0.1001 0 0.0124 0.0396 595.9 164.5)">D6</text><text transform="matrix(0.1001 0 0.0147 0.0396 607 164.5)">D7</text><text transform="matrix(0.1001 0 0.017 0.0396 618.1 164.5)">D8</text><text transform="matrix(0.1001 0 0.0192 0.0396 629.2 164.5)">D1</text><text transform="matrix(0.1001 0 0.0215 0.0396 640.3 164.5)">D2</text><text transform="matrix(0.1001 0 0.0238 0.0396 651.4 164.5)">D3</text><text transform="matrix(0.1001 0 0.026 0.0396 662.6 164.5)">D4</text><text transform="matrix(0.1001 0 0.0283 0.0396 673.7 164.5)">D5</text><text transform="matrix(0.1001 0 0.0306 0.0396 684.8 164.5)">D6</text><text transform="matrix(0.1001 0 0.0328 0.0396 695.9 164.5)">D7</text><text transform="matrix(0.1001 0 0.0351 0.0396 707 164.5)">D8</text><text transform="matrix(0.1001 0 0.0373 0.0396 718.2 164.5)">D1</text><text transform="matrix(0.1001 0 0.0396 0.0396 729.3 164.5)">D2</text><text transform="matrix(0.1001 0 0.0419 0.0396 740.4 164.5)">D3</text><text transform="matrix(0.1001 0 0.0441 0.0396 751.5 164.5)">D4</text><text transform="matrix(0.1001 0 0.0464 0.0396 762.6 164.5)">D5</text><text transform="matrix(0.1001 0 0.0487 0.0396 773.7 164.5)">D6</text><text transform="matrix(0.1001 0 0.0509 0.0396 784.9 164.5)">D7</text><text transform="matrix(0.1001 0 0.0532 0.0396 796 164.5)">D8</text><text transform="matrix(0.1001 0 0.0555 0.0396 807.1 164.5)">D1</text><text transform="matrix(0.1001 0 0.0577 0.0396 818.2 164.5)">D2</text><text transform="matrix(0.1001 0 0.06 0.0396 829.3 164.5)">D3</text><text transform="matrix(0.1001 0 0.0622 0.0396 840.5 164.5)">D4</text><text transform="matrix(0.0983 0 -0.0622 0.0381 223.6 160.9)">C4</text><text transform="matrix(0.0983 0 -0.06 0.0381 234.5 160.9)">C5</text><text transform="matrix(0.0983 0 -0.0578 0.0381 245.4 160.9)">C6</text><text transform="matrix(0.0983 0 -0.0556 0.0381 256.3 160.9)">C7</text><text transform="matrix(0.0983 0 -0.0535 0.0381 267.3 160.9)">C8</text><text transform="matrix(0.0983 0 -0.0513 0.0381 278.2 160.9)">C1</text><text transform="matrix(0.0983 0 -0.0491 0.0381 289.1 160.9)">C2</text><text transform="matrix(0.0983 0 -0.0469 0.0381 300 160.9)">C3</text><text transform="matrix(0.0983 0 -0.0447 0.0381 310.9 160.9)">C4</text><text transform="matrix(0.0983 0 -0.0425 0.0381 321.8 160.9)">C5</text><text transform="matrix(0.0983 0 -0.0404 0.0381 332.7 160.9)">C6</text><text transform="matrix(0.0983 0 -0.0382 0.0381 343.7 160.9)">C7</text><text transform="matrix(0.0983 0 -0.036 0.0381 354.6 160.9)">C8</text><text transform="matrix(0.0983 0 -0.0338 0.0381 365.5 160.9)">C1</text><text transform="matrix(0.0983 0 -0.0316 0.0381 376.4 160.9)">C2</text><text transform="matrix(0.0983 0 -0.0295 0.0381 387.3 160.9)">C3</text><text transform="matrix(0.0983 0 -0.0273 0.0381 398.2 160.9)">C4</text><text transform="matrix(0.0983 0 -0.0251 0.0381 409.2 160.9)">C5</text><text transform="matrix(0.0983 0 -0.0229 0.0381 420.1 160.9)">C6</text><text transform="matrix(0.0983 0 -0.0207 0.0381 431 160.9)">C7</text><text transform="matrix(0.0983 0 -0.0185 0.0381 441.9 160.9)">C8</text><text transform="matrix(0.0983 0 -0.0164 0.0381 452.8 160.9)">C1</text><text transform="matrix(0.0983 0 -0.0142 0.0381 463.7 160.9)">C2</text><text transform="matrix(0.0983 0 -0.012 0.0381 474.7 160.9)">C3</text><text transform="matrix(0.0983 0 -0.0098 0.0381 485.6 160.9)">C4</text><text transform="matrix(0.0983 0 -0.0076 0.0381 496.5 160.9)">C5</text><text transform="matrix(0.0983 0 -0.0055 0.0381 507.4 160.9)">C6</text><text transform="matrix(0.0983 0 -0.0033 0.0381 518.3 160.9)">C7</text><text transform="matrix(0.0983 0 -0.0011 0.0381 529.2 160.9)">C8</text><text transform="matrix(0.0983 0 0.0011 0.0381 540.2 160.9)">C1</text><text transform="matrix(0.0983 0 0.0033 0.0381 551.1 160.9)">C2</text><text transform="matrix(0.0983 0 0.0055 0.0381 562 160.9)">C3</text><text transform="matrix(0.0983 0 0.0076 0.0381 572.9 160.9)">C4</text><text transform="matrix(0.0983 0 0.0098 0.0381 583.8 160.9)">C5</text><text transform="matrix(0.0983 0 0.012 0.0381 594.7 160.9)">C6</text><text transform="matrix(0.0983 0 0.0142 0.0381 605.7 160.9)">C7</text><text transform="matrix(0.0983 0 0.0164 0.0381 616.6 160.9)">C8</text><text transform="matrix(0.0983 0 0.0185 0.0381 627.5 160.9)">C1</text><text transform="matrix(0.0983 0 0.0207 0.0381 638.4 160.9)">C2</text><text transform="matrix(0.0983 0 0.0229 0.0381 649.3 160.9)">C3</text><text transform="matrix(0.0983 0 0.0251 0.0381 660.2 160.9)">C4</text><text transform="matrix(0.0983 0 0.0273 0.0381 671.2 160.9)">C5</text><text transform="matrix(0.0983 0 0.0295 0.0381 682.1 160.9)">C6</text><text transform="matrix(0.0983 0 0.0316 0.0381 693 160.9)">C7</text><text transform="matrix(0.0983 0 0.0338 0.0381 703.9 160.9)">C8</text><text transform="matrix(0.0983 0 0.036 0.0381 714.8 160.9)">C1</text><text transform="matrix(0.0983 0 0.0382 0.0381 725.7 160.9)">C2</text><text transform="matrix(0.0983 0 0.0404 0.0381 736.7 160.9)">C3</text><text transform="matrix(0.0983 0 0.0425 0.0381 747.6 160.9)">C4</text><text transform="matrix(0.0983 0 0.0447 0.0381 758.5 160.9)">C5</text><text transform="matrix(0.0983 0 0.0469 0.0381 769.4 160.9)">C6</text><text transform="matrix(0.0983 0 0.0491 0.0381 780.3 160.9)">C7</text><text transform="matrix(0.0983 0 0.0513 0.0381 791.2 160.9)">C8</text><text transform="matrix(0.0983 0 0.0535 0.0381 802.1 160.9)">C1</text><text transform="matrix(0.0983 0 0.0556 0.0381 813.1 160.9)">C2</text><text transform="matrix(0.0983 0 0.0578 0.0381 824 160.9)">C3</text><text transform="matrix(0.0983 0 0.06 0.0381 834.9 160.9)">C4</text><text transform="matrix(0.0983 0 0.0622 0.0381 845.8 160.9)">C5</text><text transform="matrix(0.0965 0 -0.0621 0.0368 218.4 157.5)">B3</text><text transform="matrix(0.0965 0 -0.06 0.0368 229.1 157.5)">B4</text><text transform="matrix(0.0965 0 -0.0579 0.0368 239.9 157.5)">B5</text><text transform="matrix(0.0965 0 -0.0558 0.0368 250.6 157.5)">B6</text><text transform="matrix(0.0965 0 -0.0537 0.0368 261.3 157.5)">B7</text><text transform="matrix(0.0965 0 -0.0516 0.0368 272 157.5)">B8</text><text transform="matrix(0.0965 0 -0.0495 0.0368 282.7 157.5)">B1</text><text transform="matrix(0.0965 0 -0.0474 0.0368 293.5 157.5)">B2</text><text transform="matrix(0.0965 0 -0.0453 0.0368 304.2 157.5)">B3</text><text transform="matrix(0.0965 0 -0.0431 0.0368 314.9 157.5)">B4</text><text transform="matrix(0.0965 0 -0.041 0.0368 325.6 157.5)">B5</text><text transform="matrix(0.0965 0 -0.0389 0.0368 336.4 157.5)">B6</text><text transform="matrix(0.0965 0 -0.0368 0.0368 347.1 157.5)">B7</text><text transform="matrix(0.0965 0 -0.0347 0.0368 357.8 157.5)">B8</text><text transform="matrix(0.0965 0 -0.0326 0.0368 368.5 157.5)">B1</text><text transform="matrix(0.0965 0 -0.0305 0.0368 379.2 157.5)">B2</text><text transform="matrix(0.0965 0 -0.0284 0.0368 390 157.5)">B3</text><text transform="matrix(0.0965 0 -0.0263 0.0368 400.7 157.5)">B4</text><text transform="matrix(0.0965 0 -0.0242 0.0368 411.4 157.5)">B5</text><text transform="matrix(0.0965 0 -0.0221 0.0368 422.1 157.5)">B6</text><text transform="matrix(0.0965 0 -0.02 0.0368 432.8 157.5)">B7</text><text transform="matrix(0.0965 0 -0.0179 0.0368 443.6 157.5)">B8</text><text transform="matrix(0.0965 0 -0.0158 0.0368 454.3 157.5)">B1</text><text transform="matrix(0.0965 0 -0.0137 0.0368 465 157.5)">B2</text><text transform="matrix(0.0965 0 -0.0116 0.0368 475.7 157.5)">B3</text><text transform="matrix(0.0965 0 -0.0095 0.0368 486.5 157.5)">B4</text><text transform="matrix(0.0965 0 -0.0074 0.0368 497.2 157.5)">B5</text><text transform="matrix(0.0965 0 -0.0053 0.0368 507.9 157.5)">B6</text><text transform="matrix(0.0965 0 -0.0032 0.0368 518.6 157.5)">B7</text><text transform="matrix(0.0965 0 -0.0011 0.0368 529.3 157.5)">B8</text><text transform="matrix(0.0965 0 0.0011 0.0368 540.1 157.5)">B1</text><text transform="matrix(0.0965 0 0.0032 0.0368 550.8 157.5)">B2</text><text transform="matrix(0.0965 0 0.0053 0.0368 561.5 157.5)">B3</text><text transform="matrix(0.0965 0 0.0074 0.0368 572.2 157.5)">B4</text><text transform="matrix(0.0965 0 0.0095 0.0368 582.9 157.5)">B5</text><text transform="matrix(0.0965 0 0.0116 0.0368 593.7 157.5)">B6</text><text transform="matrix(0.0965 0 0.0137 0.0368 604.4 157.5)">B7</text><text transform="matrix(0.0965 0 0.0158 0.0368 615.1 157.5)">B8</text><text transform="matrix(0.0965 0 0.0179 0.0368 625.8 157.5)">B1</text><text transform="matrix(0.0965 0 0.02 0.0368 636.6 157.5)">B2</text><text transform="matrix(0.0965 0 0.0221 0.0368 647.3 157.5)">B3</text><text transform="matrix(0.0965 0 0.0242 0.0368 658 157.5)">B4</text><text transform="matrix(0.0965 0 0.0263 0.0368 668.7 157.5)">B5</text><text transform="matrix(0.0965 0 0.0284 0.0368 679.4 157.5)">B6</text><text transform="matrix(0.0965 0 0.0305 0.0368 690.2 157.5)">B7</text><text transform="matrix(0.0965 0 0.0326 0.0368 700.9 157.5)">B8</text><text transform="matrix(0.0965 0 0.0347 0.0368 711.6 157.5)">B1</text><text transform="matrix(0.0965 0 0.0368 0.0368 722.3 157.5)">B2</text><text transform="matrix(0.0965 0 0.0389 0.0368 733 157.5)">B3</text><text transform="matrix(0.0965 0 0.041 0.0368 743.8 157.5)">B4</text><text transform="matrix(0.0965 0 0.0431 0.0368 754.5 157.5)">B5</text><text transform="matrix(0.0965 0 0.0453 0.0368 765.2 157.5)">B6</text><text transform="matrix(0.0965 0 0.0474 0.0368 775.9 157.5)">B7</text><text transform="matrix(0.0965 0 0.0495 0.0368 786.7 157.5)">B8</text><text transform="matrix(0.0965 0 0.0516 0.0368 797.4 157.5)">B1</text><text transform="matrix(0.0965 0 0.0537 0.0368 808.1 157.5)">B2</text><text transform="matrix(0.0965 0 0.0558 0.0368 818.8 157.5)">B3</text><text transform="matrix(0.0965 0 0.0579 0.0368 829.5 157.5)">B4</text><text transform="matrix(0.0965 0 0.06 0.0368 840.3 157.5)">B5</text><text transform="matrix(0.0948 0 -0.0599 0.0355 224 154.2)">A3</text><text transform="matrix(0.0948 0 -0.0579 0.0355 234.5 154.2)">A4</text><text transform="matrix(0.0948 0 -0.0559 0.0355 245 154.2)">A5</text><text transform="matrix(0.0948 0 -0.0538 0.0355 255.6 154.2)">A6</text><text transform="matrix(0.0948 0 -0.0518 0.0355 266.1 154.2)">A7</text><text transform="matrix(0.0948 0 -0.0498 0.0355 276.6 154.2)">A8</text><text transform="matrix(0.0948 0 -0.0477 0.0355 287.2 154.2)">A1</text><text transform="matrix(0.0948 0 -0.0457 0.0355 297.7 154.2)">A2</text><text transform="matrix(0.0948 0 -0.0437 0.0355 308.2 154.2)">A3</text><text transform="matrix(0.0948 0 -0.0416 0.0355 318.8 154.2)">A4</text><text transform="matrix(0.0948 0 -0.0396 0.0355 329.3 154.2)">A5</text><text transform="matrix(0.0948 0 -0.0376 0.0355 339.8 154.2)">A6</text><text transform="matrix(0.0948 0 -0.0356 0.0355 350.4 154.2)">A7</text><text transform="matrix(0.0948 0 -0.0335 0.0355 360.9 154.2)">A8</text><text transform="matrix(0.0948 0 -0.0315 0.0355 371.4 154.2)">A1</text><text transform="matrix(0.0948 0 -0.0295 0.0355 382 154.2)">A2</text><text transform="matrix(0.0948 0 -0.0274 0.0355 392.5 154.2)">A3</text><text transform="matrix(0.0948 0 -0.0254 0.0355 403 154.2)">A4</text><text transform="matrix(0.0948 0 -0.0234 0.0355 413.6 154.2)">A5</text><text transform="matrix(0.0948 0 -0.0213 0.0355 424.1 154.2)">A6</text><text transform="matrix(0.0948 0 -0.0193 0.0355 434.6 154.2)">A7</text><text transform="matrix(0.0948 0 -0.0173 0.0355 445.2 154.2)">A8</text><text transform="matrix(0.0948 0 -0.0152 0.0355 455.7 154.2)">A1</text><text transform="matrix(0.0948 0 -0.0132 0.0355 466.2 154.2)">A2</text><text transform="matrix(0.0948 0 -0.0112 0.0355 476.8 154.2)">A3</text><text transform="matrix(0.0948 0 -0.0091 0.0355 487.3 154.2)">A4</text><text transform="matrix(0.0948 0 -0.0071 0.0355 497.8 154.2)">A5</text><text transform="matrix(0.0948 0 -0.0051 0.0355 508.4 154.2)">A6</text><text transform="matrix(0.0948 0 -0.003 0.0355 518.9 154.2)">A7</text><text transform="matrix(0.0948 0 -0.001 0.0355 529.4 154.2)">A8</text><text transform="matrix(0.0948 0 0.001 0.0355 540 154.2)">A1</text><text transform="matrix(0.0948 0 0.003 0.0355 550.5 154.2)">A2</text><text transform="matrix(0.0948 0 0.0051 0.0355 561 154.2)">A3</text><text transform="matrix(0.0948 0 0.0071 0.0355 571.6 154.2)">A4</text><text transform="matrix(0.0948 0 0.0091 0.0355 582.1 154.2)">A5</text><text transform="matrix(0.0948 0 0.0112 0.0355 592.6 154.2)">A6</text><text transform="matrix(0.0948 0 0.0132 0.0355 603.2 154.2)">A7</text><text transform="matrix(0.0948 0 0.0152 0.0355 613.7 154.2)">A8</text><text transform="matrix(0.0948 0 0.0173 0.0355 624.2 154.2)">A1</text><text transform="matrix(0.0948 0 0.0193 0.0355 634.8 154.2)">A2</text><text transform="matrix(0.0948 0 0.0213 0.0355 645.3 154.2)">A3</text><text transform="matrix(0.0948 0 0.0234 0.0355 655.8 154.2)">A4</text><text transform="matrix(0.0948 0 0.0254 0.0355 666.4 154.2)">A5</text><text transform="matrix(0.0948 0 0.0274 0.0355 676.9 154.2)">A6</text><text transform="matrix(0.0948 0 0.0295 0.0355 687.4 154.2)">A7</text><text transform="matrix(0.0948 0 0.0315 0.0355 698 154.2)">A8</text><text transform="matrix(0.0948 0 0.0335 0.0355 708.5 154.2)">A1</text><text transform="matrix(0.0948 0 0.0356 0.0355 719 154.2)">A2</text><text transform="matrix(0.0948 0 0.0376 0.0355 729.6 154.2)">A3</text><text transform="matrix(0.0948 0 0.0396 0.0355 740.1 154.2)">A4</text><text transform="matrix(0.0948 0 0.0416 0.0355 750.6 154.2)">A5</text><text transform="matrix(0.0948 0 0.0437 0.0355 761.2 154.2)">A6</text><text transform="matrix(0.0948 0 0.0457 0.0355 771.7 154.2)">A7</text><text transform="matrix(0.0948 0 0.0477 0.0355 782.2 154.2)">A8</text><text transform="matrix(0.0948 0 0.0498 0.0355 792.8 154.2)">A1</text><text transform="matrix(0.0948 0 0.0518 0.0355 803.3 154.2)">A2</text><text transform="matrix(0.0948 0 0.0538 0.0355 813.8 154.2)">A3</text><text transform="matrix(0.0948 0 0.0559 0.0355 824.4 154.2)">A4</text><text transform="matrix(0.0948 0 0.0579 0.0355 834.9 154.2)">A5</text><text transform="matrix(0.0948 0 0.0599 0.0355 845.4 154.2)">A6</text><text transform="matrix(0.0932 0 -0.0598 0.0343 219 151.1)">H2</text><text transform="matrix(0.0932 0 -0.0579 0.0343 229.3 151.1)">H3</text><text transform="matrix(0.0932 0 -0.0559 0.0343 239.7 151.1)">H4</text><text transform="matrix(0.0932 0 -0.054 0.0343 250 151.1)">H5</text><text transform="matrix(0.0932 0 -0.052 0.0343 260.4 151.1)">H6</text><text transform="matrix(0.0932 0 -0.05 0.0343 270.7 151.1)">H7</text><text transform="matrix(0.0932 0 -0.0481 0.0343 281.1 151.1)">H8</text><text transform="matrix(0.0932 0 -0.0461 0.0343 291.4 151.1)">H1</text><text transform="matrix(0.0932 0 -0.0442 0.0343 301.8 151.1)">H2</text><text transform="matrix(0.0932 0 -0.0422 0.0343 312.1 151.1)">H3</text><text transform="matrix(0.0932 0 -0.0402 0.0343 322.5 151.1)">H4</text><text transform="matrix(0.0932 0 -0.0383 0.0343 332.8 151.1)">H5</text><text transform="matrix(0.0932 0 -0.0363 0.0343 343.2 151.1)">H6</text><text transform="matrix(0.0932 0 -0.0343 0.0343 353.5 151.1)">H7</text><text transform="matrix(0.0932 0 -0.0324 0.0343 363.9 151.1)">H8</text><text transform="matrix(0.0932 0 -0.0304 0.0343 374.2 151.1)">H1</text><text transform="matrix(0.0932 0 -0.0285 0.0343 384.6 151.1)">H2</text><text transform="matrix(0.0932 0 -0.0265 0.0343 394.9 151.1)">H3</text><text transform="matrix(0.0932 0 -0.0245 0.0343 405.3 151.1)">H4</text><text transform="matrix(0.0932 0 -0.0226 0.0343 415.7 151.1)">H5</text><text transform="matrix(0.0932 0 -0.0206 0.0343 426 151.1)">H6</text><text transform="matrix(0.0932 0 -0.0186 0.0343 436.4 151.1)">H7</text><text transform="matrix(0.0932 0 -0.0167 0.0343 446.7 151.1)">H8</text><text transform="matrix(0.0932 0 -0.0147 0.0343 457.1 151.1)">H1</text><text transform="matrix(0.0932 0 -0.0128 0.0343 467.4 151.1)">H2</text><text transform="matrix(0.0932 0 -0.0108 0.0343 477.8 151.1)">H3</text><text transform="matrix(0.0932 0 -0.0088 0.0343 488.1 151.1)">H4</text><text transform="matrix(0.0932 0 -0.0069 0.0343 498.5 151.1)">H5</text><text transform="matrix(0.0932 0 -0.0049 0.0343 508.8 151.1)">H6</text><text transform="matrix(0.0932 0 -0.0029 0.0343 519.2 151.1)">H7</text><text transform="matrix(0.0932 0 -0.001 0.0343 529.5 151.1)">H8</text><text transform="matrix(0.0932 0 0.001 0.0343 539.9 151.1)">H1</text><text transform="matrix(0.0932 0 0.0029 0.0343 550.2 151.1)">H2</text><text transform="matrix(0.0932 0 0.0049 0.0343 560.6 151.1)">H3</text><text transform="matrix(0.0932 0 0.0069 0.0343 570.9 151.1)">H4</text><text transform="matrix(0.0932 0 0.0088 0.0343 581.3 151.1)">H5</text><text transform="matrix(0.0932 0 0.0108 0.0343 591.6 151.1)">H6</text><text transform="matrix(0.0932 0 0.0128 0.0343 602 151.1)">H7</text><text transform="matrix(0.0932 0 0.0147 0.0343 612.3 151.1)">H8</text><text transform="matrix(0.0932 0 0.0167 0.0343 622.7 151.1)">H1</text><text transform="matrix(0.0932 0 0.0186 0.0343 633 151.1)">H2</text><text transform="matrix(0.0932 0 0.0206 0.0343 643.4 151.1)">H3</text><text transform="matrix(0.0932 0 0.0226 0.0343 653.7 151.1)">H4</text><text transform="matrix(0.0932 0 0.0245 0.0343 664.1 151.1)">H5</text><text transform="matrix(0.0932 0 0.0265 0.0343 674.5 151.1)">H6</text><text transform="matrix(0.0932 0 0.0285 0.0343 684.8 151.1)">H7</text><text transform="matrix(0.0932 0 0.0304 0.0343 695.2 151.1)">H8</text><text transform="matrix(0.0932 0 0.0324 0.0343 705.5 151.1)">H1</text><text transform="matrix(0.0932 0 0.0343 0.0343 715.9 151.1)">H2</text><text transform="matrix(0.0932 0 0.0363 0.0343 726.2 151.1)">H3</text><text transform="matrix(0.0932 0 0.0383 0.0343 736.6 151.1)">H4</text><text transform="matrix(0.0932 0 0.0402 0.0343 746.9 151.1)">H5</text><text transform="matrix(0.0932 0 0.0422 0.0343 757.3 151.1)">H6</text><text transform="matrix(0.0932 0 0.0442 0.0343 767.6 151.1)">H7</text><text transform="matrix(0.0932 0 0.0461 0.0343 778 151.1)">H8</text><text transform="matrix(0.0932 0 0.0481 0.0343 788.3 151.1)">H1</text><text transform="matrix(0.0932 0 0.05 0.0343 798.7 151.1)">H2</text><text transform="matrix(0.0932 0 0.052 0.0343 809 151.1)">H3</text><text transform="matrix(0.0932 0 0.054 0.0343 819.4 151.1)">H4</text><text transform="matrix(0.0932 0 0.0559 0.0343 829.7 151.1)">H5</text><text transform="matrix(0.0932 0 0.0579 0.0343 840.1 151.1)">H6</text><text transform="matrix(0.0916 0 -0.0578 0.0332 224.3 148)">G2</text><text transform="matrix(0.0916 0 -0.0559 0.0332 234.5 148)">G3</text><text transform="matrix(0.0916 0 -0.054 0.0332 244.7 148)">G4</text><text transform="matrix(0.0916 0 -0.0521 0.0332 254.8 148)">G5</text><text transform="matrix(0.0916 0 -0.0503 0.0332 265 148)">G6</text><text transform="matrix(0.0916 0 -0.0484 0.0332 275.2 148)">G7</text><text transform="matrix(0.0916 0 -0.0465 0.0332 285.4 148)">G8</text><text transform="matrix(0.0916 0 -0.0446 0.0332 295.5 148)">G1</text><text transform="matrix(0.0916 0 -0.0427 0.0332 305.7 148)">G2</text><text transform="matrix(0.0916 0 -0.0408 0.0332 315.9 148)">G3</text><text transform="matrix(0.0916 0 -0.0389 0.0332 326.1 148)">G4</text><text transform="matrix(0.0916 0 -0.037 0.0332 336.3 148)">G5</text><text transform="matrix(0.0916 0 -0.0351 0.0332 346.4 148)">G6</text><text transform="matrix(0.0916 0 -0.0332 0.0332 356.6 148)">G7</text><text transform="matrix(0.0916 0 -0.0313 0.0332 366.8 148)">G8</text><text transform="matrix(0.0916 0 -0.0294 0.0332 377 148)">G1</text><text transform="matrix(0.0916 0 -0.0275 0.0332 387.1 148)">G2</text><text transform="matrix(0.0916 0 -0.0256 0.0332 397.3 148)">G3</text><text transform="matrix(0.0916 0 -0.0237 0.0332 407.5 148)">G4</text><text transform="matrix(0.0916 0 -0.0218 0.0332 417.7 148)">G5</text><text transform="matrix(0.0916 0 -0.0199 0.0332 427.8 148)">G6</text><text transform="matrix(0.0916 0 -0.018 0.0332 438 148)">G7</text><text transform="matrix(0.0916 0 -0.0161 0.0332 448.2 148)">G8</text><text transform="matrix(0.0916 0 -0.0142 0.0332 458.4 148)">G1</text><text transform="matrix(0.0916 0 -0.0123 0.0332 468.6 148)">G2</text><text transform="matrix(0.0916 0 -0.0104 0.0332 478.7 148)">G3</text><text transform="matrix(0.0916 0 -0.0085 0.0332 488.9 148)">G4</text><text transform="matrix(0.0916 0 -0.0066 0.0332 499.1 148)">G5</text><text transform="matrix(0.0916 0 -0.0047 0.0332 509.3 148)">G6</text><text transform="matrix(0.0916 0 -0.0028 0.0332 519.4 148)">G7</text><text transform="matrix(0.0916 0 -0.0009 0.0332 529.6 148)">G8</text><text transform="matrix(0.0916 0 0.0009 0.0332 539.8 148)">G1</text><text transform="matrix(0.0916 0 0.0028 0.0332 550 148)">G2</text><text transform="matrix(0.0916 0 0.0047 0.0332 560.1 148)">G3</text><text transform="matrix(0.0916 0 0.0066 0.0332 570.3 148)">G4</text><text transform="matrix(0.0916 0 0.0085 0.0332 580.5 148)">G5</text><text transform="matrix(0.0916 0 0.0104 0.0332 590.7 148)">G6</text><text transform="matrix(0.0916 0 0.0123 0.0332 600.8 148)">G7</text><text transform="matrix(0.0916 0 0.0142 0.0332 611 148)">G8</text><text transform="matrix(0.0916 0 0.0161 0.0332 621.2 148)">G1</text><text transform="matrix(0.0916 0 0.018 0.0332 631.4 148)">G2</text><text transform="matrix(0.0916 0 0.0199 0.0332 641.6 148)">G3</text><text transform="matrix(0.0916 0 0.0218 0.0332 651.7 148)">G4</text><text transform="matrix(0.0916 0 0.0237 0.0332 661.9 148)">G5</text><text transform="matrix(0.0916 0 0.0256 0.0332 672.1 148)">G6</text><text transform="matrix(0.0916 0 0.0275 0.0332 682.3 148)">G7</text><text transform="matrix(0.0916 0 0.0294 0.0332 692.4 148)">G8</text><text transform="matrix(0.0916 0 0.0313 0.0332 702.6 148)">G1</text><text transform="matrix(0.0916 0 0.0332 0.0332 712.8 148)">G2</text><text transform="matrix(0.0916 0 0.0351 0.0332 723 148)">G3</text><text transform="matrix(0.0916 0 0.037 0.0332 733.1 148)">G4</text><text transform="matrix(0.0916 0 0.0389 0.0332 743.3 148)">G5</text><text transform="matrix(0.0916 0 0.0408 0.0332 753.5 148)">G6</text><text transform="matrix(0.0916 0 0.0427 0.0332 763.7 148)">G7</text><text transform="matrix(0.0916 0 0.0446 0.0332 773.9 148)">G8</text><text transform="matrix(0.0916 0 0.0465 0.0332 784 148)">G1</text><text transform="matrix(0.0916 0 0.0484 0.0332 794.2 148)">G2</text><text transform="matrix(0.0916 0 0.0503 0.0332 804.4 148)">G3</text><text transform="matrix(0.0916 0 0.0521 0.0332 814.6 148)">G4</text><text transform="matrix(0.0916 0 0.054 0.0332 824.7 148)">G5</text><text transform="matrix(0.0916 0 0.0559 0.0332 834.9 148)">G6</text><text transform="matrix(0.0916 0 0.0578 0.0332 845.1 148)">G7</text><text transform="matrix(0.0901 0 -0.0578 0.0321 219.5 145)">F1</text><text transform="matrix(0.0901 0 -0.0559 0.0321 229.5 145)">F2</text><text transform="matrix(0.0901 0 -0.0541 0.0321 239.5 145)">F3</text><text transform="matrix(0.0901 0 -0.0523 0.0321 249.5 145)">F4</text><text transform="matrix(0.0901 0 -0.0504 0.0321 259.5 145)">F5</text><text transform="matrix(0.0901 0 -0.0486 0.0321 269.5 145)">F6</text><text transform="matrix(0.0901 0 -0.0468 0.0321 279.5 145)">F7</text><text transform="matrix(0.0901 0 -0.0449 0.0321 289.5 145)">F8</text><text transform="matrix(0.0901 0 -0.0431 0.0321 299.5 145)">F1</text><text transform="matrix(0.0901 0 -0.0413 0.0321 309.5 145)">F2</text><text transform="matrix(0.0901 0 -0.0394 0.0321 319.5 145)">F3</text><text transform="matrix(0.0901 0 -0.0376 0.0321 329.6 145)">F4</text><text transform="matrix(0.0901 0 -0.0358 0.0321 339.6 145)">F5</text><text transform="matrix(0.0901 0 -0.0339 0.0321 349.6 145)">F6</text><text transform="matrix(0.0901 0 -0.0321 0.0321 359.6 145)">F7</text><text transform="matrix(0.0901 0 -0.0303 0.0321 369.6 145)">F8</text><text transform="matrix(0.0901 0 -0.0284 0.0321 379.6 145)">F1</text><text transform="matrix(0.0901 0 -0.0266 0.0321 389.6 145)">F2</text><text transform="matrix(0.0901 0 -0.0248 0.0321 399.6 145)">F3</text><text transform="matrix(0.0901 0 -0.0229 0.0321 409.6 145)">F4</text><text transform="matrix(0.0901 0 -0.0211 0.0321 419.6 145)">F5</text><text transform="matrix(0.0901 0 -0.0193 0.0321 429.6 145)">F6</text><text transform="matrix(0.0901 0 -0.0174 0.0321 439.6 145)">F7</text><text transform="matrix(0.0901 0 -0.0156 0.0321 449.6 145)">F8</text><text transform="matrix(0.0901 0 -0.0138 0.0321 459.6 145)">F1</text><text transform="matrix(0.0901 0 -0.0119 0.0321 469.7 145)">F2</text><text transform="matrix(0.0901 0 -0.0101 0.0321 479.7 145)">F3</text><text transform="matrix(0.0901 0 -0.0083 0.0321 489.7 145)">F4</text><text transform="matrix(0.0901 0 -0.0064 0.0321 499.7 145)">F5</text><text transform="matrix(0.0901 0 -0.0046 0.0321 509.7 145)">F6</text><text transform="matrix(0.0901 0 -0.0028 0.0321 519.7 145)">F7</text><text transform="matrix(0.0901 0 -0.0009 0.0321 529.7 145)">F8</text><text transform="matrix(0.0901 0 0.0009 0.0321 539.7 145)">F1</text><text transform="matrix(0.0901 0 0.0028 0.0321 549.7 145)">F2</text><text transform="matrix(0.0901 0 0.0046 0.0321 559.7 145)">F3</text><text transform="matrix(0.0901 0 0.0064 0.0321 569.7 145)">F4</text><text transform="matrix(0.0901 0 0.0083 0.0321 579.7 145)">F5</text><text transform="matrix(0.0901 0 0.0101 0.0321 589.7 145)">F6</text><text transform="matrix(0.0901 0 0.0119 0.0321 599.7 145)">F7</text><text transform="matrix(0.0901 0 0.0138 0.0321 609.8 145)">F8</text><text transform="matrix(0.0901 0 0.0156 0.0321 619.8 145)">F1</text><text transform="matrix(0.0901 0 0.0174 0.0321 629.8 145)">F2</text><text transform="matrix(0.0901 0 0.0193 0.0321 639.8 145)">F3</text><text transform="matrix(0.0901 0 0.0211 0.0321 649.8 145)">F4</text><text transform="matrix(0.0901 0 0.0229 0.0321 659.8 145)">F5</text><text transform="matrix(0.0901 0 0.0248 0.0321 669.8 145)">F6</text><text transform="matrix(0.0901 0 0.0266 0.0321 679.8 145)">F7</text><text transform="matrix(0.0901 0 0.0284 0.0321 689.8 145)">F8</text><text transform="matrix(0.0901 0 0.0303 0.0321 699.8 145)">F1</text><text transform="matrix(0.0901 0 0.0321 0.0321 709.8 145)">F2</text><text transform="matrix(0.0901 0 0.0339 0.0321 719.8 145)">F3</text><text transform="matrix(0.0901 0 0.0358 0.0321 729.8 145)">F4</text><text transform="matrix(0.0901 0 0.0376 0.0321 739.8 145)">F5</text><text transform="matrix(0.0901 0 0.0394 0.0321 749.9 145)">F6</text><text transform="matrix(0.0901 0 0.0413 0.0321 759.9 145)">F7</text><text transform="matrix(0.0901 0 0.0431 0.0321 769.9 145)">F8</text><text transform="matrix(0.0901 0 0.0449 0.0321 779.9 145)">F1</text><text transform="matrix(0.0901 0 0.0468 0.0321 789.9 145)">F2</text><text transform="matrix(0.0901 0 0.0486 0.0321 799.9 145)">F3</text><text transform="matrix(0.0901 0 0.0504 0.0321 809.9 145)">F4</text><text transform="matrix(0.0901 0 0.0523 0.0321 819.9 145)">F5</text><text transform="matrix(0.0901 0 0.0541 0.0321 829.9 145)">F6</text><text transform="matrix(0.0901 0 0.0559 0.0321 839.9 145)">F7</text><text transform="matrix(0.0886 0 -0.0559 0.031 224.6 142.2)">E1</text><text transform="matrix(0.0886 0 -0.0541 0.031 234.5 142.2)">E2</text><text transform="matrix(0.0886 0 -0.0523 0.031 244.3 142.2)">E3</text><text transform="matrix(0.0886 0 -0.0506 0.031 254.2 142.2)">E4</text><text transform="matrix(0.0886 0 -0.0488 0.031 264 142.2)">E5</text><text transform="matrix(0.0886 0 -0.047 0.031 273.9 142.2)">E6</text><text transform="matrix(0.0886 0 -0.0452 0.031 283.7 142.2)">E7</text><text transform="matrix(0.0886 0 -0.0435 0.031 293.5 142.2)">E8</text><text transform="matrix(0.0886 0 -0.0417 0.031 303.4 142.2)">E1</text><text transform="matrix(0.0886 0 -0.0399 0.031 313.2 142.2)">E2</text><text transform="matrix(0.0886 0 -0.0381 0.031 323.1 142.2)">E3</text><text transform="matrix(0.0886 0 -0.0364 0.031 332.9 142.2)">E4</text><text transform="matrix(0.0886 0 -0.0346 0.031 342.8 142.2)">E5</text><text transform="matrix(0.0886 0 -0.0328 0.031 352.6 142.2)">E6</text><text transform="matrix(0.0886 0 -0.031 0.031 362.4 142.2)">E7</text><text transform="matrix(0.0886 0 -0.0293 0.031 372.3 142.2)">E8</text><text transform="matrix(0.0886 0 -0.0275 0.031 382.1 142.2)">E1</text><text transform="matrix(0.0886 0 -0.0257 0.031 392 142.2)">E2</text><text transform="matrix(0.0886 0 -0.0239 0.031 401.8 142.2)">E3</text><text transform="matrix(0.0886 0 -0.0222 0.031 411.7 142.2)">E4</text><text transform="matrix(0.0886 0 -0.0204 0.031 421.5 142.2)">E5</text><text transform="matrix(0.0886 0 -0.0186 0.031 431.3 142.2)">E6</text><text transform="matrix(0.0886 0 -0.0169 0.031 441.2 142.2)">E7</text><text transform="matrix(0.0886 0 -0.0151 0.031 451 142.2)">E8</text><text transform="matrix(0.0886 0 -0.0133 0.031 460.9 142.2)">E1</text><text transform="matrix(0.0886 0 -0.0115 0.031 470.7 142.2)">E2</text><text transform="matrix(0.0886 0 -0.0098 0.031 480.6 142.2)">E3</text><text transform="matrix(0.0886 0 -0.008 0.031 490.4 142.2)">E4</text><text transform="matrix(0.0886 0 -0.0062 0.031 500.2 142.2)">E5</text><text transform="matrix(0.0886 0 -0.0044 0.031 510.1 142.2)">E6</text><text transform="matrix(0.0886 0 -0.0027 0.031 519.9 142.2)">E7</text><text transform="matrix(0.0886 0 -0.0009 0.031 529.8 142.2)">E8</text><text transform="matrix(0.0886 0 0.0009 0.031 539.6 142.2)">E1</text><text transform="matrix(0.0886 0 0.0027 0.031 549.5 142.2)">E2</text><text transform="matrix(0.0886 0 0.0044 0.031 559.3 142.2)">E3</text><text transform="matrix(0.0886 0 0.0062 0.031 569.2 142.2)">E4</text><text transform="matrix(0.0886 0 0.008 0.031 579 142.2)">E5</text><text transform="matrix(0.0886 0 0.0098 0.031 588.8 142.2)">E6</text><text transform="matrix(0.0886 0 0.0115 0.031 598.7 142.2)">E7</text><text transform="matrix(0.0886 0 0.0133 0.031 608.5 142.2)">E8</text><text transform="matrix(0.0886 0 0.0151 0.031 618.4 142.2)">E1</text><text transform="matrix(0.0886 0 0.0169 0.031 628.2 142.2)">E2</text><text transform="matrix(0.0886 0 0.0186 0.031 638.1 142.2)">E3</text><text transform="matrix(0.0886 0 0.0204 0.031 647.9 142.2)">E4</text><text transform="matrix(0.0886 0 0.0222 0.031 657.7 142.2)">E5</text><text transform="matrix(0.0886 0 0.0239 0.031 667.6 142.2)">E6</text><text transform="matrix(0.0886 0 0.0257 0.031 677.4 142.2)">E7</text><text transform="matrix(0.0886 0 0.0275 0.031 687.3 142.2)">E8</text><text transform="matrix(0.0886 0 0.0293 0.031 697.1 142.2)">E1</text><text transform="matrix(0.0886 0 0.031 0.031 707 142.2)">E2</text><text transform="matrix(0.0886 0 0.0328 0.031 716.8 142.2)">E3</text><text transform="matrix(0.0886 0 0.0346 0.031 726.6 142.2)">E4</text><text transform="matrix(0.0886 0 0.0364 0.031 736.5 142.2)">E5</text><text transform="matrix(0.0886 0 0.0381 0.031 746.3 142.2)">E6</text><text transform="matrix(0.0886 0 0.0399 0.031 756.2 142.2)">E7</text><text transform="matrix(0.0886 0 0.0417 0.031 766 142.2)">E8</text><text transform="matrix(0.0886 0 0.0435 0.031 775.9 142.2)">E1</text><text transform="matrix(0.0886 0 0.0452 0.031 785.7 142.2)">E2</text><text transform="matrix(0.0886 0 0.047 0.031 795.5 142.2)">E3</text><text transform="matrix(0.0886 0 0.0488 0.031 805.4 142.2)">E4</text><text transform="matrix(0.0886 0 0.0506 0.031 815.2 142.2)">E5</text><text transform="matrix(0.0886 0 0.0523 0.031 825.1 142.2)">E6</text><text transform="matrix(0.0886 0 0.0541 0.031 834.9 142.2)">E7</text><text transform="matrix(0.0886 0 0.0559 0.031 844.8 142.2)">E8</text><text transform="matrix(0.0872 0 -0.0558 0.03 220 139.4)">D8</text><text transform="matrix(0.0872 0 -0.0541 0.03 229.6 139.4)">D1</text><text transform="matrix(0.0872 0 -0.0524 0.03 239.3 139.4)">D2</text><text transform="matrix(0.0872 0 -0.0507 0.03 249 139.4)">D3</text><text transform="matrix(0.0872 0 -0.0489 0.03 258.7 139.4)">D4</text><text transform="matrix(0.0872 0 -0.0472 0.03 268.4 139.4)">D5</text><text transform="matrix(0.0872 0 -0.0455 0.03 278.1 139.4)">D6</text><text transform="matrix(0.0872 0 -0.0438 0.03 287.7 139.4)">D7</text><text transform="matrix(0.0872 0 -0.0421 0.03 297.4 139.4)">D8</text><text transform="matrix(0.0872 0 -0.0404 0.03 307.1 139.4)">D1</text><text transform="matrix(0.0872 0 -0.0386 0.03 316.8 139.4)">D2</text><text transform="matrix(0.0872 0 -0.0369 0.03 326.5 139.4)">D3</text><text transform="matrix(0.0872 0 -0.0352 0.03 336.2 139.4)">D4</text><text transform="matrix(0.0872 0 -0.0335 0.03 345.9 139.4)">D5</text><text transform="matrix(0.0872 0 -0.0318 0.03 355.5 139.4)">D6</text><text transform="matrix(0.0872 0 -0.0301 0.03 365.2 139.4)">D7</text><text transform="matrix(0.0872 0 -0.0283 0.03 374.9 139.4)">D8</text><text transform="matrix(0.0872 0 -0.0266 0.03 384.6 139.4)">D1</text><text transform="matrix(0.0872 0 -0.0249 0.03 394.3 139.4)">D2</text><text transform="matrix(0.0872 0 -0.0232 0.03 404 139.4)">D3</text><text transform="matrix(0.0872 0 -0.0215 0.03 413.6 139.4)">D4</text><text transform="matrix(0.0872 0 -0.0197 0.03 423.3 139.4)">D5</text><text transform="matrix(0.0872 0 -0.018 0.03 433 139.4)">D6</text><text transform="matrix(0.0872 0 -0.0163 0.03 442.7 139.4)">D7</text><text transform="matrix(0.0872 0 -0.0146 0.03 452.4 139.4)">D8</text><text transform="matrix(0.0872 0 -0.0129 0.03 462.1 139.4)">D1</text><text transform="matrix(0.0872 0 -0.0112 0.03 471.8 139.4)">D2</text><text transform="matrix(0.0872 0 -0.0094 0.03 481.4 139.4)">D3</text><text transform="matrix(0.0872 0 -0.0077 0.03 491.1 139.4)">D4</text><text transform="matrix(0.0872 0 -0.006 0.03 500.8 139.4)">D5</text><text transform="matrix(0.0872 0 -0.0043 0.03 510.5 139.4)">D6</text><text transform="matrix(0.0872 0 -0.0026 0.03 520.2 139.4)">D7</text><text transform="matrix(0.0872 0 -0.0009 0.03 529.9 139.4)">D8</text><text transform="matrix(0.0872 0 0.0009 0.03 539.5 139.4)">D1</text><text transform="matrix(0.0872 0 0.0026 0.03 549.2 139.4)">D2</text><text transform="matrix(0.0872 0 0.0043 0.03 558.9 139.4)">D3</text><text transform="matrix(0.0872 0 0.006 0.03 568.6 139.4)">D4</text><text transform="matrix(0.0872 0 0.0077 0.03 578.3 139.4)">D5</text><text transform="matrix(0.0872 0 0.0094 0.03 588 139.4)">D6</text><text transform="matrix(0.0872 0 0.0112 0.03 597.6 139.4)">D7</text><text transform="matrix(0.0872 0 0.0129 0.03 607.3 139.4)">D8</text><text transform="matrix(0.0872 0 0.0146 0.03 617 139.4)">D1</text><text transform="matrix(0.0872 0 0.0163 0.03 626.7 139.4)">D2</text><text transform="matrix(0.0872 0 0.018 0.03 636.4 139.4)">D3</text><text transform="matrix(0.0872 0 0.0197 0.03 646.1 139.4)">D4</text><text transform="matrix(0.0872 0 0.0215 0.03 655.8 139.4)">D5</text><text transform="matrix(0.0872 0 0.0232 0.03 665.4 139.4)">D6</text><text transform="matrix(0.0872 0 0.0249 0.03 675.1 139.4)">D7</text><text transform="matrix(0.0872 0 0.0266 0.03 684.8 139.4)">D8</text><text transform="matrix(0.0872 0 0.0283 0.03 694.5 139.4)">D1</text><text transform="matrix(0.0872 0 0.0301 0.03 704.2 139.4)">D2</text><text transform="matrix(0.0872 0 0.0318 0.03 713.9 139.4)">D3</text><text transform="matrix(0.0872 0 0.0335 0.03 723.5 139.4)">D4</text><text transform="matrix(0.0872 0 0.0352 0.03 733.2 139.4)">D5</text><text transform="matrix(0.0872 0 0.0369 0.03 742.9 139.4)">D6</text><text transform="matrix(0.0872 0 0.0386 0.03 752.6 139.4)">D7</text><text transform="matrix(0.0872 0 0.0404 0.03 762.3 139.4)">D8</text><text transform="matrix(0.0872 0 0.0421 0.03 772 139.4)">D1</text><text transform="matrix(0.0872 0 0.0438 0.03 781.7 139.4)">D2</text><text transform="matrix(0.0872 0 0.0455 0.03 791.3 139.4)">D3</text><text transform="matrix(0.0872 0 0.0472 0.03 801 139.4)">D4</text><text transform="matrix(0.0872 0 0.0489 0.03 810.7 139.4)">D5</text><text transform="matrix(0.0872 0 0.0507 0.03 820.4 139.4)">D6</text><text transform="matrix(0.0872 0 0.0524 0.03 830.1 139.4)">D7</text><text transform="matrix(0.0872 0 0.0541 0.03 839.8 139.4)">D8</text><text transform="matrix(0.0858 0 -0.0541 0.0291 224.9 136.7)">C8</text><text transform="matrix(0.0858 0 -0.0524 0.0291 234.5 136.7)">C1</text><text transform="matrix(0.0858 0 -0.0507 0.0291 244 136.7)">C2</text><text transform="matrix(0.0858 0 -0.0491 0.0291 253.5 136.7)">C3</text><text transform="matrix(0.0858 0 -0.0474 0.0291 263.1 136.7)">C4</text><text transform="matrix(0.0858 0 -0.0457 0.0291 272.6 136.7)">C5</text><text transform="matrix(0.0858 0 -0.0441 0.0291 282.1 136.7)">C6</text><text transform="matrix(0.0858 0 -0.0424 0.0291 291.7 136.7)">C7</text><text transform="matrix(0.0858 0 -0.0408 0.0291 301.2 136.7)">C8</text><text transform="matrix(0.0858 0 -0.0391 0.0291 310.7 136.7)">C1</text><text transform="matrix(0.0858 0 -0.0374 0.0291 320.3 136.7)">C2</text><text transform="matrix(0.0858 0 -0.0358 0.0291 329.8 136.7)">C3</text><text transform="matrix(0.0858 0 -0.0341 0.0291 339.3 136.7)">C4</text><text transform="matrix(0.0858 0 -0.0324 0.0291 348.8 136.7)">C5</text><text transform="matrix(0.0858 0 -0.0308 0.0291 358.4 136.7)">C6</text><text transform="matrix(0.0858 0 -0.0291 0.0291 367.9 136.7)">C7</text><text transform="matrix(0.0858 0 -0.0274 0.0291 377.4 136.7)">C8</text><text transform="matrix(0.0858 0 -0.0258 0.0291 387 136.7)">C1</text><text transform="matrix(0.0858 0 -0.0241 0.0291 396.5 136.7)">C2</text><text transform="matrix(0.0858 0 -0.0225 0.0291 406 136.7)">C3</text><text transform="matrix(0.0858 0 -0.0208 0.0291 415.6 136.7)">C4</text><text transform="matrix(0.0858 0 -0.0191 0.0291 425.1 136.7)">C5</text><text transform="matrix(0.0858 0 -0.0175 0.0291 434.6 136.7)">C6</text><text transform="matrix(0.0858 0 -0.0158 0.0291 444.2 136.7)">C7</text><text transform="matrix(0.0858 0 -0.0141 0.0291 453.7 136.7)">C8</text><text transform="matrix(0.0858 0 -0.0125 0.0291 463.2 136.7)">C1</text><text transform="matrix(0.0858 0 -0.0108 0.0291 472.7 136.7)">C2</text><text transform="matrix(0.0858 0 -0.0091 0.0291 482.3 136.7)">C3</text><text transform="matrix(0.0858 0 -0.0075 0.0291 491.8 136.7)">C4</text><text transform="matrix(0.0858 0 -0.0058 0.0291 501.3 136.7)">C5</text><text transform="matrix(0.0858 0 -0.0042 0.0291 510.9 136.7)">C6</text><text transform="matrix(0.0858 0 -0.0025 0.0291 520.4 136.7)">C7</text><text transform="matrix(0.0858 0 -0.0008 0.0291 529.9 136.7)">C8</text><text transform="matrix(0.0858 0 0.0008 0.0291 539.5 136.7)">C1</text><text transform="matrix(0.0858 0 0.0025 0.0291 549 136.7)">C2</text><text transform="matrix(0.0858 0 0.0042 0.0291 558.5 136.7)">C3</text><text transform="matrix(0.0858 0 0.0058 0.0291 568.1 136.7)">C4</text><text transform="matrix(0.0858 0 0.0075 0.0291 577.6 136.7)">C5</text><text transform="matrix(0.0858 0 0.0091 0.0291 587.1 136.7)">C6</text><text transform="matrix(0.0858 0 0.0108 0.0291 596.7 136.7)">C7</text><text transform="matrix(0.0858 0 0.0125 0.0291 606.2 136.7)">C8</text><text transform="matrix(0.0858 0 0.0141 0.0291 615.7 136.7)">C1</text><text transform="matrix(0.0858 0 0.0158 0.0291 625.2 136.7)">C2</text><text transform="matrix(0.0858 0 0.0175 0.0291 634.8 136.7)">C3</text><text transform="matrix(0.0858 0 0.0191 0.0291 644.3 136.7)">C4</text><text transform="matrix(0.0858 0 0.0208 0.0291 653.8 136.7)">C5</text><text transform="matrix(0.0858 0 0.0225 0.0291 663.4 136.7)">C6</text><text transform="matrix(0.0858 0 0.0241 0.0291 672.9 136.7)">C7</text><text transform="matrix(0.0858 0 0.0258 0.0291 682.4 136.7)">C8</text><text transform="matrix(0.0858 0 0.0274 0.0291 692 136.7)">C1</text><text transform="matrix(0.0858 0 0.0291 0.0291 701.5 136.7)">C2</text><text transform="matrix(0.0858 0 0.0308 0.0291 711 136.7)">C3</text><text transform="matrix(0.0858 0 0.0324 0.0291 720.6 136.7)">C4</text><text transform="matrix(0.0858 0 0.0341 0.0291 730.1 136.7)">C5</text><text transform="matrix(0.0858 0 0.0358 0.0291 739.6 136.7)">C6</text><text transform="matrix(0.0858 0 0.0374 0.0291 749.1 136.7)">C7</text><text transform="matrix(0.0858 0 0.0391 0.0291 758.7 136.7)">C8</text><text transform="matrix(0.0858 0 0.0408 0.0291 768.2 136.7)">C1</text><text transform="matrix(0.0858 0 0.0424 0.0291 777.7 136.7)">C2</text><text transform="matrix(0.0858 0 0.0441 0.0291 787.3 136.7)">C3</text><text transform="matrix(0.0858 0 0.0457 0.0291 796.8 136.7)">C4</text><text transform="matrix(0.0858 0 0.0474 0.0291 806.3 136.7)">C5</text><text transform="matrix(0.0858 0 0.0491 0.0291 815.9 136.7)">C6</text><text transform="matrix(0.0858 0 0.0507 0.0291 825.4 136.7)">C7</text><text transform="matrix(0.0858 0 0.0524 0.0291 834.9 136.7)">C8</text><text transform="matrix(0.0858 0 0.0541 0.0291 844.5 136.7)">C1</text><text transform="matrix(0.0844 0 -0.054 0.0282 220.4 134.1)">B7</text><text transform="matrix(0.0844 0 -0.0524 0.0282 229.8 134.1)">B8</text><text transform="matrix(0.0844 0 -0.0508 0.0282 239.2 134.1)">B1</text><text transform="matrix(0.0844 0 -0.0492 0.0282 248.5 134.1)">B2</text><text transform="matrix(0.0844 0 -0.0475 0.0282 257.9 134.1)">B3</text><text transform="matrix(0.0844 0 -0.0459 0.0282 267.3 134.1)">B4</text><text transform="matrix(0.0844 0 -0.0443 0.0282 276.7 134.1)">B5</text><text transform="matrix(0.0844 0 -0.0427 0.0282 286.1 134.1)">B6</text><text transform="matrix(0.0844 0 -0.0411 0.0282 295.5 134.1)">B7</text><text transform="matrix(0.0844 0 -0.0395 0.0282 304.8 134.1)">B8</text><text transform="matrix(0.0844 0 -0.0379 0.0282 314.2 134.1)">B1</text><text transform="matrix(0.0844 0 -0.0363 0.0282 323.6 134.1)">B2</text><text transform="matrix(0.0844 0 -0.0347 0.0282 333 134.1)">B3</text><text transform="matrix(0.0844 0 -0.033 0.0282 342.4 134.1)">B4</text><text transform="matrix(0.0844 0 -0.0314 0.0282 351.8 134.1)">B5</text><text transform="matrix(0.0844 0 -0.0298 0.0282 361.1 134.1)">B6</text><text transform="matrix(0.0844 0 -0.0282 0.0282 370.5 134.1)">B7</text><text transform="matrix(0.0844 0 -0.0266 0.0282 379.9 134.1)">B8</text><text transform="matrix(0.0844 0 -0.025 0.0282 389.3 134.1)">B1</text><text transform="matrix(0.0844 0 -0.0234 0.0282 398.7 134.1)">B2</text><text transform="matrix(0.0844 0 -0.0218 0.0282 408 134.1)">B3</text><text transform="matrix(0.0844 0 -0.0201 0.0282 417.4 134.1)">B4</text><text transform="matrix(0.0844 0 -0.0185 0.0282 426.8 134.1)">B5</text><text transform="matrix(0.0844 0 -0.0169 0.0282 436.2 134.1)">B6</text><text transform="matrix(0.0844 0 -0.0153 0.0282 445.6 134.1)">B7</text><text transform="matrix(0.0844 0 -0.0137 0.0282 455 134.1)">B8</text><text transform="matrix(0.0844 0 -0.0121 0.0282 464.3 134.1)">B1</text><text transform="matrix(0.0844 0 -0.0105 0.0282 473.7 134.1)">B2</text><text transform="matrix(0.0844 0 -0.0089 0.0282 483.1 134.1)">B3</text><text transform="matrix(0.0844 0 -0.0073 0.0282 492.5 134.1)">B4</text><text transform="matrix(0.0844 0 -0.0056 0.0282 501.9 134.1)">B5</text><text transform="matrix(0.0844 0 -0.004 0.0282 511.2 134.1)">B6</text><text transform="matrix(0.0844 0 -0.0024 0.0282 520.6 134.1)">B7</text><text transform="matrix(0.0844 0 -0.0008 0.0282 530 134.1)">B8</text><text transform="matrix(0.0844 0 0.0008 0.0282 539.4 134.1)">B1</text><text transform="matrix(0.0844 0 0.0024 0.0282 548.8 134.1)">B2</text><text transform="matrix(0.0844 0 0.004 0.0282 558.2 134.1)">B3</text><text transform="matrix(0.0844 0 0.0056 0.0282 567.5 134.1)">B4</text><text transform="matrix(0.0844 0 0.0073 0.0282 576.9 134.1)">B5</text><text transform="matrix(0.0844 0 0.0089 0.0282 586.3 134.1)">B6</text><text transform="matrix(0.0844 0 0.0105 0.0282 595.7 134.1)">B7</text><text transform="matrix(0.0844 0 0.0121 0.0282 605.1 134.1)">B8</text><text transform="matrix(0.0844 0 0.0137 0.0282 614.4 134.1)">B1</text><text transform="matrix(0.0844 0 0.0153 0.0282 623.8 134.1)">B2</text><text transform="matrix(0.0844 0 0.0169 0.0282 633.2 134.1)">B3</text><text transform="matrix(0.0844 0 0.0185 0.0282 642.6 134.1)">B4</text><text transform="matrix(0.0844 0 0.0201 0.0282 652 134.1)">B5</text><text transform="matrix(0.0844 0 0.0218 0.0282 661.4 134.1)">B6</text><text transform="matrix(0.0844 0 0.0234 0.0282 670.7 134.1)">B7</text><text transform="matrix(0.0844 0 0.025 0.0282 680.1 134.1)">B8</text><text transform="matrix(0.0844 0 0.0266 0.0282 689.5 134.1)">B1</text><text transform="matrix(0.0844 0 0.0282 0.0282 698.9 134.1)">B2</text><text transform="matrix(0.0844 0 0.0298 0.0282 708.3 134.1)">B3</text><text transform="matrix(0.0844 0 0.0314 0.0282 717.6 134.1)">B4</text><text transform="matrix(0.0844 0 0.033 0.0282 727 134.1)">B5</text><text transform="matrix(0.0844 0 0.0347 0.0282 736.4 134.1)">B6</text><text transform="matrix(0.0844 0 0.0363 0.0282 745.8 134.1)">B7</text><text transform="matrix(0.0844 0 0.0379 0.0282 755.2 134.1)">B8</text><text transform="matrix(0.0844 0 0.0395 0.0282 764.6 134.1)">B1</text><text transform="matrix(0.0844 0 0.0411 0.0282 773.9 134.1)">B2</text><text transform="matrix(0.0844 0 0.0427 0.0282 783.3 134.1)">B3</text><text transform="matrix(0.0844 0 0.0443 0.0282 792.7 134.1)">B4</text><text transform="matrix(0.0844 0 0.0459 0.0282 802.1 134.1)">B5</text><text transform="matrix(0.0844 0 0.0475 0.0282 811.5 134.1)">B6</text><text transform="matrix(0.0844 0 0.0492 0.0282 820.9 134.1)">B7</text><text transform="matrix(0.0844 0 0.0508 0.0282 830.2 134.1)">B8</text><text transform="matrix(0.0844 0 0.0524 0.0282 839.6 134.1)">B1</text><text transform="matrix(0.0831 0 -0.0523 0.0273 225.2 131.6)">A7</text><text transform="matrix(0.0831 0 -0.0508 0.0273 234.5 131.6)">A8</text><text transform="matrix(0.0831 0 -0.0492 0.0273 243.7 131.6)">A1</text><text transform="matrix(0.0831 0 -0.0477 0.0273 252.9 131.6)">A2</text><text transform="matrix(0.0831 0 -0.0461 0.0273 262.2 131.6)">A3</text><text transform="matrix(0.0831 0 -0.0445 0.0273 271.4 131.6)">A4</text><text transform="matrix(0.0831 0 -0.043 0.0273 280.7 131.6)">A5</text><text transform="matrix(0.0831 0 -0.0414 0.0273 289.9 131.6)">A6</text><text transform="matrix(0.0831 0 -0.0398 0.0273 299.1 131.6)">A7</text><text transform="matrix(0.0831 0 -0.0383 0.0273 308.4 131.6)">A8</text><text transform="matrix(0.0831 0 -0.0367 0.0273 317.6 131.6)">A1</text><text transform="matrix(0.0831 0 -0.0352 0.0273 326.8 131.6)">A2</text><text transform="matrix(0.0831 0 -0.0336 0.0273 336.1 131.6)">A3</text><text transform="matrix(0.0831 0 -0.032 0.0273 345.3 131.6)">A4</text><text transform="matrix(0.0831 0 -0.0305 0.0273 354.6 131.6)">A5</text><text transform="matrix(0.0831 0 -0.0289 0.0273 363.8 131.6)">A6</text><text transform="matrix(0.0831 0 -0.0273 0.0273 373 131.6)">A7</text><text transform="matrix(0.0831 0 -0.0258 0.0273 382.3 131.6)">A8</text><text transform="matrix(0.0831 0 -0.0242 0.0273 391.5 131.6)">A1</text><text transform="matrix(0.0831 0 -0.0227 0.0273 400.8 131.6)">A2</text><text transform="matrix(0.0831 0 -0.0211 0.0273 410 131.6)">A3</text><text transform="matrix(0.0831 0 -0.0195 0.0273 419.2 131.6)">A4</text><text transform="matrix(0.0831 0 -0.018 0.0273 428.5 131.6)">A5</text><text transform="matrix(0.0831 0 -0.0164 0.0273 437.7 131.6)">A6</text><text transform="matrix(0.0831 0 -0.0148 0.0273 446.9 131.6)">A7</text><text transform="matrix(0.0831 0 -0.0133 0.0273 456.2 131.6)">A8</text><text transform="matrix(0.0831 0 -0.0117 0.0273 465.4 131.6)">A1</text><text transform="matrix(0.0831 0 -0.0102 0.0273 474.7 131.6)">A2</text><text transform="matrix(0.0831 0 -0.0086 0.0273 483.9 131.6)">A3</text><text transform="matrix(0.0831 0 -0.007 0.0273 493.1 131.6)">A4</text><text transform="matrix(0.0831 0 -0.0055 0.0273 502.4 131.6)">A5</text><text transform="matrix(0.0831 0 -0.0039 0.0273 511.6 131.6)">A6</text><text transform="matrix(0.0831 0 -0.0023 0.0273 520.8 131.6)">A7</text><text transform="matrix(0.0831 0 -0.0008 0.0273 530.1 131.6)">A8</text><text transform="matrix(0.0831 0 0.0008 0.0273 539.3 131.6)">A1</text><text transform="matrix(0.0831 0 0.0023 0.0273 548.6 131.6)">A2</text><text transform="matrix(0.0831 0 0.0039 0.0273 557.8 131.6)">A3</text><text transform="matrix(0.0831 0 0.0055 0.0273 567 131.6)">A4</text><text transform="matrix(0.0831 0 0.007 0.0273 576.3 131.6)">A5</text><text transform="matrix(0.0831 0 0.0086 0.0273 585.5 131.6)">A6</text><text transform="matrix(0.0831 0 0.0102 0.0273 594.7 131.6)">A7</text><text transform="matrix(0.0831 0 0.0117 0.0273 604 131.6)">A8</text><text transform="matrix(0.0831 0 0.0133 0.0273 613.2 131.6)">A1</text><text transform="matrix(0.0831 0 0.0148 0.0273 622.5 131.6)">A2</text><text transform="matrix(0.0831 0 0.0164 0.0273 631.7 131.6)">A3</text><text transform="matrix(0.0831 0 0.018 0.0273 640.9 131.6)">A4</text><text transform="matrix(0.0831 0 0.0195 0.0273 650.2 131.6)">A5</text><text transform="matrix(0.0831 0 0.0211 0.0273 659.4 131.6)">A6</text><text transform="matrix(0.0831 0 0.0227 0.0273 668.6 131.6)">A7</text><text transform="matrix(0.0831 0 0.0242 0.0273 677.9 131.6)">A8</text><text transform="matrix(0.0831 0 0.0258 0.0273 687.1 131.6)">A1</text><text transform="matrix(0.0831 0 0.0273 0.0273 696.4 131.6)">A2</text><text transform="matrix(0.0831 0 0.0289 0.0273 705.6 131.6)">A3</text><text transform="matrix(0.0831 0 0.0305 0.0273 714.8 131.6)">A4</text><text transform="matrix(0.0831 0 0.032 0.0273 724.1 131.6)">A5</text><text transform="matrix(0.0831 0 0.0336 0.0273 733.3 131.6)">A6</text><text transform="matrix(0.0831 0 0.0352 0.0273 742.6 131.6)">A7</text><text transform="matrix(0.0831 0 0.0367 0.0273 751.8 131.6)">A8</text><text transform="matrix(0.0831 0 0.0383 0.0273 761 131.6)">A1</text><text transform="matrix(0.0831 0 0.0398 0.0273 770.3 131.6)">A2</text><text transform="matrix(0.0831 0 0.0414 0.0273 779.5 131.6)">A3</text><text transform="matrix(0.0831 0 0.043 0.0273 788.7 131.6)">A4</text><text transform="matrix(0.0831 0 0.0445 0.0273 798 131.6)">A5</text><text transform="matrix(0.0831 0 0.0461 0.0273 807.2 131.6)">A6</text><text transform="matrix(0.0831 0 0.0477 0.0273 816.5 131.6)">A7</text><text transform="matrix(0.0831 0 0.0492 0.0273 825.7 131.6)">A8</text><text transform="matrix(0.0831 0 0.0508 0.0273 834.9 131.6)">A1</text><text transform="matrix(0.0831 0 0.0523 0.0273 844.2 131.6)">A2</text><text transform="matrix(0.0819 0 -0.0523 0.0265 220.8 129.1)">H6</text><text transform="matrix(0.0819 0 -0.0508 0.0265 229.9 129.1)">H7</text><text transform="matrix(0.0819 0 -0.0493 0.0265 239 129.1)">H8</text><text transform="matrix(0.0819 0 -0.0477 0.0265 248.1 129.1)">H1</text><text transform="matrix(0.0819 0 -0.0462 0.0265 257.2 129.1)">H2</text><text transform="matrix(0.0819 0 -0.0447 0.0265 266.3 129.1)">H3</text><text transform="matrix(0.0819 0 -0.0432 0.0265 275.4 129.1)">H4</text><text transform="matrix(0.0819 0 -0.0417 0.0265 284.5 129.1)">H5</text><text transform="matrix(0.0819 0 -0.0402 0.0265 293.6 129.1)">H6</text><text transform="matrix(0.0819 0 -0.0386 0.0265 302.7 129.1)">H7</text><text transform="matrix(0.0819 0 -0.0371 0.0265 311.8 129.1)">H8</text><text transform="matrix(0.0819 0 -0.0356 0.0265 320.9 129.1)">H1</text><text transform="matrix(0.0819 0 -0.0341 0.0265 330 129.1)">H2</text><text transform="matrix(0.0819 0 -0.0326 0.0265 339.1 129.1)">H3</text><text transform="matrix(0.0819 0 -0.0311 0.0265 348.2 129.1)">H4</text><text transform="matrix(0.0819 0 -0.0296 0.0265 357.3 129.1)">H5</text><text transform="matrix(0.0819 0 -0.028 0.0265 366.4 129.1)">H6</text><text transform="matrix(0.0819 0 -0.0265 0.0265 375.5 129.1)">H7</text><text transform="matrix(0.0819 0 -0.025 0.0265 384.6 129.1)">H8</text><text transform="matrix(0.0819 0 -0.0235 0.0265 393.7 129.1)">H1</text><text transform="matrix(0.0819 0 -0.022 0.0265 402.8 129.1)">H2</text><text transform="matrix(0.0819 0 -0.0205 0.0265 411.9 129.1)">H3</text><text transform="matrix(0.0819 0 -0.0189 0.0265 421 129.1)">H4</text><text transform="matrix(0.0819 0 -0.0174 0.0265 430.1 129.1)">H5</text><text transform="matrix(0.0819 0 -0.0159 0.0265 439.2 129.1)">H6</text><text transform="matrix(0.0819 0 -0.0144 0.0265 448.3 129.1)">H7</text><text transform="matrix(0.0819 0 -0.0129 0.0265 457.4 129.1)">H8</text><text transform="matrix(0.0819 0 -0.0114 0.0265 466.5 129.1)">H1</text><text transform="matrix(0.0819 0 -0.0099 0.0265 475.6 129.1)">H2</text><text transform="matrix(0.0819 0 -0.0083 0.0265 484.7 129.1)">H3</text><text transform="matrix(0.0819 0 -0.0068 0.0265 493.8 129.1)">H4</text><text transform="matrix(0.0819 0 -0.0053 0.0265 502.9 129.1)">H5</text><text transform="matrix(0.0819 0 -0.0038 0.0265 512 129.1)">H6</text><text transform="matrix(0.0819 0 -0.0023 0.0265 521.1 129.1)">H7</text><text transform="matrix(0.0819 0 -0.0008 0.0265 530.2 129.1)">H8</text><text transform="matrix(0.0819 0 0.0008 0.0265 539.2 129.1)">H1</text><text transform="matrix(0.0819 0 0.0023 0.0265 548.3 129.1)">H2</text><text transform="matrix(0.0819 0 0.0038 0.0265 557.4 129.1)">H3</text><text transform="matrix(0.0819 0 0.0053 0.0265 566.5 129.1)">H4</text><text transform="matrix(0.0819 0 0.0068 0.0265 575.6 129.1)">H5</text><text transform="matrix(0.0819 0 0.0083 0.0265 584.7 129.1)">H6</text><text transform="matrix(0.0819 0 0.0099 0.0265 593.8 129.1)">H7</text><text transform="matrix(0.0819 0 0.0114 0.0265 602.9 129.1)">H8</text><text transform="matrix(0.0819 0 0.0129 0.0265 612 129.1)">H1</text><text transform="matrix(0.0819 0 0.0144 0.0265 621.1 129.1)">H2</text><text transform="matrix(0.0819 0 0.0159 0.0265 630.2 129.1)">H3</text><text transform="matrix(0.0819 0 0.0174 0.0265 639.3 129.1)">H4</text><text transform="matrix(0.0819 0 0.0189 0.0265 648.4 129.1)">H5</text><text transform="matrix(0.0819 0 0.0205 0.0265 657.5 129.1)">H6</text><text transform="matrix(0.0819 0 0.022 0.0265 666.6 129.1)">H7</text><text transform="matrix(0.0819 0 0.0235 0.0265 675.7 129.1)">H8</text><text transform="matrix(0.0819 0 0.025 0.0265 684.8 129.1)">H1</text><text transform="matrix(0.0819 0 0.0265 0.0265 693.9 129.1)">H2</text><text transform="matrix(0.0819 0 0.028 0.0265 703 129.1)">H3</text><text transform="matrix(0.0819 0 0.0296 0.0265 712.1 129.1)">H4</text><text transform="matrix(0.0819 0 0.0311 0.0265 721.2 129.1)">H5</text><text transform="matrix(0.0819 0 0.0326 0.0265 730.3 129.1)">H6</text><text transform="matrix(0.0819 0 0.0341 0.0265 739.4 129.1)">H7</text><text transform="matrix(0.0819 0 0.0356 0.0265 748.5 129.1)">H8</text><text transform="matrix(0.0819 0 0.0371 0.0265 757.6 129.1)">H1</text><text transform="matrix(0.0819 0 0.0386 0.0265 766.7 129.1)">H2</text><text transform="matrix(0.0819 0 0.0402 0.0265 775.8 129.1)">H3</text><text transform="matrix(0.0819 0 0.0417 0.0265 784.9 129.1)">H4</text><text transform="matrix(0.0819 0 0.0432 0.0265 794 129.1)">H5</text><text transform="matrix(0.0819 0 0.0447 0.0265 803.1 129.1)">H6</text><text transform="matrix(0.0819 0 0.0462 0.0265 812.2 129.1)">H7</text><text transform="matrix(0.0819 0 0.0477 0.0265 821.3 129.1)">H8</text><text transform="matrix(0.0819 0 0.0493 0.0265 830.4 129.1)">H1</text><text transform="matrix(0.0819 0 0.0508 0.0265 839.5 129.1)">H2</text><text transform="matrix(0.0807 0 -0.0522 0.0257 216.5 126.8)">G5</text><text transform="matrix(0.0807 0 -0.0507 0.0257 225.5 126.8)">G6</text><text transform="matrix(0.0807 0 -0.0493 0.0257 234.5 126.8)">G7</text><text transform="matrix(0.0807 0 -0.0478 0.0257 243.4 126.8)">G8</text><text transform="matrix(0.0807 0 -0.0463 0.0257 252.4 126.8)">G1</text><text transform="matrix(0.0807 0 -0.0449 0.0257 261.4 126.8)">G2</text><text transform="matrix(0.0807 0 -0.0434 0.0257 270.3 126.8)">G3</text><text transform="matrix(0.0807 0 -0.0419 0.0257 279.3 126.8)">G4</text><text transform="matrix(0.0807 0 -0.0404 0.0257 288.2 126.8)">G5</text><text transform="matrix(0.0807 0 -0.039 0.0257 297.2 126.8)">G6</text><text transform="matrix(0.0807 0 -0.0375 0.0257 306.2 126.8)">G7</text><text transform="matrix(0.0807 0 -0.036 0.0257 315.1 126.8)">G8</text><text transform="matrix(0.0807 0 -0.0346 0.0257 324.1 126.8)">G1</text><text transform="matrix(0.0807 0 -0.0331 0.0257 333.1 126.8)">G2</text><text transform="matrix(0.0807 0 -0.0316 0.0257 342 126.8)">G3</text><text transform="matrix(0.0807 0 -0.0301 0.0257 351 126.8)">G4</text><text transform="matrix(0.0807 0 -0.0287 0.0257 359.9 126.8)">G5</text><text transform="matrix(0.0807 0 -0.0272 0.0257 368.9 126.8)">G6</text><text transform="matrix(0.0807 0 -0.0257 0.0257 377.9 126.8)">G7</text><text transform="matrix(0.0807 0 -0.0243 0.0257 386.8 126.8)">G8</text><text transform="matrix(0.0807 0 -0.0228 0.0257 395.8 126.8)">G1</text><text transform="matrix(0.0807 0 -0.0213 0.0257 404.7 126.8)">G2</text><text transform="matrix(0.0807 0 -0.0199 0.0257 413.7 126.8)">G3</text><text transform="matrix(0.0807 0 -0.0184 0.0257 422.7 126.8)">G4</text><text transform="matrix(0.0807 0 -0.0169 0.0257 431.6 126.8)">G5</text><text transform="matrix(0.0807 0 -0.0154 0.0257 440.6 126.8)">G6</text><text transform="matrix(0.0807 0 -0.014 0.0257 449.6 126.8)">G7</text><text transform="matrix(0.0807 0 -0.0125 0.0257 458.5 126.8)">G8</text><text transform="matrix(0.0807 0 -0.011 0.0257 467.5 126.8)">G1</text><text transform="matrix(0.0807 0 -0.0096 0.0257 476.4 126.8)">G2</text><text transform="matrix(0.0807 0 -0.0081 0.0257 485.4 126.8)">G3</text><text transform="matrix(0.0807 0 -0.0066 0.0257 494.4 126.8)">G4</text><text transform="matrix(0.0807 0 -0.0051 0.0257 503.3 126.8)">G5</text><text transform="matrix(0.0807 0 -0.0037 0.0257 512.3 126.8)">G6</text><text transform="matrix(0.0807 0 -0.0022 0.0257 521.3 126.8)">G7</text><text transform="matrix(0.0807 0 -0.0007 0.0257 530.2 126.8)">G8</text><text transform="matrix(0.0807 0 0.0007 0.0257 539.2 126.8)">G1</text><text transform="matrix(0.0807 0 0.0022 0.0257 548.1 126.8)">G2</text><text transform="matrix(0.0807 0 0.0037 0.0257 557.1 126.8)">G3</text><text transform="matrix(0.0807 0 0.0051 0.0257 566.1 126.8)">G4</text><text transform="matrix(0.0807 0 0.0066 0.0257 575 126.8)">G5</text><text transform="matrix(0.0807 0 0.0081 0.0257 584 126.8)">G6</text><text transform="matrix(0.0807 0 0.0096 0.0257 593 126.8)">G7</text><text transform="matrix(0.0807 0 0.011 0.0257 601.9 126.8)">G8</text><text transform="matrix(0.0807 0 0.0125 0.0257 610.9 126.8)">G1</text><text transform="matrix(0.0807 0 0.014 0.0257 619.8 126.8)">G2</text><text transform="matrix(0.0807 0 0.0154 0.0257 628.8 126.8)">G3</text><text transform="matrix(0.0807 0 0.0169 0.0257 637.8 126.8)">G4</text><text transform="matrix(0.0807 0 0.0184 0.0257 646.7 126.8)">G5</text><text transform="matrix(0.0807 0 0.0199 0.0257 655.7 126.8)">G6</text><text transform="matrix(0.0807 0 0.0213 0.0257 664.7 126.8)">G7</text><text transform="matrix(0.0807 0 0.0228 0.0257 673.6 126.8)">G8</text><text transform="matrix(0.0807 0 0.0243 0.0257 682.6 126.8)">G1</text><text transform="matrix(0.0807 0 0.0257 0.0257 691.5 126.8)">G2</text><text transform="matrix(0.0807 0 0.0272 0.0257 700.5 126.8)">G3</text><text transform="matrix(0.0807 0 0.0287 0.0257 709.5 126.8)">G4</text><text transform="matrix(0.0807 0 0.0301 0.0257 718.4 126.8)">G5</text><text transform="matrix(0.0807 0 0.0316 0.0257 727.4 126.8)">G6</text><text transform="matrix(0.0807 0 0.0331 0.0257 736.3 126.8)">G7</text><text transform="matrix(0.0807 0 0.0346 0.0257 745.3 126.8)">G8</text><text transform="matrix(0.0807 0 0.036 0.0257 754.3 126.8)">G1</text><text transform="matrix(0.0807 0 0.0375 0.0257 763.2 126.8)">G2</text><text transform="matrix(0.0807 0 0.039 0.0257 772.2 126.8)">G3</text><text transform="matrix(0.0807 0 0.0404 0.0257 781.2 126.8)">G4</text><text transform="matrix(0.0807 0 0.0419 0.0257 790.1 126.8)">G5</text><text transform="matrix(0.0807 0 0.0434 0.0257 799.1 126.8)">G6</text><text transform="matrix(0.0807 0 0.0449 0.0257 808 126.8)">G7</text><text transform="matrix(0.0807 0 0.0463 0.0257 817 126.8)">G8</text><text transform="matrix(0.0807 0 0.0478 0.0257 826 126.8)">G1</text><text transform="matrix(0.0807 0 0.0493 0.0257 834.9 126.8)">G2</text><text transform="matrix(0.0807 0 0.0507 0.0257 843.9 126.8)">G3</text><text transform="matrix(0.0795 0 -0.0507 0.025 221.2 124.5)">F5</text><text transform="matrix(0.0795 0 -0.0493 0.025 230 124.5)">F6</text><text transform="matrix(0.0795 0 -0.0478 0.025 238.9 124.5)">F7</text><text transform="matrix(0.0795 0 -0.0464 0.025 247.7 124.5)">F8</text><text transform="matrix(0.0795 0 -0.045 0.025 256.5 124.5)">F1</text><text transform="matrix(0.0795 0 -0.0435 0.025 265.4 124.5)">F2</text><text transform="matrix(0.0795 0 -0.0421 0.025 274.2 124.5)">F3</text><text transform="matrix(0.0795 0 -0.0407 0.025 283 124.5)">F4</text><text transform="matrix(0.0795 0 -0.0393 0.025 291.9 124.5)">F5</text><text transform="matrix(0.0795 0 -0.0378 0.025 300.7 124.5)">F6</text><text transform="matrix(0.0795 0 -0.0364 0.025 309.5 124.5)">F7</text><text transform="matrix(0.0795 0 -0.035 0.025 318.4 124.5)">F8</text><text transform="matrix(0.0795 0 -0.0336 0.025 327.2 124.5)">F1</text><text transform="matrix(0.0795 0 -0.0321 0.025 336 124.5)">F2</text><text transform="matrix(0.0795 0 -0.0307 0.025 344.8 124.5)">F3</text><text transform="matrix(0.0795 0 -0.0293 0.025 353.7 124.5)">F4</text><text transform="matrix(0.0795 0 -0.0278 0.025 362.5 124.5)">F5</text><text transform="matrix(0.0795 0 -0.0264 0.025 371.3 124.5)">F6</text><text transform="matrix(0.0795 0 -0.025 0.025 380.2 124.5)">F7</text><text transform="matrix(0.0795 0 -0.0236 0.025 389 124.5)">F8</text><text transform="matrix(0.0795 0 -0.0221 0.025 397.8 124.5)">F1</text><text transform="matrix(0.0795 0 -0.0207 0.025 406.7 124.5)">F2</text><text transform="matrix(0.0795 0 -0.0193 0.025 415.5 124.5)">F3</text><text transform="matrix(0.0795 0 -0.0178 0.025 424.3 124.5)">F4</text><text transform="matrix(0.0795 0 -0.0164 0.025 433.1 124.5)">F5</text><text transform="matrix(0.0795 0 -0.015 0.025 442 124.5)">F6</text><text transform="matrix(0.0795 0 -0.0136 0.025 450.8 124.5)">F7</text><text transform="matrix(0.0795 0 -0.0121 0.025 459.6 124.5)">F8</text><text transform="matrix(0.0795 0 -0.0107 0.025 468.5 124.5)">F1</text><text transform="matrix(0.0795 0 -0.0093 0.025 477.3 124.5)">F2</text><text transform="matrix(0.0795 0 -0.0079 0.025 486.1 124.5)">F3</text><text transform="matrix(0.0795 0 -0.0064 0.025 495 124.5)">F4</text><text transform="matrix(0.0795 0 -0.005 0.025 503.8 124.5)">F5</text><text transform="matrix(0.0795 0 -0.0036 0.025 512.6 124.5)">F6</text><text transform="matrix(0.0795 0 -0.0021 0.025 521.5 124.5)">F7</text><text transform="matrix(0.0795 0 -0.0007 0.025 530.3 124.5)">F8</text><text transform="matrix(0.0795 0 0.0007 0.025 539.1 124.5)">F1</text><text transform="matrix(0.0795 0 0.0021 0.025 547.9 124.5)">F2</text><text transform="matrix(0.0795 0 0.0036 0.025 556.8 124.5)">F3</text><text transform="matrix(0.0795 0 0.005 0.025 565.6 124.5)">F4</text><text transform="matrix(0.0795 0 0.0064 0.025 574.4 124.5)">F5</text><text transform="matrix(0.0795 0 0.0079 0.025 583.3 124.5)">F6</text><text transform="matrix(0.0795 0 0.0093 0.025 592.1 124.5)">F7</text><text transform="matrix(0.0795 0 0.0107 0.025 600.9 124.5)">F8</text><text transform="matrix(0.0795 0 0.0121 0.025 609.8 124.5)">F1</text><text transform="matrix(0.0795 0 0.0136 0.025 618.6 124.5)">F2</text><text transform="matrix(0.0795 0 0.015 0.025 627.4 124.5)">F3</text><text transform="matrix(0.0795 0 0.0164 0.025 636.3 124.5)">F4</text><text transform="matrix(0.0795 0 0.0178 0.025 645.1 124.5)">F5</text><text transform="matrix(0.0795 0 0.0193 0.025 653.9 124.5)">F6</text><text transform="matrix(0.0795 0 0.0207 0.025 662.7 124.5)">F7</text><text transform="matrix(0.0795 0 0.0221 0.025 671.6 124.5)">F8</text><text transform="matrix(0.0795 0 0.0236 0.025 680.4 124.5)">F1</text><text transform="matrix(0.0795 0 0.025 0.025 689.2 124.5)">F2</text><text transform="matrix(0.0795 0 0.0264 0.025 698.1 124.5)">F3</text><text transform="matrix(0.0795 0 0.0278 0.025 706.9 124.5)">F4</text><text transform="matrix(0.0795 0 0.0293 0.025 715.7 124.5)">F5</text><text transform="matrix(0.0795 0 0.0307 0.025 724.6 124.5)">F6</text><text transform="matrix(0.0795 0 0.0321 0.025 733.4 124.5)">F7</text><text transform="matrix(0.0795 0 0.0336 0.025 742.2 124.5)">F8</text><text transform="matrix(0.0795 0 0.035 0.025 751 124.5)">F1</text><text transform="matrix(0.0795 0 0.0364 0.025 759.9 124.5)">F2</text><text transform="matrix(0.0795 0 0.0378 0.025 768.7 124.5)">F3</text><text transform="matrix(0.0795 0 0.0393 0.025 777.5 124.5)">F4</text><text transform="matrix(0.0795 0 0.0407 0.025 786.4 124.5)">F5</text><text transform="matrix(0.0795 0 0.0421 0.025 795.2 124.5)">F6</text><text transform="matrix(0.0795 0 0.0435 0.025 804 124.5)">F7</text><text transform="matrix(0.0795 0 0.045 0.025 812.9 124.5)">F8</text><text transform="matrix(0.0795 0 0.0464 0.025 821.7 124.5)">F1</text><text transform="matrix(0.0795 0 0.0478 0.025 830.5 124.5)">F2</text><text transform="matrix(0.0795 0 0.0493 0.025 839.4 124.5)">F3</text><text transform="matrix(0.0783 0 -0.0506 0.0242 217.1 122.2)">E4</text><text transform="matrix(0.0783 0 -0.0492 0.0242 225.8 122.2)">E5</text><text transform="matrix(0.0783 0 -0.0478 0.0242 234.5 122.2)">E6</text><text transform="matrix(0.0783 0 -0.0465 0.0242 243.2 122.2)">E7</text><text transform="matrix(0.0783 0 -0.0451 0.0242 251.9 122.2)">E8</text><text transform="matrix(0.0783 0 -0.0437 0.0242 260.6 122.2)">E1</text><text transform="matrix(0.0783 0 -0.0423 0.0242 269.3 122.2)">E2</text><text transform="matrix(0.0783 0 -0.0409 0.0242 278 122.2)">E3</text><text transform="matrix(0.0783 0 -0.0395 0.0242 286.7 122.2)">E4</text><text transform="matrix(0.0783 0 -0.0381 0.0242 295.4 122.2)">E5</text><text transform="matrix(0.0783 0 -0.0367 0.0242 304.1 122.2)">E6</text><text transform="matrix(0.0783 0 -0.0354 0.0242 312.8 122.2)">E7</text><text transform="matrix(0.0783 0 -0.034 0.0242 321.5 122.2)">E8</text><text transform="matrix(0.0783 0 -0.0326 0.0242 330.2 122.2)">E1</text><text transform="matrix(0.0783 0 -0.0312 0.0242 338.9 122.2)">E2</text><text transform="matrix(0.0783 0 -0.0298 0.0242 347.6 122.2)">E3</text><text transform="matrix(0.0783 0 -0.0284 0.0242 356.3 122.2)">E4</text><text transform="matrix(0.0783 0 -0.027 0.0242 365 122.2)">E5</text><text transform="matrix(0.0783 0 -0.0257 0.0242 373.7 122.2)">E6</text><text transform="matrix(0.0783 0 -0.0243 0.0242 382.4 122.2)">E7</text><text transform="matrix(0.0783 0 -0.0229 0.0242 391.1 122.2)">E8</text><text transform="matrix(0.0783 0 -0.0215 0.0242 399.8 122.2)">E1</text><text transform="matrix(0.0783 0 -0.0201 0.0242 408.5 122.2)">E2</text><text transform="matrix(0.0783 0 -0.0187 0.0242 417.2 122.2)">E3</text><text transform="matrix(0.0783 0 -0.0173 0.0242 425.9 122.2)">E4</text><text transform="matrix(0.0783 0 -0.0159 0.0242 434.6 122.2)">E5</text><text transform="matrix(0.0783 0 -0.0146 0.0242 443.3 122.2)">E6</text><text transform="matrix(0.0783 0 -0.0132 0.0242 452 122.2)">E7</text><text transform="matrix(0.0783 0 -0.0118 0.0242 460.7 122.2)">E8</text><text transform="matrix(0.0783 0 -0.0104 0.0242 469.4 122.2)">E1</text><text transform="matrix(0.0783 0 -0.009 0.0242 478.1 122.2)">E2</text><text transform="matrix(0.0783 0 -0.0076 0.0242 486.8 122.2)">E3</text><text transform="matrix(0.0783 0 -0.0062 0.0242 495.5 122.2)">E4</text><text transform="matrix(0.0783 0 -0.0049 0.0242 504.2 122.2)">E5</text><text transform="matrix(0.0783 0 -0.0035 0.0242 512.9 122.2)">E6</text><text transform="matrix(0.0783 0 -0.0021 0.0242 521.6 122.2)">E7</text><text transform="matrix(0.0783 0 -0.0007 0.0242 530.3 122.2)">E8</text><text transform="matrix(0.0783 0 0.0007 0.0242 539.1 122.2)">E1</text><text transform="matrix(0.0783 0 0.0021 0.0242 547.8 122.2)">E2</text><text transform="matrix(0.0783 0 0.0035 0.0242 556.5 122.2)">E3</text><text transform="matrix(0.0783 0 0.0049 0.0242 565.2 122.2)">E4</text><text transform="matrix(0.0783 0 0.0062 0.0242 573.9 122.2)">E5</text><text transform="matrix(0.0783 0 0.0076 0.0242 582.6 122.2)">E6</text><text transform="matrix(0.0783 0 0.009 0.0242 591.3 122.2)">E7</text><text transform="matrix(0.0783 0 0.0104 0.0242 600 122.2)">E8</text><text transform="matrix(0.0783 0 0.0118 0.0242 608.7 122.2)">E1</text><text transform="matrix(0.0783 0 0.0132 0.0242 617.4 122.2)">E2</text><text transform="matrix(0.0783 0 0.0146 0.0242 626.1 122.2)">E3</text><text transform="matrix(0.0783 0 0.0159 0.0242 634.8 122.2)">E4</text><text transform="matrix(0.0783 0 0.0173 0.0242 643.5 122.2)">E5</text><text transform="matrix(0.0783 0 0.0187 0.0242 652.2 122.2)">E6</text><text transform="matrix(0.0783 0 0.0201 0.0242 660.9 122.2)">E7</text><text transform="matrix(0.0783 0 0.0215 0.0242 669.6 122.2)">E8</text><text transform="matrix(0.0783 0 0.0229 0.0242 678.3 122.2)">E1</text><text transform="matrix(0.0783 0 0.0243 0.0242 687 122.2)">E2</text><text transform="matrix(0.0783 0 0.0257 0.0242 695.7 122.2)">E3</text><text transform="matrix(0.0783 0 0.027 0.0242 704.4 122.2)">E4</text><text transform="matrix(0.0783 0 0.0284 0.0242 713.1 122.2)">E5</text><text transform="matrix(0.0783 0 0.0298 0.0242 721.8 122.2)">E6</text><text transform="matrix(0.0783 0 0.0312 0.0242 730.5 122.2)">E7</text><text transform="matrix(0.0783 0 0.0326 0.0242 739.2 122.2)">E8</text><text transform="matrix(0.0783 0 0.034 0.0242 747.9 122.2)">E1</text><text transform="matrix(0.0783 0 0.0354 0.0242 756.6 122.2)">E2</text><text transform="matrix(0.0783 0 0.0367 0.0242 765.3 122.2)">E3</text><text transform="matrix(0.0783 0 0.0381 0.0242 774 122.2)">E4</text><text transform="matrix(0.0783 0 0.0395 0.0242 782.7 122.2)">E5</text><text transform="matrix(0.0783 0 0.0409 0.0242 791.4 122.2)">E6</text><text transform="matrix(0.0783 0 0.0423 0.0242 800.1 122.2)">E7</text><text transform="matrix(0.0783 0 0.0437 0.0242 808.8 122.2)">E8</text><text transform="matrix(0.0783 0 0.0451 0.0242 817.5 122.2)">E1</text><text transform="matrix(0.0783 0 0.0465 0.0242 826.2 122.2)">E2</text><text transform="matrix(0.0783 0 0.0478 0.0242 834.9 122.2)">E3</text><text transform="matrix(0.0783 0 0.0492 0.0242 843.6 122.2)">E4</text><text transform="matrix(0.0772 0 -0.0492 0.0236 221.6 120.1)">D4</text><text transform="matrix(0.0772 0 -0.0478 0.0236 230.2 120.1)">D5</text><text transform="matrix(0.0772 0 -0.0465 0.0236 238.7 120.1)">D6</text><text transform="matrix(0.0772 0 -0.0451 0.0236 247.3 120.1)">D7</text><text transform="matrix(0.0772 0 -0.0438 0.0236 255.9 120.1)">D8</text><text transform="matrix(0.0772 0 -0.0424 0.0236 264.5 120.1)">D1</text><text transform="matrix(0.0772 0 -0.0411 0.0236 273.1 120.1)">D2</text><text transform="matrix(0.0772 0 -0.0397 0.0236 281.6 120.1)">D3</text><text transform="matrix(0.0772 0 -0.0384 0.0236 290.2 120.1)">D4</text><text transform="matrix(0.0772 0 -0.0371 0.0236 298.8 120.1)">D5</text><text transform="matrix(0.0772 0 -0.0357 0.0236 307.4 120.1)">D6</text><text transform="matrix(0.0772 0 -0.0344 0.0236 316 120.1)">D7</text><text transform="matrix(0.0772 0 -0.033 0.0236 324.5 120.1)">D8</text><text transform="matrix(0.0772 0 -0.0317 0.0236 333.1 120.1)">D1</text><text transform="matrix(0.0772 0 -0.0303 0.0236 341.7 120.1)">D2</text><text transform="matrix(0.0772 0 -0.029 0.0236 350.3 120.1)">D3</text><text transform="matrix(0.0772 0 -0.0276 0.0236 358.8 120.1)">D4</text><text transform="matrix(0.0772 0 -0.0263 0.0236 367.4 120.1)">D5</text><text transform="matrix(0.0772 0 -0.0249 0.0236 376 120.1)">D6</text><text transform="matrix(0.0772 0 -0.0236 0.0236 384.6 120.1)">D7</text><text transform="matrix(0.0772 0 -0.0222 0.0236 393.2 120.1)">D8</text><text transform="matrix(0.0772 0 -0.0209 0.0236 401.7 120.1)">D1</text><text transform="matrix(0.0772 0 -0.0195 0.0236 410.3 120.1)">D2</text><text transform="matrix(0.0772 0 -0.0182 0.0236 418.9 120.1)">D3</text><text transform="matrix(0.0772 0 -0.0168 0.0236 427.5 120.1)">D4</text><text transform="matrix(0.0772 0 -0.0155 0.0236 436 120.1)">D5</text><text transform="matrix(0.0772 0 -0.0141 0.0236 444.6 120.1)">D6</text><text transform="matrix(0.0772 0 -0.0128 0.0236 453.2 120.1)">D7</text><text transform="matrix(0.0772 0 -0.0115 0.0236 461.8 120.1)">D8</text><text transform="matrix(0.0772 0 -0.0101 0.0236 470.4 120.1)">D1</text><text transform="matrix(0.0772 0 -0.0088 0.0236 478.9 120.1)">D2</text><text transform="matrix(0.0772 0 -0.0074 0.0236 487.5 120.1)">D3</text><text transform="matrix(0.0772 0 -0.0061 0.0236 496.1 120.1)">D4</text><text transform="matrix(0.0772 0 -0.0047 0.0236 504.7 120.1)">D5</text><text transform="matrix(0.0772 0 -0.0034 0.0236 513.3 120.1)">D6</text><text transform="matrix(0.0772 0 -0.002 0.0236 521.8 120.1)">D7</text><text transform="matrix(0.0772 0 -0.0007 0.0236 530.4 120.1)">D8</text><text transform="matrix(0.0772 0 0.0007 0.0236 539 120.1)">D1</text><text transform="matrix(0.0772 0 0.002 0.0236 547.6 120.1)">D2</text><text transform="matrix(0.0772 0 0.0034 0.0236 556.1 120.1)">D3</text><text transform="matrix(0.0772 0 0.0047 0.0236 564.7 120.1)">D4</text><text transform="matrix(0.0772 0 0.0061 0.0236 573.3 120.1)">D5</text><text transform="matrix(0.0772 0 0.0074 0.0236 581.9 120.1)">D6</text><text transform="matrix(0.0772 0 0.0088 0.0236 590.5 120.1)">D7</text><text transform="matrix(0.0772 0 0.0101 0.0236 599 120.1)">D8</text><text transform="matrix(0.0772 0 0.0115 0.0236 607.6 120.1)">D1</text><text transform="matrix(0.0772 0 0.0128 0.0236 616.2 120.1)">D2</text><text transform="matrix(0.0772 0 0.0141 0.0236 624.8 120.1)">D3</text><text transform="matrix(0.0772 0 0.0155 0.0236 633.4 120.1)">D4</text><text transform="matrix(0.0772 0 0.0168 0.0236 641.9 120.1)">D5</text><text transform="matrix(0.0772 0 0.0182 0.0236 650.5 120.1)">D6</text><text transform="matrix(0.0772 0 0.0195 0.0236 659.1 120.1)">D7</text><text transform="matrix(0.0772 0 0.0209 0.0236 667.7 120.1)">D8</text><text transform="matrix(0.0772 0 0.0222 0.0236 676.2 120.1)">D1</text><text transform="matrix(0.0772 0 0.0236 0.0236 684.8 120.1)">D2</text><text transform="matrix(0.0772 0 0.0249 0.0236 693.4 120.1)">D3</text><text transform="matrix(0.0772 0 0.0263 0.0236 702 120.1)">D4</text><text transform="matrix(0.0772 0 0.0276 0.0236 710.6 120.1)">D5</text><text transform="matrix(0.0772 0 0.029 0.0236 719.1 120.1)">D6</text><text transform="matrix(0.0772 0 0.0303 0.0236 727.7 120.1)">D7</text><text transform="matrix(0.0772 0 0.0317 0.0236 736.3 120.1)">D8</text><text transform="matrix(0.0772 0 0.033 0.0236 744.9 120.1)">D1</text><text transform="matrix(0.0772 0 0.0344 0.0236 753.4 120.1)">D2</text><text transform="matrix(0.0772 0 0.0357 0.0236 762 120.1)">D3</text><text transform="matrix(0.0772 0 0.0371 0.0236 770.6 120.1)">D4</text><text transform="matrix(0.0772 0 0.0384 0.0236 779.2 120.1)">D5</text><text transform="matrix(0.0772 0 0.0397 0.0236 787.8 120.1)">D6</text><text transform="matrix(0.0772 0 0.0411 0.0236 796.3 120.1)">D7</text><text transform="matrix(0.0772 0 0.0424 0.0236 804.9 120.1)">D8</text><text transform="matrix(0.0772 0 0.0438 0.0236 813.5 120.1)">D1</text><text transform="matrix(0.0772 0 0.0451 0.0236 822.1 120.1)">D2</text><text transform="matrix(0.0772 0 0.0465 0.0236 830.7 120.1)">D3</text><text transform="matrix(0.0772 0 0.0478 0.0236 839.2 120.1)">D4</text><text transform="matrix(0.0772 0 0.0492 0.0236 847.8 120.1)">D5</text><text transform="matrix(0.0761 0 -0.0491 0.0229 217.5 117.9)">C3</text><text transform="matrix(0.0761 0 -0.0478 0.0229 226 117.9)">C4</text><text transform="matrix(0.0761 0 -0.0465 0.0229 234.5 117.9)">C5</text><text transform="matrix(0.0761 0 -0.0452 0.0229 242.9 117.9)">C6</text><text transform="matrix(0.0761 0 -0.0439 0.0229 251.4 117.9)">C7</text><text transform="matrix(0.0761 0 -0.0426 0.0229 259.8 117.9)">C8</text><text transform="matrix(0.0761 0 -0.0413 0.0229 268.3 117.9)">C1</text><text transform="matrix(0.0761 0 -0.0399 0.0229 276.7 117.9)">C2</text><text transform="matrix(0.0761 0 -0.0386 0.0229 285.2 117.9)">C3</text><text transform="matrix(0.0761 0 -0.0373 0.0229 293.7 117.9)">C4</text><text transform="matrix(0.0761 0 -0.036 0.0229 302.1 117.9)">C5</text><text transform="matrix(0.0761 0 -0.0347 0.0229 310.6 117.9)">C6</text><text transform="matrix(0.0761 0 -0.0334 0.0229 319 117.9)">C7</text><text transform="matrix(0.0761 0 -0.0321 0.0229 327.5 117.9)">C8</text><text transform="matrix(0.0761 0 -0.0308 0.0229 335.9 117.9)">C1</text><text transform="matrix(0.0761 0 -0.0295 0.0229 344.4 117.9)">C2</text><text transform="matrix(0.0761 0 -0.0282 0.0229 352.9 117.9)">C3</text><text transform="matrix(0.0761 0 -0.0268 0.0229 361.3 117.9)">C4</text><text transform="matrix(0.0761 0 -0.0255 0.0229 369.8 117.9)">C5</text><text transform="matrix(0.0761 0 -0.0242 0.0229 378.2 117.9)">C6</text><text transform="matrix(0.0761 0 -0.0229 0.0229 386.7 117.9)">C7</text><text transform="matrix(0.0761 0 -0.0216 0.0229 395.2 117.9)">C8</text><text transform="matrix(0.0761 0 -0.0203 0.0229 403.6 117.9)">C1</text><text transform="matrix(0.0761 0 -0.019 0.0229 412.1 117.9)">C2</text><text transform="matrix(0.0761 0 -0.0177 0.0229 420.5 117.9)">C3</text><text transform="matrix(0.0761 0 -0.0164 0.0229 429 117.9)">C4</text><text transform="matrix(0.0761 0 -0.0151 0.0229 437.4 117.9)">C5</text><text transform="matrix(0.0761 0 -0.0138 0.0229 445.9 117.9)">C6</text><text transform="matrix(0.0761 0 -0.0124 0.0229 454.4 117.9)">C7</text><text transform="matrix(0.0761 0 -0.0111 0.0229 462.8 117.9)">C8</text><text transform="matrix(0.0761 0 -0.0098 0.0229 471.3 117.9)">C1</text><text transform="matrix(0.0761 0 -0.0085 0.0229 479.7 117.9)">C2</text><text transform="matrix(0.0761 0 -0.0072 0.0229 488.2 117.9)">C3</text><text transform="matrix(0.0761 0 -0.0059 0.0229 496.6 117.9)">C4</text><text transform="matrix(0.0761 0 -0.0046 0.0229 505.1 117.9)">C5</text><text transform="matrix(0.0761 0 -0.0033 0.0229 513.6 117.9)">C6</text><text transform="matrix(0.0761 0 -0.002 0.0229 522 117.9)">C7</text><text transform="matrix(0.0761 0 -0.0007 0.0229 530.5 117.9)">C8</text><text transform="matrix(0.0761 0 0.0007 0.0229 538.9 117.9)">C1</text><text transform="matrix(0.0761 0 0.002 0.0229 547.4 117.9)">C2</text><text transform="matrix(0.0761 0 0.0033 0.0229 555.8 117.9)">C3</text><text transform="matrix(0.0761 0 0.0046 0.0229 564.3 117.9)">C4</text><text transform="matrix(0.0761 0 0.0059 0.0229 572.8 117.9)">C5</text><text transform="matrix(0.0761 0 0.0072 0.0229 581.2 117.9)">C6</text><text transform="matrix(0.0761 0 0.0085 0.0229 589.7 117.9)">C7</text><text transform="matrix(0.0761 0 0.0098 0.0229 598.1 117.9)">C8</text><text transform="matrix(0.0761 0 0.0111 0.0229 606.6 117.9)">C1</text><text transform="matrix(0.0761 0 0.0124 0.0229 615 117.9)">C2</text><text transform="matrix(0.0761 0 0.0138 0.0229 623.5 117.9)">C3</text><text transform="matrix(0.0761 0 0.0151 0.0229 632 117.9)">C4</text><text transform="matrix(0.0761 0 0.0164 0.0229 640.4 117.9)">C5</text><text transform="matrix(0.0761 0 0.0177 0.0229 648.9 117.9)">C6</text><text transform="matrix(0.0761 0 0.019 0.0229 657.3 117.9)">C7</text><text transform="matrix(0.0761 0 0.0203 0.0229 665.8 117.9)">C8</text><text transform="matrix(0.0761 0 0.0216 0.0229 674.2 117.9)">C1</text><text transform="matrix(0.0761 0 0.0229 0.0229 682.7 117.9)">C2</text><text transform="matrix(0.0761 0 0.0242 0.0229 691.2 117.9)">C3</text><text transform="matrix(0.0761 0 0.0255 0.0229 699.6 117.9)">C4</text><text transform="matrix(0.0761 0 0.0268 0.0229 708.1 117.9)">C5</text><text transform="matrix(0.0761 0 0.0282 0.0229 716.5 117.9)">C6</text><text transform="matrix(0.0761 0 0.0295 0.0229 725 117.9)">C7</text><text transform="matrix(0.0761 0 0.0308 0.0229 733.5 117.9)">C8</text><text transform="matrix(0.0761 0 0.0321 0.0229 741.9 117.9)">C1</text><text transform="matrix(0.0761 0 0.0334 0.0229 750.4 117.9)">C2</text><text transform="matrix(0.0761 0 0.0347 0.0229 758.8 117.9)">C3</text><text transform="matrix(0.0761 0 0.036 0.0229 767.3 117.9)">C4</text><text transform="matrix(0.0761 0 0.0373 0.0229 775.7 117.9)">C5</text><text transform="matrix(0.0761 0 0.0386 0.0229 784.2 117.9)">C6</text><text transform="matrix(0.0761 0 0.0399 0.0229 792.7 117.9)">C7</text><text transform="matrix(0.0761 0 0.0413 0.0229 801.1 117.9)">C8</text><text transform="matrix(0.0761 0 0.0426 0.0229 809.6 117.9)">C1</text><text transform="matrix(0.0761 0 0.0439 0.0229 818 117.9)">C2</text><text transform="matrix(0.0761 0 0.0452 0.0229 826.5 117.9)">C3</text><text transform="matrix(0.0761 0 0.0465 0.0229 834.9 117.9)">C4</text><text transform="matrix(0.0761 0 0.0478 0.0229 843.4 117.9)">C5</text><text transform="matrix(0.0751 0 -0.0478 0.0223 221.9 115.9)">B3</text><text transform="matrix(0.0751 0 -0.0465 0.0223 230.3 115.9)">B4</text><text transform="matrix(0.0751 0 -0.0452 0.0223 238.6 115.9)">B5</text><text transform="matrix(0.0751 0 -0.0439 0.0223 247 115.9)">B6</text><text transform="matrix(0.0751 0 -0.0427 0.0223 255.3 115.9)">B7</text><text transform="matrix(0.0751 0 -0.0414 0.0223 263.6 115.9)">B8</text><text transform="matrix(0.0751 0 -0.0401 0.0223 272 115.9)">B1</text><text transform="matrix(0.0751 0 -0.0388 0.0223 280.3 115.9)">B2</text><text transform="matrix(0.0751 0 -0.0376 0.0223 288.7 115.9)">B3</text><text transform="matrix(0.0751 0 -0.0363 0.0223 297 115.9)">B4</text><text transform="matrix(0.0751 0 -0.035 0.0223 305.3 115.9)">B5</text><text transform="matrix(0.0751 0 -0.0338 0.0223 313.7 115.9)">B6</text><text transform="matrix(0.0751 0 -0.0325 0.0223 322 115.9)">B7</text><text transform="matrix(0.0751 0 -0.0312 0.0223 330.4 115.9)">B8</text><text transform="matrix(0.0751 0 -0.0299 0.0223 338.7 115.9)">B1</text><text transform="matrix(0.0751 0 -0.0287 0.0223 347 115.9)">B2</text><text transform="matrix(0.0751 0 -0.0274 0.0223 355.4 115.9)">B3</text><text transform="matrix(0.0751 0 -0.0261 0.0223 363.7 115.9)">B4</text><text transform="matrix(0.0751 0 -0.0248 0.0223 372.1 115.9)">B5</text><text transform="matrix(0.0751 0 -0.0236 0.0223 380.4 115.9)">B6</text><text transform="matrix(0.0751 0 -0.0223 0.0223 388.7 115.9)">B7</text><text transform="matrix(0.0751 0 -0.021 0.0223 397.1 115.9)">B8</text><text transform="matrix(0.0751 0 -0.0197 0.0223 405.4 115.9)">B1</text><text transform="matrix(0.0751 0 -0.0185 0.0223 413.8 115.9)">B2</text><text transform="matrix(0.0751 0 -0.0172 0.0223 422.1 115.9)">B3</text><text transform="matrix(0.0751 0 -0.0159 0.0223 430.4 115.9)">B4</text><text transform="matrix(0.0751 0 -0.0146 0.0223 438.8 115.9)">B5</text><text transform="matrix(0.0751 0 -0.0134 0.0223 447.1 115.9)">B6</text><text transform="matrix(0.0751 0 -0.0121 0.0223 455.5 115.9)">B7</text><text transform="matrix(0.0751 0 -0.0108 0.0223 463.8 115.9)">B8</text><text transform="matrix(0.0751 0 -0.0096 0.0223 472.1 115.9)">B1</text><text transform="matrix(0.0751 0 -0.0083 0.0223 480.5 115.9)">B2</text><text transform="matrix(0.0751 0 -0.007 0.0223 488.8 115.9)">B3</text><text transform="matrix(0.0751 0 -0.0057 0.0223 497.2 115.9)">B4</text><text transform="matrix(0.0751 0 -0.0045 0.0223 505.5 115.9)">B5</text><text transform="matrix(0.0751 0 -0.0032 0.0223 513.8 115.9)">B6</text><text transform="matrix(0.0751 0 -0.0019 0.0223 522.2 115.9)">B7</text><text transform="matrix(0.0751 0 -0.0006 0.0223 530.5 115.9)">B8</text><text transform="matrix(0.0751 0 0.0006 0.0223 538.9 115.9)">B1</text><text transform="matrix(0.0751 0 0.0019 0.0223 547.2 115.9)">B2</text><text transform="matrix(0.0751 0 0.0032 0.0223 555.6 115.9)">B3</text><text transform="matrix(0.0751 0 0.0045 0.0223 563.9 115.9)">B4</text><text transform="matrix(0.0751 0 0.0057 0.0223 572.2 115.9)">B5</text><text transform="matrix(0.0751 0 0.007 0.0223 580.6 115.9)">B6</text><text transform="matrix(0.0751 0 0.0083 0.0223 588.9 115.9)">B7</text><text transform="matrix(0.0751 0 0.0096 0.0223 597.3 115.9)">B8</text><text transform="matrix(0.0751 0 0.0108 0.0223 605.6 115.9)">B1</text><text transform="matrix(0.0751 0 0.0121 0.0223 613.9 115.9)">B2</text><text transform="matrix(0.0751 0 0.0134 0.0223 622.3 115.9)">B3</text><text transform="matrix(0.0751 0 0.0146 0.0223 630.6 115.9)">B4</text><text transform="matrix(0.0751 0 0.0159 0.0223 639 115.9)">B5</text><text transform="matrix(0.0751 0 0.0172 0.0223 647.3 115.9)">B6</text><text transform="matrix(0.0751 0 0.0185 0.0223 655.6 115.9)">B7</text><text transform="matrix(0.0751 0 0.0197 0.0223 664 115.9)">B8</text><text transform="matrix(0.0751 0 0.021 0.0223 672.3 115.9)">B1</text><text transform="matrix(0.0751 0 0.0223 0.0223 680.7 115.9)">B2</text><text transform="matrix(0.0751 0 0.0236 0.0223 689 115.9)">B3</text><text transform="matrix(0.0751 0 0.0248 0.0223 697.3 115.9)">B4</text><text transform="matrix(0.0751 0 0.0261 0.0223 705.7 115.9)">B5</text><text transform="matrix(0.0751 0 0.0274 0.0223 714 115.9)">B6</text><text transform="matrix(0.0751 0 0.0287 0.0223 722.4 115.9)">B7</text><text transform="matrix(0.0751 0 0.0299 0.0223 730.7 115.9)">B8</text><text transform="matrix(0.0751 0 0.0312 0.0223 739 115.9)">B1</text><text transform="matrix(0.0751 0 0.0325 0.0223 747.4 115.9)">B2</text><text transform="matrix(0.0751 0 0.0338 0.0223 755.7 115.9)">B3</text><text transform="matrix(0.0751 0 0.035 0.0223 764.1 115.9)">B4</text><text transform="matrix(0.0751 0 0.0363 0.0223 772.4 115.9)">B5</text><text transform="matrix(0.0751 0 0.0376 0.0223 780.7 115.9)">B6</text><text transform="matrix(0.0751 0 0.0388 0.0223 789.1 115.9)">B7</text><text transform="matrix(0.0751 0 0.0401 0.0223 797.4 115.9)">B8</text><text transform="matrix(0.0751 0 0.0414 0.0223 805.8 115.9)">B1</text><text transform="matrix(0.0751 0 0.0427 0.0223 814.1 115.9)">B2</text><text transform="matrix(0.0751 0 0.0439 0.0223 822.4 115.9)">B3</text><text transform="matrix(0.0751 0 0.0452 0.0223 830.8 115.9)">B4</text><text transform="matrix(0.0751 0 0.0465 0.0223 839.1 115.9)">B5</text><text transform="matrix(0.0751 0 0.0478 0.0223 847.5 115.9)">B6</text></g><g fill="#d0d0d0" font-weight="bold" font-family="Liberation Sans" font-size="50.0" text-anchor="middle" dominant-baseline="central"></g></svg>
<svg style="left:246px;top:105px" width="572" height="593" viewBox="246 105 572 593"><defs><filter id="blr" x="-50%" y="-50%" width="200%" height="200%"><feGaussianBlur stdDeviation="0.9"/></filter></defs><path d="M268 228 L322 224 L326 232 L280 236 Z" fill="#9a9a9a" opacity="0.35"/><path d="M268 199 L300 199.5 L300 227.5 L280 228.5 Z" fill="#71747c"/><path d="M300 199.5 L309.5 187.5 L319.5 216.5 L300 227.5 Z" fill="#63666e"/><path d="M283 200 L290 228 M293 200 L297 228 M303 196 L316 220" stroke="#4a4d53" stroke-width="0.8"/><path d="M267.5 198.5 L279.5 187.5 L309.5 187.5 L300 199.5 Z" fill="#323234"/><path d="M267.5 199 L300 199.8" stroke="#222" stroke-width="1.2"/><ellipse cx="496.1" cy="271.3" rx="1.7" ry="1.0" fill="#606060" opacity="0.65" filter="url(#blr)"/><ellipse cx="611.0" cy="280.3" rx="1.9" ry="1.2" fill="#606060" opacity="0.65" filter="url(#blr)"/><ellipse cx="502.2" cy="291.6" rx="2.8" ry="1.8" fill="#606060" opacity="0.65" filter="url(#blr)"/><ellipse cx="593.6" cy="299.0" rx="2.8" ry="1.8" fill="#606060" opacity="0.65" filter="url(#blr)"/><ellipse cx="388.9" cy="318.3" rx="2.5" ry="1.6" fill="#606060" opacity="0.65" filter="url(#blr)"/><ellipse cx="510.0" cy="314.0" rx="3.9" ry="2.4" fill="#606060" opacity="0.65" filter="url(#blr)"/><ellipse cx="419.0" cy="330.6" rx="3.3" ry="2.1" fill="#606060" opacity="0.65" filter="url(#blr)"/><ellipse cx="575.4" cy="320.0" rx="3.9" ry="2.4" fill="#606060" opacity="0.65" filter="url(#blr)"/><ellipse cx="451.7" cy="344.6" rx="4.4" ry="2.8" fill="#606060" opacity="0.65" filter="url(#blr)"/><ellipse cx="694.5" cy="347.5" rx="2.8" ry="1.8" fill="#606060" opacity="0.65" filter="url(#blr)"/><ellipse cx="654.5" cy="354.8" rx="3.3" ry="2.1" fill="#606060" opacity="0.65" filter="url(#blr)"/><ellipse cx="612.0" cy="360.4" rx="5.0" ry="3.1" fill="#606060" opacity="0.65" filter="url(#blr)"/><ellipse cx="430.3" cy="389.5" rx="5.0" ry="3.1" fill="#606060" opacity="0.65" filter="url(#blr)"/><ellipse cx="380.2" cy="398.0" rx="3.9" ry="2.4" fill="#606060" opacity="0.65" filter="url(#blr)"/><ellipse cx="328.5" cy="406.5" rx="3.3" ry="2.1" fill="#606060" opacity="0.65" filter="url(#blr)"/><ellipse cx="610.5" cy="410.0" rx="5.5" ry="3.5" fill="#606060" opacity="0.65" filter="url(#blr)"/><ellipse cx="659.5" cy="430.2" rx="4.4" ry="2.8" fill="#606060" opacity="0.65" filter="url(#blr)"/><ellipse cx="713.5" cy="451.5" rx="3.9" ry="2.4" fill="#606060" opacity="0.65" filter="url(#blr)"/><ellipse cx="466.1" cy="436.2" rx="6.1" ry="3.8" fill="#606060" opacity="0.65" filter="url(#blr)"/><ellipse cx="547.9" cy="446.5" rx="5.5" ry="3.5" fill="#606060" opacity="0.65" filter="url(#blr)"/><ellipse cx="432.3" cy="474.4" rx="4.4" ry="2.8" fill="#606060" opacity="0.65" filter="url(#blr)"/><ellipse cx="564.4" cy="491.9" rx="4.4" ry="2.8" fill="#606060" opacity="0.65" filter="url(#blr)"/><ellipse cx="391.2" cy="520.7" rx="3.9" ry="2.4" fill="#606060" opacity="0.65" filter="url(#blr)"/><ellipse cx="584.3" cy="548.3" rx="3.9" ry="2.4" fill="#606060" opacity="0.65" filter="url(#blr)"/><ellipse cx="484.2" cy="357.1" rx="8.0" ry="5.0" fill="#606060" opacity="0.4" filter="url(#blr)"/><ellipse cx="476.2" cy="380.9" rx="8.0" ry="5.0" fill="#606060" opacity="0.4" filter="url(#blr)"/><ellipse cx="497.9" cy="402.5" rx="8.0" ry="5.0" fill="#606060" opacity="0.4" filter="url(#blr)"/><ellipse cx="538.5" cy="407.2" rx="8.0" ry="5.0" fill="#606060" opacity="0.4" filter="url(#blr)"/><ellipse cx="569.8" cy="390.6" rx="8.0" ry="5.0" fill="#606060" opacity="0.4" filter="url(#blr)"/><ellipse cx="572.4" cy="365.6" rx="8.0" ry="5.0" fill="#606060" opacity="0.4" filter="url(#blr)"/><rect x="495.6" y="268.1" width="3.0" height="1.8" fill="#8e9114"/><rect x="495.6" y="266.7" width="3.0" height="1.5" fill="#525510"/><rect x="611.2" y="277.1" width="3.5" height="2.1" fill="#8e9114"/><rect x="611.2" y="275.4" width="3.5" height="1.7" fill="#525510"/><rect x="501.7" y="287.3" width="5.0" height="3.0" fill="#8e9114"/><rect x="501.7" y="284.9" width="5.0" height="2.5" fill="#525510"/><rect x="594.1" y="294.7" width="5.0" height="3.0" fill="#8e9114"/><rect x="594.1" y="292.2" width="5.0" height="2.5" fill="#525510"/><rect x="386.6" y="306.1" width="4.5" height="2.7" fill="#8e9114"/><rect x="386.6" y="303.8" width="4.5" height="2.2" fill="#525510"/><rect x="509.5" y="308.6" width="7.0" height="4.2" fill="#8e9114"/><rect x="509.5" y="305.1" width="7.0" height="3.5" fill="#525510"/><rect x="418.0" y="318.3" width="6.0" height="3.6" fill="#8e9114"/><rect x="418.0" y="315.3" width="6.0" height="3.0" fill="#525510"/><rect x="574.9" y="314.6" width="7.0" height="4.2" fill="#8e9114"/><rect x="574.9" y="311.1" width="7.0" height="3.5" fill="#525510"/><rect x="451.7" y="332.2" width="8.0" height="4.8" fill="#8e9114"/><rect x="451.7" y="328.2" width="8.0" height="4.0" fill="#525510"/><rect x="709.0" y="334.2" width="5.0" height="3.0" fill="#8e9114"/><rect x="709.0" y="331.8" width="5.0" height="2.5" fill="#525510"/><rect x="666.5" y="341.5" width="6.0" height="3.6" fill="#8e9114"/><rect x="666.5" y="338.5" width="6.0" height="3.0" fill="#525510"/><rect x="621.5" y="347.9" width="9.0" height="5.4" fill="#8e9114"/><rect x="621.5" y="343.4" width="9.0" height="4.5" fill="#525510"/><rect x="429.8" y="379.0" width="9.0" height="5.4" fill="#8e9114"/><rect x="429.8" y="374.6" width="9.0" height="4.5" fill="#525510"/><rect x="377.7" y="387.6" width="7.0" height="4.2" fill="#8e9114"/><rect x="377.7" y="384.1" width="7.0" height="3.5" fill="#525510"/><rect x="323.5" y="396.2" width="6.0" height="3.6" fill="#8e9114"/><rect x="323.5" y="393.2" width="6.0" height="3.0" fill="#525510"/><rect x="621.5" y="398.4" width="10.0" height="6.0" fill="#8e9114"/><rect x="621.5" y="393.5" width="10.0" height="5.0" fill="#525510"/><rect x="675.5" y="419.8" width="8.0" height="4.8" fill="#8e9114"/><rect x="675.5" y="415.8" width="8.0" height="4.0" fill="#525510"/><rect x="734.0" y="442.1" width="7.0" height="4.2" fill="#8e9114"/><rect x="734.0" y="438.6" width="7.0" height="3.5" fill="#525510"/><rect x="469.6" y="426.6" width="11.0" height="6.7" fill="#8e9114"/><rect x="469.6" y="421.1" width="11.0" height="5.4" fill="#525510"/><rect x="557.9" y="436.9" width="10.0" height="6.0" fill="#8e9114"/><rect x="557.9" y="432.0" width="10.0" height="5.0" fill="#525510"/><rect x="434.3" y="467.0" width="8.0" height="4.8" fill="#8e9114"/><rect x="434.3" y="463.0" width="8.0" height="4.0" fill="#525510"/><rect x="577.4" y="485.5" width="8.0" height="4.8" fill="#8e9114"/><rect x="577.4" y="481.5" width="8.0" height="4.0" fill="#525510"/><rect x="389.7" y="515.3" width="7.0" height="4.2" fill="#8e9114"/><rect x="389.7" y="511.9" width="7.0" height="3.5" fill="#525510"/><rect x="600.8" y="544.9" width="7.0" height="4.2" fill="#8e9114"/><rect x="600.8" y="541.4" width="7.0" height="3.5" fill="#525510"/><rect x="516.0" y="333.2" width="14.0" height="9.2" fill="#8e9114"/><rect x="516.0" y="325.6" width="14.0" height="7.6" fill="#525510"/><rect x="516.5" y="326.1" width="13.0" height="7.1" fill="none" stroke="#6a6d12" stroke-width="1"/><path d="M519.5 334.2v7.2M524.7 334.2v7.2M527.9 334.2v7.2" stroke="#a3a624" stroke-width="1"/><path d="M522.3 333.2v9.2" stroke="#6e7110" stroke-width="1"/><path d="M480 372 L509 368 L509 398 L560 398 L575 396 L572 410 L548 416 L525 412 L512 410 L492 412 L478 400 Z" fill="#5e5e5e" opacity="0.7" filter="url(#blr)"/><rect x="508.5" y="362" width="52.5" height="36" fill="#7a7d85"/><path d="M517.5 363v35M524.5 363v35M545 363v35M552 363v35" stroke="#60636a" stroke-width="1"/><circle cx="520" cy="390" r="1.3" fill="#333"/><path d="M508.5 398h52.5" stroke="#55585e" stroke-width="1"/><path d="M510.5 329 L558.7 329 L561 362 L508.5 362 Z" fill="#46474c"/><path d="M511 329.5 L558.3 329.5 L560.5 361.5 L509 361.5 Z" fill="none" stroke="#57585d" stroke-width="1"/><path d="M513 331.5h43l2 28h-47z" fill="#3f4045"/><path d="M534.5 331v30" stroke="#55565b" stroke-width="1"/><path d="M508.5 361.5h52.5" stroke="#2a2a2e" stroke-width="2.5"/><path d="M527 362.5h14" stroke="#8a3030" stroke-width="1"/><path d="M515 332.5h3" stroke="#a03030" stroke-width="1.2"/><rect x="551.5" y="336.7" width="14.0" height="9.2" fill="#8e9114"/><rect x="551.5" y="329.1" width="14.0" height="7.6" fill="#525510"/><rect x="552.0" y="329.6" width="13.0" height="7.1" fill="none" stroke="#6a6d12" stroke-width="1"/><path d="M555.0 337.7v7.2M560.2 337.7v7.2M563.4 337.7v7.2" stroke="#a3a624" stroke-width="1"/><path d="M557.8 336.7v9.2" stroke="#6e7110" stroke-width="1"/><rect x="485.2" y="346.1" width="16.0" height="10.6" fill="#8e9114"/><rect x="485.2" y="337.5" width="16.0" height="8.6" fill="#525510"/><rect x="485.7" y="338.0" width="15.0" height="8.1" fill="none" stroke="#6a6d12" stroke-width="1"/><path d="M489.2 347.1v8.6M495.1 347.1v8.6M498.8 347.1v8.6" stroke="#a3a624" stroke-width="1"/><path d="M492.4 346.1v10.6" stroke="#6e7110" stroke-width="1"/><rect x="476.7" y="369.9" width="17.0" height="11.2" fill="#8e9114"/><rect x="476.7" y="360.7" width="17.0" height="9.2" fill="#525510"/><rect x="477.2" y="361.2" width="16.0" height="8.7" fill="none" stroke="#6a6d12" stroke-width="1"/><path d="M480.9 370.9v9.2M487.2 370.9v9.2M491.1 370.9v9.2" stroke="#a3a624" stroke-width="1"/><path d="M484.3 369.9v11.2" stroke="#6e7110" stroke-width="1"/><rect x="498.1" y="391.4" width="17.5" height="11.5" fill="#8e9114"/><rect x="498.1" y="382.0" width="17.5" height="9.5" fill="#525510"/><rect x="498.6" y="382.5" width="16.5" height="9.0" fill="none" stroke="#6a6d12" stroke-width="1"/><path d="M502.5 392.4v9.5M509.0 392.4v9.5M513.0 392.4v9.5" stroke="#a3a624" stroke-width="1"/><path d="M506.0 391.4v11.5" stroke="#6e7110" stroke-width="1"/><rect x="539.0" y="396.2" width="17.0" height="11.2" fill="#8e9114"/><rect x="539.0" y="387.0" width="17.0" height="9.2" fill="#525510"/><rect x="539.5" y="387.5" width="16.0" height="8.7" fill="none" stroke="#6a6d12" stroke-width="1"/><path d="M543.2 397.2v9.2M549.5 397.2v9.2M553.5 397.2v9.2" stroke="#a3a624" stroke-width="1"/><path d="M546.6 396.2v11.2" stroke="#6e7110" stroke-width="1"/><rect x="570.0" y="379.6" width="17.5" height="11.5" fill="#8e9114"/><rect x="570.0" y="370.1" width="17.5" height="9.5" fill="#525510"/><rect x="570.5" y="370.6" width="16.5" height="9.0" fill="none" stroke="#6a6d12" stroke-width="1"/><path d="M574.4 380.6v9.5M580.9 380.6v9.5M584.9 380.6v9.5" stroke="#a3a624" stroke-width="1"/><path d="M577.9 379.6v11.5" stroke="#6e7110" stroke-width="1"/><rect x="573.1" y="354.6" width="16.5" height="10.9" fill="#8e9114"/><rect x="573.1" y="345.7" width="16.5" height="8.9" fill="#525510"/><rect x="573.6" y="346.2" width="15.5" height="8.4" fill="none" stroke="#6a6d12" stroke-width="1"/><path d="M577.3 355.6v8.9M583.4 355.6v8.9M587.2 355.6v8.9" stroke="#a3a624" stroke-width="1"/><path d="M580.6 354.6v10.9" stroke="#6e7110" stroke-width="1"/><circle cx="710" cy="123" r="11" fill="#f4f4f4" opacity="0.55"/><circle cx="740" cy="123" r="11" fill="#f4f4f4" opacity="0.55"/><circle cx="770" cy="123" r="11" fill="#f4f4f4" opacity="0.55"/><circle cx="800" cy="123" r="11" fill="#f4f4f4" opacity="0.55"/><rect x="703.5" y="117.5" width="13" height="9" fill="none" stroke="#777" stroke-width="1.5"/><path d="M708 129h5M710 127v2" stroke="#777" stroke-width="1.5"/><circle cx="740" cy="123" r="3.2" fill="#777"/><path d="M740 114v3.5M740 128.5v3.5M731 123h3.5M745 123h3.5M733 116.6l2.5 2.5M743 126.9l2.5 2.5M733 129.4l2.5-2.5M743 119.1l2.5-2.5" stroke="#777" stroke-width="1.3"/><circle cx="770" cy="123" r="3.2" fill="#777"/><path d="M770 114v3.5M770 128.5v3.5M761 123h3.5M775 123h3.5M763 116.6l2.5 2.5M773 126.9l2.5 2.5M763 129.4l2.5-2.5M773 119.1l2.5-2.5" stroke="#777" stroke-width="1.3"/><rect x="792.5" y="117.5" width="10" height="10.5" fill="#777"/><path d="M802 121l5-3.5v11l-5-3.5z" fill="#777"/><text x="251.5" y="690.5" font-family="Liberation Sans" font-size="14" letter-spacing="0.5" fill="#0a2cff">www.historian.by</text></svg>
<svg style="left:0;top:0" width="1024" height="725"><text x="16" y="17.8" font-family="Liberation Sans" font-size="12.3" fill="#f2f2f2" text-anchor="middle" stroke="#f2f2f2" stroke-width="0.3">N</text><path d="M9 21.5h14" stroke="#1e8fff" stroke-width="1.5"/><path d="M41 13 a7 7 0 0 1 12.5 -3.5" stroke="#f0b42a" stroke-width="3" fill="none"/><path d="M55 6v7h-7z" fill="#f0b42a"/><path d="M53.5 15 a7 7 0 0 1 -12.5 3.5" stroke="#8aa0b8" stroke-width="3" fill="none"/><path d="M39 22v-7h7z" fill="#8aa0b8"/><path d="M61.5 6.5h8l4 4v11h-12z" fill="#f2f2f2"/><path d="M69.5 6.5v4h4" fill="#cfcfcf"/><path d="M72 14l1.3 2.7 3 .4-2.2 2 .6 3-2.7-1.5-2.7 1.5.6-3-2.2-2 3-.4z" fill="#f4a81c"/><rect x="83" y="6" width="15" height="15" rx="1" fill="#3d9ee0"/><rect x="85" y="7" width="11" height="6" fill="#f4f8fc"/><path d="M87 9h7M87 11h7" stroke="#7a8a9a" stroke-width="0.8"/><rect x="87" y="15" width="7" height="6" fill="#f4f8fc"/><rect x="89" y="16" width="2" height="4" fill="#234"/><rect x="105" y="6" width="15" height="15" rx="1" fill="#3d9ee0"/><rect x="107" y="7" width="11" height="6" fill="#f4f8fc"/><path d="M109 9h7M109 11h7" stroke="#7a8a9a" stroke-width="0.8"/><rect x="109" y="15" width="7" height="6" fill="#f4f8fc"/><rect x="111" y="16" width="2" height="4" fill="#234"/><rect x="131" y="6" width="11" height="11" fill="#555"/><rect x="127" y="10" width="12" height="12" fill="#4d4d4d" stroke="#0c0c0c" stroke-width="1"/><rect x="130" y="11" width="7" height="4" fill="#666"/><rect x="130" y="17" width="6" height="5" fill="#2a2a2a"/><path d="M151 12 a6.5 6.5 0 1 1 8 10" stroke="#555" stroke-width="3" fill="none"/><path d="M149 7v8h8z" fill="#555"/><path d="M185 12 a6.5 6.5 0 1 0 -8 10" stroke="#555" stroke-width="3" fill="none"/><path d="M187 7v8h-8z" fill="#555"/><path d="M194 6h7l2 2v10h-9z" fill="#6e6e6e"/><path d="M197.5 9.5h7l3 3v9.5h-10z" fill="#7c7c7c" stroke="#0c0c0c" stroke-width="1"/><path d="M199.5 15h6M199.5 17h6M199.5 19h6" stroke="#555" stroke-width="0.8"/><path d="M218 9l10 10M228 9l-10 10" stroke="#4a4a4a" stroke-width="2.4"/><path d="M240 6v14l3.5-3.5 3 5.5 2-1-3-5.5h5z" fill="#d8d8d8"/><path d="M266 16v-10" stroke="#1a2cff" stroke-width="2"/><path d="M266 16h9" stroke="#ff2020" stroke-width="2"/><path d="M266 16l-6 6" stroke="#22c022" stroke-width="2"/><path d="M263 13l-5 4" stroke="#1a2cff" stroke-width="1.5"/><path d="M290 16v-10" stroke="#1a2cff" stroke-width="2"/><path d="M290 16h9" stroke="#ff2020" stroke-width="2"/><path d="M290 16l-6 6" stroke="#22c022" stroke-width="2"/><circle cx="310" cy="14" r="7.5" fill="none" stroke="#9a9a9a" stroke-width="1.3"/><circle cx="310" cy="14" r="5" fill="none" stroke="#777" stroke-width="1"/><circle cx="310" cy="14" r="3.3" fill="none" stroke="#2a8a2a" stroke-width="1.5"/><path d="M306.5 14h7" stroke="#d02020" stroke-width="1"/><path d="M310 10.5v7" stroke="#2040d0" stroke-width="1"/><path d="M333 16v-10" stroke="#1a2cff" stroke-width="2"/><path d="M333 16h9" stroke="#ff2020" stroke-width="2"/><path d="M333 16l-6 6" stroke="#22c022" stroke-width="2"/><path d="M354 16v-10" stroke="#1a2cff" stroke-width="2"/><path d="M354 16h9" stroke="#ff2020" stroke-width="2"/><path d="M354 16l-6 6" stroke="#22c022" stroke-width="2"/><circle cx="354" cy="16" r="3.5" fill="#2aa02a"/><path d="M371 8v12l11-6z" fill="#4fa84f"/><path d="M393 8v12l11-6z" fill="#4fa84f"/><path d="M415 8v12l11-6z" fill="#4a4a4a"/><g transform="translate(436 7)"><path d="M1.2 1.2 L7 7" stroke="#d8d8d8" stroke-width="1.3"/><path d="M8 8 L13.8 13.8" stroke="#2d8ee8" stroke-width="2.6" stroke-linecap="round"/><path d="M1.8 13.6 L9.2 6.2" stroke="#f0f0f0" stroke-width="2.4" stroke-linecap="round"/><path d="M8.2 7.2 A3.9 3.9 0 0 1 12.6 1.2 L10.4 3.6 L11.6 4.8 L14 2.6 A3.9 3.9 0 0 1 8.2 7.2 Z" fill="#f0f0f0"/></g><path d="M461 11.5h6" stroke="#eee" stroke-width="1.2"/><path d="M460.5 14h7l-3.5 3.5z" fill="#eee"/><path d="M954 15.8h9" stroke="#f0f0f0" stroke-width="1.6"/><path d="M982.5 12v-2.5h7v6.5h-1.8" stroke="#f0f0f0" stroke-width="1.2" fill="none"/><rect x="980.5" y="12.5" width="7" height="6" fill="none" stroke="#f0f0f0" stroke-width="1.3"/><path d="M1006.5 9.5l9 9M1015.5 9.5l-9 9" stroke="#f0f0f0" stroke-width="1.7"/><path d="M1007 39.5l4 4l4 -4" stroke="#f0f0f0" stroke-width="1.7" fill="none"/><path d="M191.2 67.7h7.5l-3.75 4.3z" fill="#9a9a9a"/><path d="M209.8 64.5h3.6v6.2h-3.6z" stroke="#9a9a9a" stroke-width="1.4" fill="#5a5a5a"/><path d="M208.0 70.9h7.2M211.6 70.9v3.6" stroke="#9a9a9a" stroke-width="1.3" fill="none"/><path d="M223.5 65.5l8 8M231.5 65.5l-8 8" stroke="#a8a8a8" stroke-width="1.9"/><path d="M225.8 113.9l3.7 -3.7l3.7 3.7" stroke="#9a9a9a" stroke-width="1.3" fill="none"/><path d="M225.8 334.6l3.7 3.7l3.7 -3.7" stroke="#9a9a9a" stroke-width="1.3" fill="none"/><path d="M14.4 347.3l-3.7 3.7l3.7 3.7" stroke="#9a9a9a" stroke-width="1.3" fill="none"/><path d="M210.6 347.3l3.7 3.7l-3.7 3.7" stroke="#9a9a9a" stroke-width="1.3" fill="none"/><path d="M225.8 397.9l3.7 -3.7l3.7 3.7" stroke="#9a9a9a" stroke-width="1.3" fill="none"/><path d="M225.8 522.1l3.7 3.7l3.7 -3.7" stroke="#9a9a9a" stroke-width="1.3" fill="none"/><g transform="translate(9 84)"><path d="M1.2 1.2 L7 7" stroke="#d8d8d8" stroke-width="1.3"/><path d="M8 8 L13.8 13.8" stroke="#2d8ee8" stroke-width="2.6" stroke-linecap="round"/><path d="M1.8 13.6 L9.2 6.2" stroke="#f0f0f0" stroke-width="2.4" stroke-linecap="round"/><path d="M8.2 7.2 A3.9 3.9 0 0 1 12.6 1.2 L10.4 3.6 L11.6 4.8 L14 2.6 A3.9 3.9 0 0 1 8.2 7.2 Z" fill="#f0f0f0"/></g><rect x="29" y="84" width="7" height="6" fill="#3ac23a"/><path d="M38 90.5l4-6.5l4 6.5z" fill="#3a9af0"/><circle cx="32.5" cy="95.5" r="3.6" fill="#e84a2a"/><path d="M42 91.5l3.8 3.8l-3.8 3.8l-3.8-3.8z" fill="#f2a830"/><path d="M49.5 83v16M75.5 83v16" stroke="#222" stroke-width="1"/><path d="M54 84h9l4 4v11h-13z" fill="#8e8e8e"/><path d="M63 84v4h4" fill="#6e6e6e"/><path d="M61 98l9-9" stroke="#777" stroke-width="2.5"/><path d="M80 84h7l3 3v12h-10z" fill="#8e8e8e"/><path d="M84 86h6v13h-6z" fill="#7a7a7a"/><path d="M93 92l1.2 2.5 2.8.4-2 1.9.5 2.8-2.5-1.4-2.5 1.4.5-2.8-2-1.9 2.8-.4z" fill="#777"/><path d="M101 84h8l3 3v12h-11z" fill="#8e8e8e"/><path d="M112 92l1.2 2.5 2.8.4-2 1.9.5 2.8-2.5-1.4-2.5 1.4.5-2.8-2-1.9 2.8-.4z" fill="#6e6e6e"/><path d="M123 87l10 10M133 87l-10 10" stroke="#666" stroke-width="2.5"/><rect x="140.5" y="86.5" width="15" height="11" fill="#8a8a8a" stroke="#9a9a9a" stroke-width="1"/><rect x="142.5" y="88.5" width="11" height="7" fill="#777"/><path d="M144 89.5v5" stroke="#333" stroke-width="1"/><path d="M164 84l5 8M168 84l-3 8" stroke="#8a8a8a" stroke-width="1.2"/><circle cx="164" cy="96" r="2.3" fill="none" stroke="#8a8a8a" stroke-width="1.2"/><circle cx="171" cy="95" r="2.3" fill="none" stroke="#8a8a8a" stroke-width="1.2"/><path d="M181 84h7l2 2v10h-9z" fill="#8a8a8a"/><path d="M184.5 87.5h7l3 3v9h-10z" fill="#9a9a9a" stroke="#333" stroke-width="1"/><path d="M186.5 92h6M186.5 94h6M186.5 96h6" stroke="#777" stroke-width="0.8"/><path d="M200 85h10v12h-10z" fill="#7d7d7d"/><rect x="203" y="84" width="4" height="3" fill="#8a8a8a"/><path d="M205.5 89.5h7l3 3v7h-10z" fill="#9a9a9a" stroke="#333" stroke-width="1"/><path d="M207.5 94h6M207.5 96h6" stroke="#777" stroke-width="0.8"/><rect x="11.5" y="108.5" width="8" height="8" fill="#2e2e2e" stroke="#3e3e3e" stroke-width="1"/><path d="M13 112.5h5" stroke="#bbb" stroke-width="1"/><g transform="translate(26 105)"><rect x="0.5" y="0.5" width="12" height="14" fill="#f7d868" stroke="#e8b838" stroke-width="1"/><rect x="2" y="2" width="8" height="11" fill="#fde58a"/><path d="M9 14.5 l3 -3 v3z" fill="#e9b83c"/></g><rect x="30.5" y="126.5" width="8" height="8" fill="#2e2e2e" stroke="#3e3e3e" stroke-width="1"/><path d="M32 130.5h5" stroke="#bbb" stroke-width="1"/><path d="M34.5 128v5" stroke="#bbb" stroke-width="1"/><g transform="translate(45 123)"><rect x="0.5" y="0.5" width="12" height="14" fill="#f7d868" stroke="#e8b838" stroke-width="1"/><rect x="2" y="2" width="8" height="11" fill="#fde58a"/><path d="M9 14.5 l3 -3 v3z" fill="#e9b83c"/></g><rect x="30.5" y="144.5" width="8" height="8" fill="#2e2e2e" stroke="#3e3e3e" stroke-width="1"/><path d="M32 148.5h5" stroke="#bbb" stroke-width="1"/><path d="M34.5 146v5" stroke="#bbb" stroke-width="1"/><g transform="translate(45 141)"><rect x="0.5" y="0.5" width="12" height="14" fill="#f7d868" stroke="#e8b838" stroke-width="1"/><rect x="2" y="2" width="8" height="11" fill="#fde58a"/><path d="M9 14.5 l3 -3 v3z" fill="#e9b83c"/></g><rect x="30.5" y="162.5" width="8" height="8" fill="#2e2e2e" stroke="#3e3e3e" stroke-width="1"/><path d="M32 166.5h5" stroke="#bbb" stroke-width="1"/><path d="M34.5 164v5" stroke="#bbb" stroke-width="1"/><g transform="translate(45 159)"><rect x="0.5" y="0.5" width="12" height="14" fill="#f7d868" stroke="#e8b838" stroke-width="1"/><rect x="2" y="2" width="8" height="11" fill="#fde58a"/><path d="M9 14.5 l3 -3 v3z" fill="#e9b83c"/></g><rect x="30.5" y="180.5" width="8" height="8" fill="#2e2e2e" stroke="#3e3e3e" stroke-width="1"/><path d="M32 184.5h5" stroke="#bbb" stroke-width="1"/><path d="M34.5 182v5" stroke="#bbb" stroke-width="1"/><g transform="translate(45 177)"><rect x="0.5" y="0.5" width="12" height="14" fill="#f7d868" stroke="#e8b838" stroke-width="1"/><rect x="2" y="2" width="8" height="11" fill="#fde58a"/><path d="M9 14.5 l3 -3 v3z" fill="#e9b83c"/></g><rect x="30.5" y="198.5" width="8" height="8" fill="#2e2e2e" stroke="#3e3e3e" stroke-width="1"/><path d="M32 202.5h5" stroke="#bbb" stroke-width="1"/><path d="M34.5 200v5" stroke="#bbb" stroke-width="1"/><g transform="translate(45 195)"><rect x="0.5" y="0.5" width="12" height="14" fill="#f7d868" stroke="#e8b838" stroke-width="1"/><rect x="2" y="2" width="8" height="11" fill="#fde58a"/><path d="M9 14.5 l3 -3 v3z" fill="#e9b83c"/></g><rect x="30.5" y="216.5" width="8" height="8" fill="#2e2e2e" stroke="#3e3e3e" stroke-width="1"/><path d="M32 220.5h5" stroke="#bbb" stroke-width="1"/><path d="M34.5 218v5" stroke="#bbb" stroke-width="1"/><g transform="translate(45 213)"><rect x="0.5" y="0.5" width="12" height="14" fill="#f7d868" stroke="#e8b838" stroke-width="1"/><rect x="2" y="2" width="8" height="11" fill="#fde58a"/><path d="M9 14.5 l3 -3 v3z" fill="#e9b83c"/></g><rect x="30.5" y="234.5" width="8" height="8" fill="#2e2e2e" stroke="#3e3e3e" stroke-width="1"/><path d="M32 238.5h5" stroke="#bbb" stroke-width="1"/><path d="M34.5 236v5" stroke="#bbb" stroke-width="1"/><g transform="translate(45 231)"><rect x="0.5" y="0.5" width="12" height="14" fill="#f7d868" stroke="#e8b838" stroke-width="1"/><rect x="2" y="2" width="8" height="11" fill="#fde58a"/><path d="M9 14.5 l3 -3 v3z" fill="#e9b83c"/></g><rect x="30.5" y="252.5" width="8" height="8" fill="#2e2e2e" stroke="#3e3e3e" stroke-width="1"/><path d="M32 256.5h5" stroke="#bbb" stroke-width="1"/><path d="M34.5 254v5" stroke="#bbb" stroke-width="1"/><g transform="translate(45 249)"><rect x="0.5" y="0.5" width="12" height="14" fill="#f7d868" stroke="#e8b838" stroke-width="1"/><rect x="2" y="2" width="8" height="11" fill="#fde58a"/><path d="M9 14.5 l3 -3 v3z" fill="#e9b83c"/></g><rect x="30.5" y="270.5" width="8" height="8" fill="#2e2e2e" stroke="#3e3e3e" stroke-width="1"/><path d="M32 274.5h5" stroke="#bbb" stroke-width="1"/><path d="M34.5 272v5" stroke="#bbb" stroke-width="1"/><g transform="translate(45 267)"><rect x="0.5" y="0.5" width="12" height="14" fill="#f7d868" stroke="#e8b838" stroke-width="1"/><rect x="2" y="2" width="8" height="11" fill="#fde58a"/><path d="M9 14.5 l3 -3 v3z" fill="#e9b83c"/></g><rect x="30.5" y="288.5" width="8" height="8" fill="#2e2e2e" stroke="#3e3e3e" stroke-width="1"/><path d="M32 292.5h5" stroke="#bbb" stroke-width="1"/><path d="M34.5 290v5" stroke="#bbb" stroke-width="1"/><g transform="translate(45 285)"><rect x="0.5" y="0.5" width="12" height="14" fill="#f7d868" stroke="#e8b838" stroke-width="1"/><rect x="2" y="2" width="8" height="11" fill="#fde58a"/><path d="M9 14.5 l3 -3 v3z" fill="#e9b83c"/></g><rect x="30.5" y="306.5" width="8" height="8" fill="#2e2e2e" stroke="#3e3e3e" stroke-width="1"/><path d="M32 310.5h5" stroke="#bbb" stroke-width="1"/><path d="M34.5 308v5" stroke="#bbb" stroke-width="1"/><g transform="translate(45 303)"><rect x="0.5" y="0.5" width="12" height="14" fill="#f7d868" stroke="#e8b838" stroke-width="1"/><rect x="2" y="2" width="8" height="11" fill="#fde58a"/><path d="M9 14.5 l3 -3 v3z" fill="#e9b83c"/></g><rect x="30.5" y="324.5" width="8" height="8" fill="#2e2e2e" stroke="#3e3e3e" stroke-width="1"/><path d="M32 328.5h5" stroke="#bbb" stroke-width="1"/><path d="M34.5 326v5" stroke="#bbb" stroke-width="1"/><g transform="translate(45 321)"><rect x="0.5" y="0.5" width="12" height="14" fill="#f7d868" stroke="#e8b838" stroke-width="1"/><rect x="2" y="2" width="8" height="11" fill="#fde58a"/><path d="M9 14.5 l3 -3 v3z" fill="#e9b83c"/></g><rect x="26" y="339" width="13" height="4" fill="#f7d868"/><rect x="11" y="341" width="8" height="2" fill="#3a3a3a"/><path d="M15.5 370l6.5 6.5h-4v7h-5v-7h-4z" fill="#7e7e7e"/><path d="M77 375v6l3-3z" fill="#8a8a8a"/><g transform="translate(12 395)"><rect x="0.5" y="0.5" width="18" height="21" fill="#f6d35a" stroke="#fde68e" stroke-width="1"/><rect x="2" y="2" width="12" height="18" fill="#fbe27c"/><path d="M14 21.5 v-4 l3 -3 l2 2 v5z" fill="#eabf40"/></g><g transform="translate(12 429)"><rect x="0.5" y="0.5" width="18" height="21" fill="#f6d35a" stroke="#fde68e" stroke-width="1"/><rect x="2" y="2" width="12" height="18" fill="#fbe27c"/><path d="M14 21.5 v-4 l3 -3 l2 2 v5z" fill="#eabf40"/></g><g transform="translate(12 463)"><rect x="0.5" y="0.5" width="18" height="21" fill="#f6d35a" stroke="#fde68e" stroke-width="1"/><rect x="2" y="2" width="12" height="18" fill="#fbe27c"/><path d="M14 21.5 v-4 l3 -3 l2 2 v5z" fill="#eabf40"/></g><g transform="translate(12 497)"><rect x="0.5" y="0.5" width="18" height="21" fill="#f6d35a" stroke="#fde68e" stroke-width="1"/><rect x="2" y="2" width="12" height="18" fill="#fbe27c"/><path d="M14 21.5 v-4 l3 -3 l2 2 v5z" fill="#eabf40"/></g><rect x="12" y="530" width="19" height="1" fill="#b08a30"/><path d="M68.7 536.7l7.6 7.6M76.3 536.7l-7.6 7.6" stroke="#e8e8e8" stroke-width="1.8"/><path d="M157.7 536.7l7.6 7.6M165.3 536.7l-7.6 7.6" stroke="#e8e8e8" stroke-width="1.8"/><path d="M191.2 567.7h7.5l-3.75 4.3z" fill="#9a9a9a"/><path d="M209.8 564.5h3.6v6.2h-3.6z" stroke="#9a9a9a" stroke-width="1.4" fill="#5a5a5a"/><path d="M208.0 570.9h7.2M211.6 570.9v3.6" stroke="#9a9a9a" stroke-width="1.3" fill="none"/><path d="M223.5 565.5l8 8M231.5 565.5l-8 8" stroke="#a8a8a8" stroke-width="1.9"/><path d="M373.5 67.5l8 8M381.5 67.5l-8 8" stroke="#f4f4f4" stroke-width="2.1"/><path d="M609.5 67.5l8 8M617.5 67.5l-8 8" stroke="#f4f4f4" stroke-width="2.1"/><path d="M800 67h10M800 70h10l-5 5z" stroke="#9a9a9a" stroke-width="1.2" fill="#9a9a9a"/><path d="M331.5 90.5l8 8M339.5 90.5l-8 8" stroke="#f4f4f4" stroke-width="2.1"/><path d="M418 90.5l8 8M426 90.5l-8 8" stroke="#f4f4f4" stroke-width="2.1"/><path d="M799 90h10M799 93h10l-5 5z" stroke="#9a9a9a" stroke-width="1.2" fill="#9a9a9a"/><path d="M972.7 67.7h7.5l-3.75 4.3z" fill="#9a9a9a"/><path d="M991.3 64.5h3.6v6.2h-3.6z" stroke="#9a9a9a" stroke-width="1.4" fill="#5a5a5a"/><path d="M989.5 70.9h7.2M993.1 70.9v3.6" stroke="#9a9a9a" stroke-width="1.3" fill="none"/><path d="M1005 65.5l8 8M1013 65.5l-8 8" stroke="#a8a8a8" stroke-width="1.9"/><path d="M1005.8 113.9l3.7 -3.7l3.7 3.7" stroke="#9a9a9a" stroke-width="1.3" fill="none"/><path d="M1005.8 242.1l3.7 3.7l3.7 -3.7" stroke="#9a9a9a" stroke-width="1.3" fill="none"/><path d="M835.4 256.3l-3.7 3.7l3.7 3.7" stroke="#9a9a9a" stroke-width="1.3" fill="none"/><path d="M991.6 256.3l3.7 3.7l-3.7 3.7" stroke="#9a9a9a" stroke-width="1.3" fill="none"/><g transform="translate(830 84)"><path d="M1.2 1.2 L7 7" stroke="#d8d8d8" stroke-width="1.3"/><path d="M8 8 L13.8 13.8" stroke="#2d8ee8" stroke-width="2.6" stroke-linecap="round"/><path d="M1.8 13.6 L9.2 6.2" stroke="#f0f0f0" stroke-width="2.4" stroke-linecap="round"/><path d="M8.2 7.2 A3.9 3.9 0 0 1 12.6 1.2 L10.4 3.6 L11.6 4.8 L14 2.6 A3.9 3.9 0 0 1 8.2 7.2 Z" fill="#f0f0f0"/></g><path d="M849 88l5-4l4 4l-5 4z" fill="#d8b830"/><path d="M853 92v4h4" stroke="#999" fill="none"/><path d="M856 93l3-3l3 3l-3 3z" fill="#3ab0e8"/><path d="M858 97l2.5-2.5l2.5 2.5l-2.5 2.5z" fill="#e870c0"/><path d="M868.5 83v16M923.5 83v16" stroke="#222" stroke-width="1"/><path d="M874 84h9l3 3v12h-12z" fill="#f0f0f0"/><path d="M878 98l9-9" stroke="#e8a040" stroke-width="2.5"/><rect x="896" y="84" width="14" height="10" rx="1" fill="#5aa0e0"/><rect x="893" y="87" width="14" height="12" rx="1" fill="#3a80d0" stroke="#cde" stroke-width="1"/><rect x="894" y="88" width="12" height="2" fill="#8cc0f0"/><path d="M928 84h8l3 3v12h-11z" fill="#f0f0f0"/><path d="M937 91l1.4 3 3.2.4-2.3 2.1.6 3.2-2.9-1.6-2.9 1.6.6-3.2-2.3-2.1 3.2-.4z" fill="#f4b020"/><path d="M944 87l10 10M954 87l-10 10" stroke="#777" stroke-width="2.5"/><rect x="961.5" y="86.5" width="15" height="11" fill="#1a1a1a" stroke="#eee" stroke-width="1.3"/><path d="M965 89.5v5" stroke="#eee" stroke-width="1"/><path d="M981 84h7l2 2v10h-9z" fill="#8a8a8a"/><path d="M984.5 87.5h7l3 3v9h-10z" fill="#9a9a9a" stroke="#333" stroke-width="1"/><rect x="833.5" y="108.5" width="8" height="8" fill="#2e2e2e" stroke="#3e3e3e" stroke-width="1"/><path d="M835 112.5h5" stroke="#bbb" stroke-width="1"/><rect x="847" y="105" width="15" height="15" fill="#78c8f0"/><path d="M847 110h5v10h-5z" fill="#f4e8a0"/><path d="M854.5 109v9" stroke="#222" stroke-width="1"/><path d="M852 113l2.5-4l2.5 4z" fill="#111"/><rect x="856" y="107" width="4" height="3" fill="#e02020"/><rect x="866" y="127" width="12" height="9" fill="#9a9a9a"/><rect x="868" y="128.5" width="8" height="6" fill="#2a9ae8"/><path d="M878 130l4-3v9l-4-3z" fill="#8a8a8a"/><rect x="868" y="124" width="6" height="3" fill="#bbb"/><rect x="866" y="145" width="12" height="9" fill="#9a9a9a"/><rect x="868" y="146.5" width="8" height="6" fill="#2a9ae8"/><path d="M878 148l4-3v9l-4-3z" fill="#8a8a8a"/><rect x="868" y="142" width="6" height="3" fill="#bbb"/><circle cx="872.5" cy="165" r="5.5" fill="#f8d880" stroke="#e8b850" stroke-width="1"/><rect x="870" y="170.5" width="5" height="4" fill="#9aa0b0"/><circle cx="872.5" cy="183" r="5.5" fill="#f8d880" stroke="#e8b850" stroke-width="1"/><rect x="870" y="188.5" width="5" height="4" fill="#9aa0b0"/><rect x="851.5" y="199.5" width="8" height="8" fill="#2e2e2e" stroke="#3e3e3e" stroke-width="1"/><path d="M853 203.5h5" stroke="#bbb" stroke-width="1"/><path d="M855.5 201v5" stroke="#bbb" stroke-width="1"/><rect x="865.5" y="196.5" width="15" height="13" fill="#fff" stroke="#2a90e0" stroke-width="1.5"/><defs><linearGradient id="rb"><stop offset="0" stop-color="#e02020"/><stop offset=".35" stop-color="#f0e020"/><stop offset=".65" stop-color="#20c060"/><stop offset="1" stop-color="#2040e0"/></linearGradient></defs><rect x="867.5" y="199.5" width="11" height="8" fill="url(#rb)"/><path d="M866 218h14l2 6l-2 3h-3l-2-2h-4l-2 2h-3l-2-3z" fill="#e8e8e8"/><path d="M869 221h3M870.5 219.5v3" stroke="#2a9a2a" stroke-width="1"/><circle cx="877" cy="221" r="1" fill="#e02020"/><circle cx="873" cy="237" r="6" fill="#2a90e0"/><path d="M869 234q3-2 5 0t2 4q-2 2-4 0z" fill="#40c040"/><path d="M866 244.5h14" stroke="#aaa" stroke-width="1"/><rect x="871" y="242" width="4" height="4" fill="#f0a020"/><rect x="866" y="248" width="12" height="4" fill="#5aa0e0"/><path d="M972.7 282.7h7.5l-3.75 4.3z" fill="#9a9a9a"/><path d="M991.3 279.5h3.6v6.2h-3.6z" stroke="#9a9a9a" stroke-width="1.4" fill="#5a5a5a"/><path d="M989.5 285.9h7.2M993.1 285.9v3.6" stroke="#9a9a9a" stroke-width="1.3" fill="none"/><path d="M1005 280.5l8 8M1013 280.5l-8 8" stroke="#a8a8a8" stroke-width="1.9"/><path d="M999 303l5-4l5 4l-5 4z" fill="#d8b830"/><path d="M1004 307v4h3" stroke="#aaa" fill="none"/><path d="M1007 305l3-3l3 3l-3 3z" fill="#3ab0e8"/><path d="M1008 310l2.5-2.5l2.5 2.5l-2.5 2.5z" fill="#e870c0"/><rect x="831" y="344" width="15" height="13" fill="#f4f4f4" stroke="#3a80c0" stroke-width="1"/><rect x="831" y="344" width="15" height="3" fill="#3a80c0"/><path d="M838 347l6 5l-3 1l-4-4z" fill="#c89050"/><path d="M833 350h3M833 352h3M833 354h6" stroke="#888" stroke-width="0.8"/><path d="M859.5 345h5.5l-5 5.5h3.8l-8.3 8.8l2.6-6.3h-3.4z" fill="#f2c21e" stroke="#b88a10" stroke-width="0.6"/><path d="M1006.3 374.4l3.7 -3.7l3.7 3.7" stroke="#9a9a9a" stroke-width="1.3" fill="none"/><path d="M1006.3 642.6l3.7 3.7l3.7 -3.7" stroke="#9a9a9a" stroke-width="1.3" fill="none"/><rect x="952.5" y="388.5" width="12" height="12" fill="#2a2a2a" stroke="#777" stroke-width="1"/><path d="M954.5 394.5l3 3l5.5-6" stroke="#fff" stroke-width="1.8" fill="none"/><path d="M985 439h8l-4 4z" fill="#a0a0a0"/><path d="M985 462h8l-4 4z" fill="#a0a0a0"/><circle cx="918.5" cy="507" r="2.5" fill="#8a8a8a"/><circle cx="918.5" cy="645" r="2.5" fill="#8a8a8a"/><path d="M935 503.5v7l4.5-3.5z" fill="#c8c8c8"/><rect x="832.5" y="524.5" width="11" height="11" fill="#363636" stroke="#555" stroke-width="1"/><path d="M835.5 530h5M838 527.5v5" stroke="#c8c8c8" stroke-width="1"/><path d="M985 597h8l-4 4z" fill="#a0a0a0"/><path d="M985 620h8l-4 4z" fill="#a0a0a0"/><path d="M935 641.5v7l4.5-3.5z" fill="#c8c8c8"/></svg></body></html>
